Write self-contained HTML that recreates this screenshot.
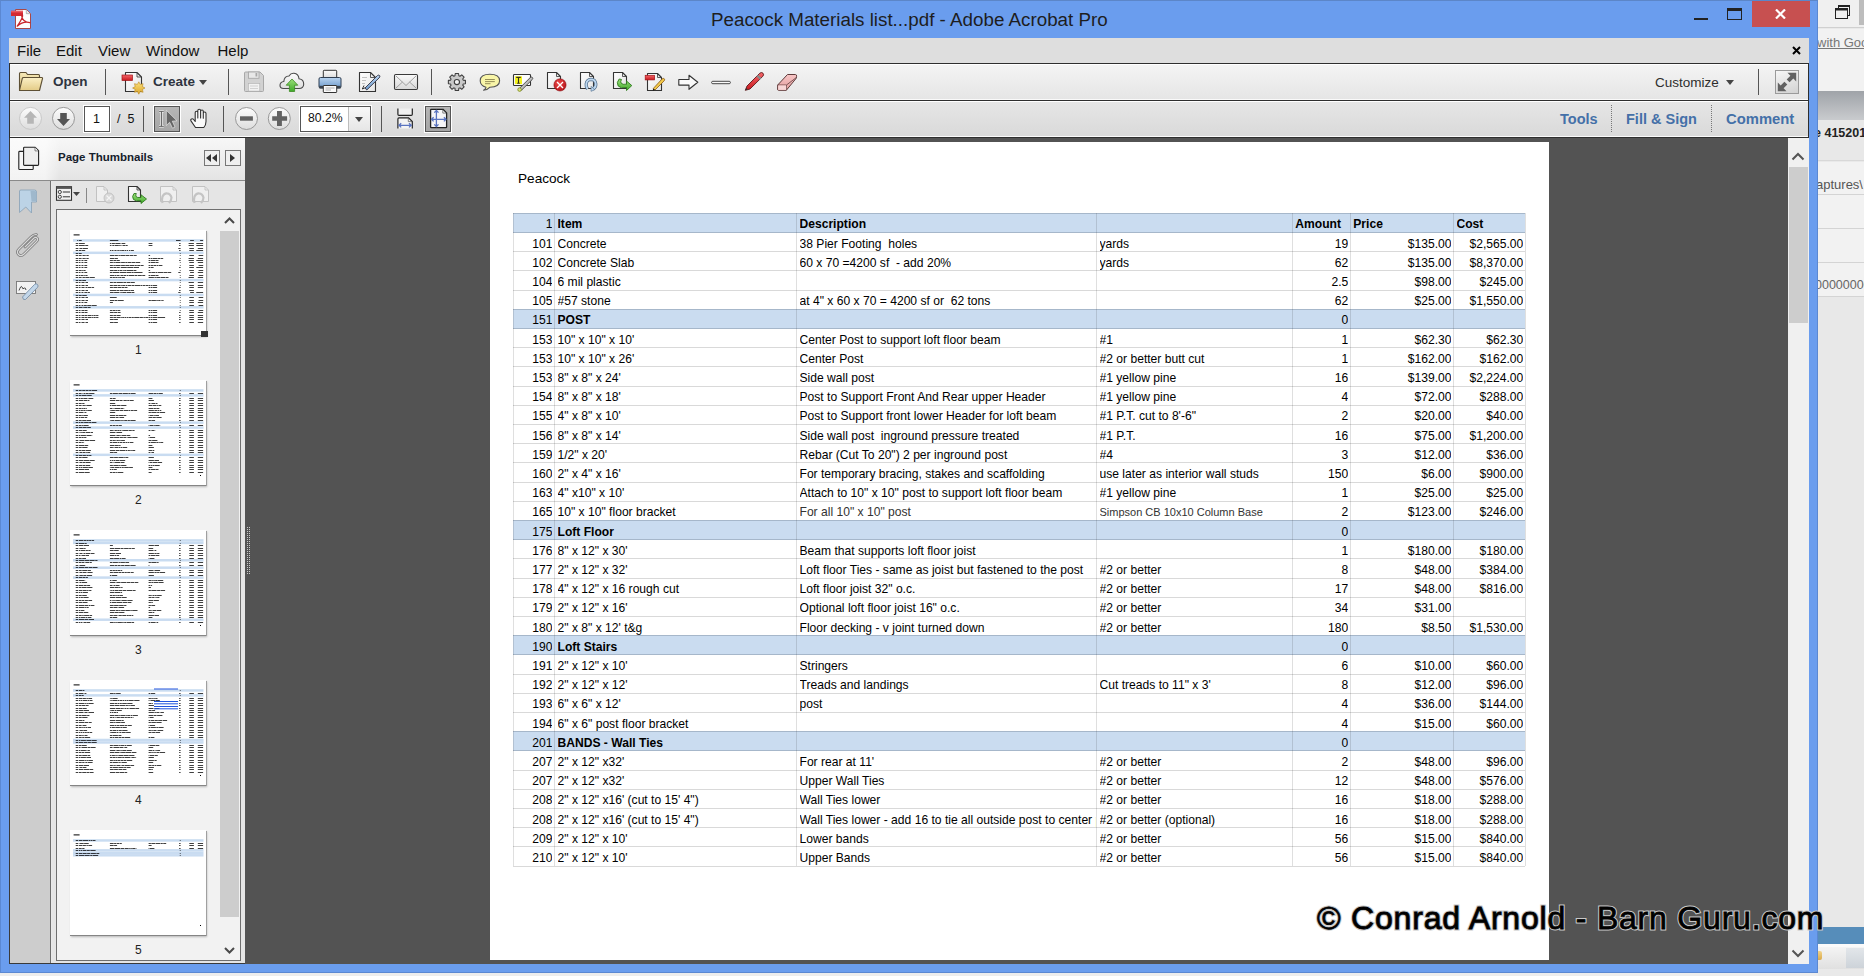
<!DOCTYPE html><html><head><meta charset="utf-8"><style>*{box-sizing:border-box}html,body{margin:0;padding:0}body{width:1864px;height:976px;position:relative;overflow:hidden;background:#EDEDED;font-family:"Liberation Sans", sans-serif;}.a{position:absolute}.tb{position:absolute;white-space:nowrap}</style></head><body><div class="a" style="left:1818px;top:0;width:46px;height:976px;background:#E9E9E9;overflow:hidden"><div class="a" style="left:0;top:0;width:46px;height:28px;background:#F0F0F0;border-bottom:1px solid #D0D0D0"></div><svg style="position:absolute;left:17px;top:4px;" width="16" height="16" viewBox="0 0 16 16"><rect x="3.5" y="1.5" width="11" height="10" fill="none" stroke="#222" stroke-width="1"/><rect x="3" y="1" width="12" height="2" fill="#222"/><rect x="0.5" y="4.5" width="12" height="10" fill="#F0F0F0" stroke="#222" stroke-width="1"/><rect x="0" y="4" width="13" height="2.5" fill="#222"/></svg><div class="a" style="left:41px;top:0;width:6px;height:25px;background:#BDBDBD"></div><div class="a" style="left:0;top:29px;width:46px;height:62px;background:#F2F2F2"></div><div class="tb" style="left:-1px;top:35px;font-size:13px;color:#777;text-decoration:underline">with Google</div><div class="a" style="left:0;top:91px;width:46px;height:29px;background:linear-gradient(#9FA3A8,#C9CBCE)"></div><div class="a" style="left:0;top:120px;width:46px;height:41px;background:#E8E8E8;border-bottom:1px solid #D8D8D8"></div><div class="tb" style="left:-4px;top:126px;font-size:12.5px;font-weight:bold;color:#222">e 41520190</div><div class="a" style="left:0;top:162px;width:46px;height:800px;background:#F2F2F2"></div><div class="tb" style="left:-2px;top:177px;font-size:13px;color:#555">aptures\</div><div class="a" style="left:0;top:194px;width:46px;height:1px;background:#D4D4D4"></div><div class="a" style="left:0;top:228px;width:46px;height:1px;background:#D4D4D4"></div><div class="a" style="left:0;top:262px;width:46px;height:1px;background:#D4D4D4"></div><div class="a" style="left:0;top:296px;width:46px;height:1px;background:#D4D4D4"></div><div class="tb" style="left:-3px;top:278px;font-size:12.5px;color:#666">00000000</div><div class="a" style="left:0;top:297px;width:46px;height:630px;background:#E8E8E8"></div><div class="a" style="left:0;top:927px;width:46px;height:17px;background:#568DBA"></div><div class="a" style="left:0;top:944px;width:46px;height:3px;background:#FAFAFA"></div><div class="a" style="left:0;top:947px;width:46px;height:22px;background:linear-gradient(#F4F4F4,#E0E0E0)"></div><div class="a" style="left:28px;top:948px;width:18px;height:20px;background:linear-gradient(#E2E6EA,#CDD3D9)"></div><div class="a" style="left:-2px;top:951px;width:6px;height:9px;border-radius:2px;background:linear-gradient(#F2D48A,#D9A94A)"></div></div><div class="a" style="left:0;top:973px;width:1818px;height:3px;background:#EDEDED"></div><div class="a" style="left:0;top:0;width:1818px;height:973px;background:#6A9DEE;border:1px solid #5B88D2;border-top-color:#5C86C8"></div><svg style="position:absolute;left:10px;top:8px;" width="23" height="23" viewBox="10 8 23 23"><path d="M15.5 9.5 H26.5 L30.5 13.5 V28.5 H15.5 Z" fill="#FDFDFD" stroke="#A84848" stroke-width="1"/><path d="M26.3 9.8 V13.7 H30.2" fill="#E6E6E6" stroke="#9A9A9A" stroke-width="0.7"/><rect x="11" y="10.8" width="12" height="5.2" fill="#D42A32"/><rect x="11" y="10.8" width="12" height="1.6" fill="#E85A60"/><path d="M17.2 26.2 C19.8 22.5 22 19 22.6 16.2 C22.9 14.6 21.8 14.4 21.7 16 C21.8 19.5 25 22.5 30 22.6 C26.5 21.8 21 22.8 17.2 26.2 Z" fill="none" stroke="#C8242C" stroke-width="1.2" stroke-linejoin="round"/></svg><div class="tb" style="left:711px;top:9px;font-size:18.8px;color:#1E1E1E;letter-spacing:0">Peacock Materials list...pdf - Adobe Acrobat Pro</div><div class="a" style="left:1694px;top:18px;width:14px;height:2px;background:#222"></div><div class="a" style="left:1727px;top:8px;width:15px;height:12px;border:1px solid #222;border-top:3px solid #222"></div><div class="a" style="left:1752px;top:1px;width:58px;height:26px;background:#C75050"></div><svg style="position:absolute;left:1775px;top:9px;" width="11" height="10" viewBox="0 0 11 10"><path d="M1 0.5 L10 9.5 M10 0.5 L1 9.5" stroke="#fff" stroke-width="2.2"/></svg><div class="a" style="left:9px;top:38px;width:1800px;height:25px;background:#DEDEDE"></div><div class="tb" style="left:17px;top:42px;font-size:15px;color:#111">File</div><div class="tb" style="left:56px;top:42px;font-size:15px;color:#111">Edit</div><div class="tb" style="left:98px;top:42px;font-size:15px;color:#111">View</div><div class="tb" style="left:146px;top:42px;font-size:15px;color:#111">Window</div><div class="tb" style="left:217.5px;top:42px;font-size:15px;color:#111">Help</div><svg style="position:absolute;left:1792px;top:46px;" width="9" height="9" viewBox="0 0 9 9"><path d="M1 1 L8 8 M8 1 L1 8" stroke="#000" stroke-width="2"/></svg><div class="a" style="left:9px;top:63px;width:1800px;height:38px;border:1px solid #2E2E2E;background:linear-gradient(#F4F4F4,#E5E5E5);box-shadow:inset 0 1px 0 #fff,inset 0 -1px 0 #fafafa"></div><div class="tb" style="left:53px;top:74px;font-size:13.5px;font-weight:bold;color:#2E3440">Open</div><div class="tb" style="left:153px;top:74px;font-size:13.5px;font-weight:bold;color:#2E3440">Create</div><svg style="position:absolute;left:199px;top:80px;" width="8" height="5" viewBox="0 0 8 5"><path d="M0 0 H8 L4 5 Z" fill="#444"/></svg><div class="a" style="left:105px;top:69px;width:1px;height:26px;background:#555"></div><div class="a" style="left:228px;top:69px;width:1px;height:26px;background:#555"></div><div class="a" style="left:431px;top:69px;width:1px;height:26px;background:#555"></div><div class="tb" style="left:1655px;top:75px;font-size:13.5px;color:#2E2E2E">Customize</div><svg style="position:absolute;left:1726px;top:80px;" width="8" height="5" viewBox="0 0 8 5"><path d="M0 0 H8 L4 5 Z" fill="#444"/></svg><div class="a" style="left:1758px;top:69px;width:1px;height:26px;background:#555"></div><div class="a" style="left:1775px;top:70px;width:24px;height:24px;border:1px solid #9A9A9A;background:linear-gradient(160deg,#F6F6F6,#D2D2D2)"></div><svg style="position:absolute;left:1775px;top:70px;" width="24" height="24" viewBox="0 0 24 24"><path d="M12.5 2.8 H21.2 V11.5 L18.3 8.6 L14.6 12.3 L11.7 9.4 L15.4 5.7 Z M11.5 21.2 H2.8 V12.5 L5.7 15.4 L9.4 11.7 L12.3 14.6 L8.6 18.3 Z" fill="#626262"/></svg><div class="a" style="left:9px;top:100px;width:1800px;height:38px;border:1px solid #2E2E2E;background:linear-gradient(#E6E6E6,#D9D9D9);box-shadow:inset 0 1px 0 #fff,inset 0 -1px 0 #fafafa"></div><div class="a" style="left:143px;top:106px;width:1px;height:26px;background:#555"></div><div class="a" style="left:223px;top:106px;width:1px;height:26px;background:#555"></div><div class="a" style="left:381px;top:106px;width:1px;height:26px;background:#555"></div><div class="a" style="left:84px;top:106px;width:26px;height:26px;background:#fff;border:1px solid #555;box-shadow:0 0 0 1px #fff"></div><div class="tb" style="left:93px;top:112px;font-size:12.5px;color:#111">1</div><div class="tb" style="left:117px;top:112px;font-size:12.5px;color:#111">/&nbsp; 5</div><div class="a" style="left:154px;top:106px;width:26px;height:26px;background:linear-gradient(#B6B6B6,#A6A6A6);border:1px solid #555;box-shadow:0 0 0 1px #fff"></div><div class="a" style="left:300px;top:106px;width:71px;height:26px;background:#fff;border:1px solid #555;box-shadow:0 0 0 1px #fff"></div><div class="a" style="left:348px;top:107px;width:22px;height:24px;background:linear-gradient(#F8F8F8,#E6E6E6);border-left:1px solid #BDBDBD"></div><svg style="position:absolute;left:355px;top:117px;" width="8" height="5" viewBox="0 0 8 5"><path d="M0 0 H8 L4 5 Z" fill="#444"/></svg><div class="tb" style="left:308px;top:111px;font-size:12.2px;color:#111">80.2%</div><div class="a" style="left:425px;top:106px;width:26px;height:26px;background:linear-gradient(#B6B6B6,#A6A6A6);border:1px solid #555;box-shadow:0 0 0 1px #fff"></div><div class="a" style="left:1611px;top:105px;width:1px;height:27px;border-left:1px dotted #777"></div><div class="a" style="left:1711px;top:105px;width:1px;height:27px;border-left:1px dotted #777"></div><div class="tb" style="left:1560px;top:111px;font-size:14.5px;font-weight:bold;color:#4470A8">Tools</div><div class="tb" style="left:1626px;top:111px;font-size:14.5px;font-weight:bold;color:#4470A8">Fill &amp; Sign</div><div class="tb" style="left:1726px;top:111px;font-size:14.8px;font-weight:bold;color:#4470A8">Comment</div><div class="a" style="left:9px;top:138px;width:236px;height:826px;background:#E9E9E9;border-left:1px solid #3A3A3A;border-bottom:1px solid #3A3A3A"></div><div class="a" style="left:10px;top:138px;width:235px;height:43px;background:linear-gradient(#F7F7F7,#E4E4E4);border-bottom:1px solid #8A8A8A"></div><div class="a" style="left:10px;top:138px;width:50px;height:42px;background:linear-gradient(to right,rgba(255,255,255,0.55) 70%,rgba(255,255,255,0))"></div><div class="tb" style="left:58px;top:151px;font-size:11.5px;font-weight:bold;color:#15202B">Page Thumbnails</div><div class="a" style="left:204px;top:150px;width:16px;height:16px;border:1px solid #777;background:#EFEFEF"></div><svg style="position:absolute;left:206px;top:154px;" width="12" height="8" viewBox="0 0 12 8"><path d="M5 0 L0 4 L5 8 Z M11 0 L6 4 L11 8 Z" fill="#333"/></svg><div class="a" style="left:225px;top:150px;width:16px;height:16px;border:1px solid #777;background:#EFEFEF"></div><svg style="position:absolute;left:230px;top:154px;" width="6" height="8" viewBox="0 0 6 8"><path d="M0 0 L5 4 L0 8 Z" fill="#333"/></svg><div class="a" style="left:10px;top:181px;width:41px;height:782px;background:#CDCDCD;border-right:1px solid #6E6E6E"></div><div class="a" style="left:52px;top:181px;width:193px;height:782px;background:#E5E5E5"></div><div class="a" style="left:56px;top:209px;width:185px;height:752px;background:#F2F2F2;border:1px solid #6E6E6E"></div><div class="a" style="left:220px;top:231px;width:19px;height:686px;background:#CDCDCD"></div><svg style="position:absolute;left:224px;top:216px;" width="11" height="9" viewBox="0 0 11 9"><path d="M1 7 L5.5 2.5 L10 7" stroke="#4A4A4A" stroke-width="2" fill="none"/></svg><svg style="position:absolute;left:224px;top:946px;" width="11" height="9" viewBox="0 0 11 9"><path d="M1 2 L5.5 6.5 L10 2" stroke="#4A4A4A" stroke-width="2" fill="none"/></svg><div class="a" style="left:70px;top:230px;width:136px;height:105px;background:#fff;overflow:hidden;box-shadow:0 1px 0 #858585,1px 1px 0 #a0a0a0,1px 2px 2px rgba(0,0,0,0.25)"><svg width="137" height="105" style="position:absolute;left:0;top:0"><rect x="0" y="0" width="137" height="105" fill="#fff"/><rect x="3.6" y="4.4" width="6" height="1" fill="#000"/><rect x="3.0" y="9.20" width="130.5" height="2.48" fill="#C9DCF1"/><rect x="7.2" y="10" width="0.8" height="1" fill="#000" opacity="0.75"/><rect x="8.7" y="10" width="3.0" height="1" fill="#000" opacity="0.75"/><rect x="39.9" y="10" width="8.4" height="1" fill="#000" opacity="0.75"/><rect x="106.0" y="10" width="4.6" height="1" fill="#000" opacity="0.75"/><rect x="120.1" y="10" width="3.8" height="1" fill="#000" opacity="0.75"/><rect x="130.1" y="10" width="3.0" height="1" fill="#000" opacity="0.75"/><rect x="5.7" y="13" width="2.3" height="1" fill="#000" opacity="0.75"/><rect x="8.7" y="13" width="6.1" height="1" fill="#000" opacity="0.75"/><rect x="39.9" y="13" width="1.5" height="1" fill="#000" opacity="0.75"/><rect x="41.9" y="13" width="3.0" height="1" fill="#000" opacity="0.75"/><rect x="45.3" y="13" width="5.3" height="1" fill="#000" opacity="0.75"/><rect x="51.5" y="13" width="3.8" height="1" fill="#000" opacity="0.75"/><rect x="78.6" y="13" width="3.8" height="1" fill="#000" opacity="0.75"/><rect x="109.1" y="13" width="1.5" height="1" fill="#000" opacity="0.75"/><rect x="118.6" y="13" width="5.3" height="1" fill="#000" opacity="0.75"/><rect x="126.3" y="13" width="6.8" height="1" fill="#000" opacity="0.75"/><rect x="5.7" y="15" width="2.3" height="1" fill="#000" opacity="0.75"/><rect x="8.7" y="15" width="6.1" height="1" fill="#000" opacity="0.75"/><rect x="15.2" y="15" width="3.0" height="1" fill="#000" opacity="0.75"/><rect x="39.9" y="15" width="1.5" height="1" fill="#000" opacity="0.75"/><rect x="41.9" y="15" width="0.8" height="1" fill="#000" opacity="0.75"/><rect x="43.0" y="15" width="1.5" height="1" fill="#000" opacity="0.75"/><rect x="45.0" y="15" width="3.8" height="1" fill="#000" opacity="0.75"/><rect x="49.2" y="15" width="1.5" height="1" fill="#000" opacity="0.75"/><rect x="51.5" y="15" width="0.8" height="1" fill="#000" opacity="0.75"/><rect x="52.7" y="15" width="2.3" height="1" fill="#000" opacity="0.75"/><rect x="55.4" y="15" width="2.3" height="1" fill="#000" opacity="0.75"/><rect x="78.6" y="15" width="3.8" height="1" fill="#000" opacity="0.75"/><rect x="109.1" y="15" width="1.5" height="1" fill="#000" opacity="0.75"/><rect x="118.6" y="15" width="5.3" height="1" fill="#000" opacity="0.75"/><rect x="126.3" y="15" width="6.8" height="1" fill="#000" opacity="0.75"/><rect x="5.7" y="18" width="2.3" height="1" fill="#000" opacity="0.75"/><rect x="8.7" y="18" width="0.8" height="1" fill="#000" opacity="0.75"/><rect x="9.9" y="18" width="2.3" height="1" fill="#000" opacity="0.75"/><rect x="12.6" y="18" width="5.3" height="1" fill="#000" opacity="0.75"/><rect x="108.3" y="18" width="2.3" height="1" fill="#000" opacity="0.75"/><rect x="119.3" y="18" width="4.6" height="1" fill="#000" opacity="0.75"/><rect x="127.8" y="18" width="5.3" height="1" fill="#000" opacity="0.75"/><rect x="5.7" y="20" width="2.3" height="1" fill="#000" opacity="0.75"/><rect x="8.7" y="20" width="2.3" height="1" fill="#000" opacity="0.75"/><rect x="11.4" y="20" width="3.8" height="1" fill="#000" opacity="0.75"/><rect x="39.9" y="20" width="1.5" height="1" fill="#000" opacity="0.75"/><rect x="41.9" y="20" width="1.5" height="1" fill="#000" opacity="0.75"/><rect x="43.8" y="20" width="0.8" height="1" fill="#000" opacity="0.75"/><rect x="45.0" y="20" width="1.5" height="1" fill="#000" opacity="0.75"/><rect x="46.9" y="20" width="0.8" height="1" fill="#000" opacity="0.75"/><rect x="48.1" y="20" width="1.5" height="1" fill="#000" opacity="0.75"/><rect x="50.0" y="20" width="0.8" height="1" fill="#000" opacity="0.75"/><rect x="51.2" y="20" width="3.0" height="1" fill="#000" opacity="0.75"/><rect x="54.6" y="20" width="1.5" height="1" fill="#000" opacity="0.75"/><rect x="56.6" y="20" width="1.5" height="1" fill="#000" opacity="0.75"/><rect x="58.9" y="20" width="1.5" height="1" fill="#000" opacity="0.75"/><rect x="60.9" y="20" width="3.0" height="1" fill="#000" opacity="0.75"/><rect x="109.1" y="20" width="1.5" height="1" fill="#000" opacity="0.75"/><rect x="119.3" y="20" width="4.6" height="1" fill="#000" opacity="0.75"/><rect x="126.3" y="20" width="6.8" height="1" fill="#000" opacity="0.75"/><rect x="3.0" y="21.58" width="130.5" height="2.48" fill="#C9DCF1"/><rect x="5.7" y="23" width="2.3" height="1" fill="#000" opacity="0.75"/><rect x="8.7" y="23" width="3.0" height="1" fill="#000" opacity="0.75"/><rect x="109.8" y="23" width="0.8" height="1" fill="#000" opacity="0.75"/><rect x="5.7" y="25" width="2.3" height="1" fill="#000" opacity="0.75"/><rect x="8.7" y="25" width="2.3" height="1" fill="#000" opacity="0.75"/><rect x="11.4" y="25" width="0.8" height="1" fill="#000" opacity="0.75"/><rect x="12.6" y="25" width="2.3" height="1" fill="#000" opacity="0.75"/><rect x="15.3" y="25" width="0.8" height="1" fill="#000" opacity="0.75"/><rect x="16.4" y="25" width="2.3" height="1" fill="#000" opacity="0.75"/><rect x="39.9" y="25" width="4.6" height="1" fill="#000" opacity="0.75"/><rect x="44.9" y="25" width="3.0" height="1" fill="#000" opacity="0.75"/><rect x="48.4" y="25" width="1.5" height="1" fill="#000" opacity="0.75"/><rect x="50.3" y="25" width="5.3" height="1" fill="#000" opacity="0.75"/><rect x="56.0" y="25" width="3.0" height="1" fill="#000" opacity="0.75"/><rect x="59.5" y="25" width="3.8" height="1" fill="#000" opacity="0.75"/><rect x="63.7" y="25" width="3.0" height="1" fill="#000" opacity="0.75"/><rect x="78.6" y="25" width="1.5" height="1" fill="#000" opacity="0.75"/><rect x="109.8" y="25" width="0.8" height="1" fill="#000" opacity="0.75"/><rect x="119.3" y="25" width="4.6" height="1" fill="#000" opacity="0.75"/><rect x="128.6" y="25" width="4.6" height="1" fill="#000" opacity="0.75"/><rect x="5.7" y="28" width="2.3" height="1" fill="#000" opacity="0.75"/><rect x="8.7" y="28" width="2.3" height="1" fill="#000" opacity="0.75"/><rect x="11.4" y="28" width="0.8" height="1" fill="#000" opacity="0.75"/><rect x="12.6" y="28" width="2.3" height="1" fill="#000" opacity="0.75"/><rect x="15.3" y="28" width="0.8" height="1" fill="#000" opacity="0.75"/><rect x="16.4" y="28" width="2.3" height="1" fill="#000" opacity="0.75"/><rect x="39.9" y="28" width="4.6" height="1" fill="#000" opacity="0.75"/><rect x="44.9" y="28" width="3.0" height="1" fill="#000" opacity="0.75"/><rect x="78.6" y="28" width="1.5" height="1" fill="#000" opacity="0.75"/><rect x="80.6" y="28" width="1.5" height="1" fill="#000" opacity="0.75"/><rect x="82.5" y="28" width="4.6" height="1" fill="#000" opacity="0.75"/><rect x="87.5" y="28" width="3.0" height="1" fill="#000" opacity="0.75"/><rect x="90.9" y="28" width="2.3" height="1" fill="#000" opacity="0.75"/><rect x="109.8" y="28" width="0.8" height="1" fill="#000" opacity="0.75"/><rect x="118.6" y="28" width="5.3" height="1" fill="#000" opacity="0.75"/><rect x="127.8" y="28" width="5.3" height="1" fill="#000" opacity="0.75"/><rect x="5.7" y="30" width="2.3" height="1" fill="#000" opacity="0.75"/><rect x="8.7" y="30" width="1.5" height="1" fill="#000" opacity="0.75"/><rect x="10.6" y="30" width="0.8" height="1" fill="#000" opacity="0.75"/><rect x="11.8" y="30" width="1.5" height="1" fill="#000" opacity="0.75"/><rect x="13.8" y="30" width="0.8" height="1" fill="#000" opacity="0.75"/><rect x="14.9" y="30" width="2.3" height="1" fill="#000" opacity="0.75"/><rect x="39.9" y="30" width="3.0" height="1" fill="#000" opacity="0.75"/><rect x="43.4" y="30" width="3.0" height="1" fill="#000" opacity="0.75"/><rect x="46.8" y="30" width="3.0" height="1" fill="#000" opacity="0.75"/><rect x="78.6" y="30" width="1.5" height="1" fill="#000" opacity="0.75"/><rect x="80.6" y="30" width="4.6" height="1" fill="#000" opacity="0.75"/><rect x="85.5" y="30" width="3.0" height="1" fill="#000" opacity="0.75"/><rect x="109.1" y="30" width="1.5" height="1" fill="#000" opacity="0.75"/><rect x="118.6" y="30" width="5.3" height="1" fill="#000" opacity="0.75"/><rect x="126.3" y="30" width="6.8" height="1" fill="#000" opacity="0.75"/><rect x="5.7" y="32" width="2.3" height="1" fill="#000" opacity="0.75"/><rect x="8.7" y="32" width="1.5" height="1" fill="#000" opacity="0.75"/><rect x="10.6" y="32" width="0.8" height="1" fill="#000" opacity="0.75"/><rect x="11.8" y="32" width="1.5" height="1" fill="#000" opacity="0.75"/><rect x="13.8" y="32" width="0.8" height="1" fill="#000" opacity="0.75"/><rect x="14.9" y="32" width="2.3" height="1" fill="#000" opacity="0.75"/><rect x="39.9" y="32" width="3.0" height="1" fill="#000" opacity="0.75"/><rect x="43.4" y="32" width="1.5" height="1" fill="#000" opacity="0.75"/><rect x="45.3" y="32" width="5.3" height="1" fill="#000" opacity="0.75"/><rect x="51.1" y="32" width="3.8" height="1" fill="#000" opacity="0.75"/><rect x="55.3" y="32" width="2.3" height="1" fill="#000" opacity="0.75"/><rect x="58.0" y="32" width="3.0" height="1" fill="#000" opacity="0.75"/><rect x="61.4" y="32" width="3.8" height="1" fill="#000" opacity="0.75"/><rect x="65.6" y="32" width="4.6" height="1" fill="#000" opacity="0.75"/><rect x="78.6" y="32" width="1.5" height="1" fill="#000" opacity="0.75"/><rect x="80.6" y="32" width="4.6" height="1" fill="#000" opacity="0.75"/><rect x="85.5" y="32" width="3.0" height="1" fill="#000" opacity="0.75"/><rect x="109.8" y="32" width="0.8" height="1" fill="#000" opacity="0.75"/><rect x="119.3" y="32" width="4.6" height="1" fill="#000" opacity="0.75"/><rect x="127.8" y="32" width="5.3" height="1" fill="#000" opacity="0.75"/><rect x="5.7" y="35" width="2.3" height="1" fill="#000" opacity="0.75"/><rect x="8.7" y="35" width="1.5" height="1" fill="#000" opacity="0.75"/><rect x="10.6" y="35" width="0.8" height="1" fill="#000" opacity="0.75"/><rect x="11.8" y="35" width="1.5" height="1" fill="#000" opacity="0.75"/><rect x="13.8" y="35" width="0.8" height="1" fill="#000" opacity="0.75"/><rect x="14.9" y="35" width="2.3" height="1" fill="#000" opacity="0.75"/><rect x="39.9" y="35" width="3.0" height="1" fill="#000" opacity="0.75"/><rect x="43.4" y="35" width="1.5" height="1" fill="#000" opacity="0.75"/><rect x="45.3" y="35" width="5.3" height="1" fill="#000" opacity="0.75"/><rect x="51.1" y="35" width="3.8" height="1" fill="#000" opacity="0.75"/><rect x="55.3" y="35" width="3.8" height="1" fill="#000" opacity="0.75"/><rect x="59.5" y="35" width="4.6" height="1" fill="#000" opacity="0.75"/><rect x="64.5" y="35" width="2.3" height="1" fill="#000" opacity="0.75"/><rect x="67.2" y="35" width="3.0" height="1" fill="#000" opacity="0.75"/><rect x="70.6" y="35" width="3.0" height="1" fill="#000" opacity="0.75"/><rect x="78.6" y="35" width="1.5" height="1" fill="#000" opacity="0.75"/><rect x="80.6" y="35" width="3.0" height="1" fill="#000" opacity="0.75"/><rect x="84.0" y="35" width="2.3" height="1" fill="#000" opacity="0.75"/><rect x="86.7" y="35" width="1.5" height="1" fill="#000" opacity="0.75"/><rect x="88.6" y="35" width="3.8" height="1" fill="#000" opacity="0.75"/><rect x="109.8" y="35" width="0.8" height="1" fill="#000" opacity="0.75"/><rect x="119.3" y="35" width="4.6" height="1" fill="#000" opacity="0.75"/><rect x="128.6" y="35" width="4.6" height="1" fill="#000" opacity="0.75"/><rect x="5.7" y="37" width="2.3" height="1" fill="#000" opacity="0.75"/><rect x="8.7" y="37" width="1.5" height="1" fill="#000" opacity="0.75"/><rect x="10.6" y="37" width="0.8" height="1" fill="#000" opacity="0.75"/><rect x="11.8" y="37" width="1.5" height="1" fill="#000" opacity="0.75"/><rect x="13.8" y="37" width="0.8" height="1" fill="#000" opacity="0.75"/><rect x="14.9" y="37" width="2.3" height="1" fill="#000" opacity="0.75"/><rect x="39.9" y="37" width="3.0" height="1" fill="#000" opacity="0.75"/><rect x="43.4" y="37" width="3.0" height="1" fill="#000" opacity="0.75"/><rect x="46.8" y="37" width="3.0" height="1" fill="#000" opacity="0.75"/><rect x="50.7" y="37" width="6.1" height="1" fill="#000" opacity="0.75"/><rect x="57.2" y="37" width="6.1" height="1" fill="#000" opacity="0.75"/><rect x="63.7" y="37" width="5.3" height="1" fill="#000" opacity="0.75"/><rect x="78.6" y="37" width="1.5" height="1" fill="#000" opacity="0.75"/><rect x="80.6" y="37" width="3.0" height="1" fill="#000" opacity="0.75"/><rect x="109.1" y="37" width="1.5" height="1" fill="#000" opacity="0.75"/><rect x="119.3" y="37" width="4.6" height="1" fill="#000" opacity="0.75"/><rect x="126.3" y="37" width="6.8" height="1" fill="#000" opacity="0.75"/><rect x="5.7" y="40" width="2.3" height="1" fill="#000" opacity="0.75"/><rect x="8.7" y="40" width="3.0" height="1" fill="#000" opacity="0.75"/><rect x="12.2" y="40" width="0.8" height="1" fill="#000" opacity="0.75"/><rect x="13.3" y="40" width="2.3" height="1" fill="#000" opacity="0.75"/><rect x="39.9" y="40" width="3.8" height="1" fill="#000" opacity="0.75"/><rect x="44.1" y="40" width="3.0" height="1" fill="#000" opacity="0.75"/><rect x="47.6" y="40" width="1.5" height="1" fill="#000" opacity="0.75"/><rect x="49.5" y="40" width="3.0" height="1" fill="#000" opacity="0.75"/><rect x="53.0" y="40" width="0.8" height="1" fill="#000" opacity="0.75"/><rect x="54.2" y="40" width="2.3" height="1" fill="#000" opacity="0.75"/><rect x="56.9" y="40" width="6.1" height="1" fill="#000" opacity="0.75"/><rect x="63.4" y="40" width="3.0" height="1" fill="#000" opacity="0.75"/><rect x="78.6" y="40" width="1.5" height="1" fill="#000" opacity="0.75"/><rect x="109.8" y="40" width="0.8" height="1" fill="#000" opacity="0.75"/><rect x="119.3" y="40" width="4.6" height="1" fill="#000" opacity="0.75"/><rect x="128.6" y="40" width="4.6" height="1" fill="#000" opacity="0.75"/><rect x="5.7" y="42" width="2.3" height="1" fill="#000" opacity="0.75"/><rect x="8.7" y="42" width="1.5" height="1" fill="#000" opacity="0.75"/><rect x="10.6" y="42" width="0.8" height="1" fill="#000" opacity="0.75"/><rect x="11.8" y="42" width="1.5" height="1" fill="#000" opacity="0.75"/><rect x="13.8" y="42" width="0.8" height="1" fill="#000" opacity="0.75"/><rect x="14.9" y="42" width="2.3" height="1" fill="#000" opacity="0.75"/><rect x="39.9" y="42" width="2.3" height="1" fill="#000" opacity="0.75"/><rect x="42.6" y="42" width="6.8" height="1" fill="#000" opacity="0.75"/><rect x="49.9" y="42" width="6.1" height="1" fill="#000" opacity="0.75"/><rect x="56.4" y="42" width="4.6" height="1" fill="#000" opacity="0.75"/><rect x="61.4" y="42" width="2.3" height="1" fill="#000" opacity="0.75"/><rect x="64.1" y="42" width="8.4" height="1" fill="#000" opacity="0.75"/><rect x="78.6" y="42" width="2.3" height="1" fill="#000" opacity="0.75"/><rect x="81.3" y="42" width="3.8" height="1" fill="#000" opacity="0.75"/><rect x="85.5" y="42" width="1.5" height="1" fill="#000" opacity="0.75"/><rect x="87.5" y="42" width="6.1" height="1" fill="#000" opacity="0.75"/><rect x="94.0" y="42" width="3.0" height="1" fill="#000" opacity="0.75"/><rect x="97.4" y="42" width="3.8" height="1" fill="#000" opacity="0.75"/><rect x="108.3" y="42" width="2.3" height="1" fill="#000" opacity="0.75"/><rect x="120.1" y="42" width="3.8" height="1" fill="#000" opacity="0.75"/><rect x="127.8" y="42" width="5.3" height="1" fill="#000" opacity="0.75"/><rect x="5.7" y="45" width="2.3" height="1" fill="#000" opacity="0.75"/><rect x="8.7" y="45" width="1.5" height="1" fill="#000" opacity="0.75"/><rect x="10.6" y="45" width="3.0" height="1" fill="#000" opacity="0.75"/><rect x="14.1" y="45" width="0.8" height="1" fill="#000" opacity="0.75"/><rect x="15.3" y="45" width="2.3" height="1" fill="#000" opacity="0.75"/><rect x="39.9" y="45" width="4.6" height="1" fill="#000" opacity="0.75"/><rect x="44.9" y="45" width="1.5" height="1" fill="#000" opacity="0.75"/><rect x="46.8" y="45" width="2.3" height="1" fill="#000" opacity="0.75"/><rect x="49.5" y="45" width="0.8" height="1" fill="#000" opacity="0.75"/><rect x="50.7" y="45" width="2.3" height="1" fill="#000" opacity="0.75"/><rect x="53.4" y="45" width="3.0" height="1" fill="#000" opacity="0.75"/><rect x="56.9" y="45" width="1.5" height="1" fill="#000" opacity="0.75"/><rect x="58.8" y="45" width="5.3" height="1" fill="#000" opacity="0.75"/><rect x="64.5" y="45" width="3.0" height="1" fill="#000" opacity="0.75"/><rect x="68.0" y="45" width="3.8" height="1" fill="#000" opacity="0.75"/><rect x="72.2" y="45" width="3.0" height="1" fill="#000" opacity="0.75"/><rect x="78.6" y="45" width="1.5" height="1" fill="#000" opacity="0.75"/><rect x="80.6" y="45" width="4.6" height="1" fill="#000" opacity="0.75"/><rect x="85.5" y="45" width="3.0" height="1" fill="#000" opacity="0.75"/><rect x="109.8" y="45" width="0.8" height="1" fill="#000" opacity="0.75"/><rect x="119.3" y="45" width="4.6" height="1" fill="#000" opacity="0.75"/><rect x="128.6" y="45" width="4.6" height="1" fill="#000" opacity="0.75"/><rect x="5.7" y="47" width="2.3" height="1" fill="#000" opacity="0.75"/><rect x="8.7" y="47" width="2.3" height="1" fill="#000" opacity="0.75"/><rect x="11.4" y="47" width="0.8" height="1" fill="#000" opacity="0.75"/><rect x="12.6" y="47" width="2.3" height="1" fill="#000" opacity="0.75"/><rect x="15.3" y="47" width="3.8" height="1" fill="#000" opacity="0.75"/><rect x="19.5" y="47" width="5.3" height="1" fill="#000" opacity="0.75"/><rect x="39.9" y="47" width="2.3" height="1" fill="#000" opacity="0.75"/><rect x="42.6" y="47" width="2.3" height="1" fill="#000" opacity="0.75"/><rect x="45.3" y="47" width="2.3" height="1" fill="#000" opacity="0.75"/><rect x="48.0" y="47" width="0.8" height="1" fill="#000" opacity="0.75"/><rect x="49.2" y="47" width="2.3" height="1" fill="#000" opacity="0.75"/><rect x="51.9" y="47" width="3.0" height="1" fill="#000" opacity="0.75"/><rect x="78.6" y="47" width="5.3" height="1" fill="#000" opacity="0.75"/><rect x="84.4" y="47" width="1.5" height="1" fill="#000" opacity="0.75"/><rect x="86.3" y="47" width="3.8" height="1" fill="#000" opacity="0.75"/><rect x="90.5" y="47" width="4.6" height="1" fill="#000" opacity="0.75"/><rect x="95.5" y="47" width="3.0" height="1" fill="#000" opacity="0.75"/><rect x="109.8" y="47" width="0.8" height="1" fill="#000" opacity="0.75"/><rect x="118.6" y="47" width="5.3" height="1" fill="#000" opacity="0.75"/><rect x="127.8" y="47" width="5.3" height="1" fill="#000" opacity="0.75"/><rect x="3.0" y="48.83" width="130.5" height="2.48" fill="#C9DCF1"/><rect x="5.7" y="50" width="2.3" height="1" fill="#000" opacity="0.75"/><rect x="8.7" y="50" width="3.0" height="1" fill="#000" opacity="0.75"/><rect x="12.2" y="50" width="3.8" height="1" fill="#000" opacity="0.75"/><rect x="109.8" y="50" width="0.8" height="1" fill="#000" opacity="0.75"/><rect x="5.7" y="52" width="2.3" height="1" fill="#000" opacity="0.75"/><rect x="8.7" y="52" width="1.5" height="1" fill="#000" opacity="0.75"/><rect x="10.6" y="52" width="0.8" height="1" fill="#000" opacity="0.75"/><rect x="11.8" y="52" width="2.3" height="1" fill="#000" opacity="0.75"/><rect x="14.5" y="52" width="0.8" height="1" fill="#000" opacity="0.75"/><rect x="15.7" y="52" width="2.3" height="1" fill="#000" opacity="0.75"/><rect x="39.9" y="52" width="3.0" height="1" fill="#000" opacity="0.75"/><rect x="43.4" y="52" width="3.0" height="1" fill="#000" opacity="0.75"/><rect x="46.8" y="52" width="6.1" height="1" fill="#000" opacity="0.75"/><rect x="53.3" y="52" width="3.0" height="1" fill="#000" opacity="0.75"/><rect x="56.8" y="52" width="3.8" height="1" fill="#000" opacity="0.75"/><rect x="61.0" y="52" width="3.8" height="1" fill="#000" opacity="0.75"/><rect x="109.8" y="52" width="0.8" height="1" fill="#000" opacity="0.75"/><rect x="118.6" y="52" width="5.3" height="1" fill="#000" opacity="0.75"/><rect x="127.8" y="52" width="5.3" height="1" fill="#000" opacity="0.75"/><rect x="5.7" y="55" width="2.3" height="1" fill="#000" opacity="0.75"/><rect x="8.7" y="55" width="1.5" height="1" fill="#000" opacity="0.75"/><rect x="10.6" y="55" width="0.8" height="1" fill="#000" opacity="0.75"/><rect x="11.8" y="55" width="2.3" height="1" fill="#000" opacity="0.75"/><rect x="14.5" y="55" width="0.8" height="1" fill="#000" opacity="0.75"/><rect x="15.7" y="55" width="2.3" height="1" fill="#000" opacity="0.75"/><rect x="39.9" y="55" width="3.0" height="1" fill="#000" opacity="0.75"/><rect x="43.4" y="55" width="3.8" height="1" fill="#000" opacity="0.75"/><rect x="47.6" y="55" width="3.0" height="1" fill="#000" opacity="0.75"/><rect x="51.1" y="55" width="0.8" height="1" fill="#000" opacity="0.75"/><rect x="52.2" y="55" width="3.0" height="1" fill="#000" opacity="0.75"/><rect x="55.7" y="55" width="1.5" height="1" fill="#000" opacity="0.75"/><rect x="57.6" y="55" width="3.8" height="1" fill="#000" opacity="0.75"/><rect x="61.8" y="55" width="2.3" height="1" fill="#000" opacity="0.75"/><rect x="64.5" y="55" width="6.1" height="1" fill="#000" opacity="0.75"/><rect x="71.0" y="55" width="1.5" height="1" fill="#000" opacity="0.75"/><rect x="73.0" y="55" width="2.3" height="1" fill="#000" opacity="0.75"/><rect x="75.7" y="55" width="2.6" height="1" fill="#000" opacity="0.75"/><rect x="78.6" y="55" width="1.5" height="1" fill="#000" opacity="0.75"/><rect x="80.6" y="55" width="1.5" height="1" fill="#000" opacity="0.75"/><rect x="82.5" y="55" width="4.6" height="1" fill="#000" opacity="0.75"/><rect x="109.8" y="55" width="0.8" height="1" fill="#000" opacity="0.75"/><rect x="119.3" y="55" width="4.6" height="1" fill="#000" opacity="0.75"/><rect x="127.8" y="55" width="5.3" height="1" fill="#000" opacity="0.75"/><rect x="5.7" y="57" width="2.3" height="1" fill="#000" opacity="0.75"/><rect x="8.7" y="57" width="1.5" height="1" fill="#000" opacity="0.75"/><rect x="10.6" y="57" width="0.8" height="1" fill="#000" opacity="0.75"/><rect x="11.8" y="57" width="2.3" height="1" fill="#000" opacity="0.75"/><rect x="14.5" y="57" width="0.8" height="1" fill="#000" opacity="0.75"/><rect x="15.7" y="57" width="1.5" height="1" fill="#000" opacity="0.75"/><rect x="17.6" y="57" width="3.8" height="1" fill="#000" opacity="0.75"/><rect x="21.8" y="57" width="2.3" height="1" fill="#000" opacity="0.75"/><rect x="39.9" y="57" width="3.0" height="1" fill="#000" opacity="0.75"/><rect x="43.4" y="57" width="3.8" height="1" fill="#000" opacity="0.75"/><rect x="47.6" y="57" width="3.8" height="1" fill="#000" opacity="0.75"/><rect x="51.8" y="57" width="2.3" height="1" fill="#000" opacity="0.75"/><rect x="54.5" y="57" width="3.0" height="1" fill="#000" opacity="0.75"/><rect x="78.6" y="57" width="1.5" height="1" fill="#000" opacity="0.75"/><rect x="80.6" y="57" width="1.5" height="1" fill="#000" opacity="0.75"/><rect x="82.5" y="57" width="4.6" height="1" fill="#000" opacity="0.75"/><rect x="109.1" y="57" width="1.5" height="1" fill="#000" opacity="0.75"/><rect x="119.3" y="57" width="4.6" height="1" fill="#000" opacity="0.75"/><rect x="127.8" y="57" width="5.3" height="1" fill="#000" opacity="0.75"/><rect x="5.7" y="60" width="2.3" height="1" fill="#000" opacity="0.75"/><rect x="8.7" y="60" width="1.5" height="1" fill="#000" opacity="0.75"/><rect x="10.6" y="60" width="0.8" height="1" fill="#000" opacity="0.75"/><rect x="11.8" y="60" width="2.3" height="1" fill="#000" opacity="0.75"/><rect x="14.5" y="60" width="0.8" height="1" fill="#000" opacity="0.75"/><rect x="15.7" y="60" width="2.3" height="1" fill="#000" opacity="0.75"/><rect x="39.9" y="60" width="6.1" height="1" fill="#000" opacity="0.75"/><rect x="46.4" y="60" width="3.0" height="1" fill="#000" opacity="0.75"/><rect x="49.9" y="60" width="3.8" height="1" fill="#000" opacity="0.75"/><rect x="54.1" y="60" width="3.8" height="1" fill="#000" opacity="0.75"/><rect x="58.3" y="60" width="2.3" height="1" fill="#000" opacity="0.75"/><rect x="61.0" y="60" width="3.0" height="1" fill="#000" opacity="0.75"/><rect x="78.6" y="60" width="1.5" height="1" fill="#000" opacity="0.75"/><rect x="80.6" y="60" width="1.5" height="1" fill="#000" opacity="0.75"/><rect x="82.5" y="60" width="4.6" height="1" fill="#000" opacity="0.75"/><rect x="109.1" y="60" width="1.5" height="1" fill="#000" opacity="0.75"/><rect x="119.3" y="60" width="4.6" height="1" fill="#000" opacity="0.75"/><rect x="5.7" y="62" width="2.3" height="1" fill="#000" opacity="0.75"/><rect x="8.7" y="62" width="1.5" height="1" fill="#000" opacity="0.75"/><rect x="10.6" y="62" width="0.8" height="1" fill="#000" opacity="0.75"/><rect x="11.8" y="62" width="1.5" height="1" fill="#000" opacity="0.75"/><rect x="13.8" y="62" width="0.8" height="1" fill="#000" opacity="0.75"/><rect x="14.9" y="62" width="2.3" height="1" fill="#000" opacity="0.75"/><rect x="17.6" y="62" width="2.3" height="1" fill="#000" opacity="0.75"/><rect x="39.9" y="62" width="3.8" height="1" fill="#000" opacity="0.75"/><rect x="44.1" y="62" width="5.3" height="1" fill="#000" opacity="0.75"/><rect x="49.9" y="62" width="0.8" height="1" fill="#000" opacity="0.75"/><rect x="51.1" y="62" width="0.8" height="1" fill="#000" opacity="0.75"/><rect x="52.2" y="62" width="3.8" height="1" fill="#000" opacity="0.75"/><rect x="56.5" y="62" width="4.6" height="1" fill="#000" opacity="0.75"/><rect x="61.4" y="62" width="3.0" height="1" fill="#000" opacity="0.75"/><rect x="78.6" y="62" width="1.5" height="1" fill="#000" opacity="0.75"/><rect x="80.6" y="62" width="1.5" height="1" fill="#000" opacity="0.75"/><rect x="82.5" y="62" width="4.6" height="1" fill="#000" opacity="0.75"/><rect x="108.3" y="62" width="2.3" height="1" fill="#000" opacity="0.75"/><rect x="120.1" y="62" width="3.8" height="1" fill="#000" opacity="0.75"/><rect x="126.3" y="62" width="6.8" height="1" fill="#000" opacity="0.75"/><rect x="3.0" y="63.69" width="130.5" height="2.48" fill="#C9DCF1"/><rect x="5.7" y="65" width="2.3" height="1" fill="#000" opacity="0.75"/><rect x="8.7" y="65" width="3.0" height="1" fill="#000" opacity="0.75"/><rect x="12.2" y="65" width="4.6" height="1" fill="#000" opacity="0.75"/><rect x="109.8" y="65" width="0.8" height="1" fill="#000" opacity="0.75"/><rect x="5.7" y="67" width="2.3" height="1" fill="#000" opacity="0.75"/><rect x="8.7" y="67" width="1.5" height="1" fill="#000" opacity="0.75"/><rect x="10.6" y="67" width="0.8" height="1" fill="#000" opacity="0.75"/><rect x="11.8" y="67" width="2.3" height="1" fill="#000" opacity="0.75"/><rect x="14.5" y="67" width="0.8" height="1" fill="#000" opacity="0.75"/><rect x="15.7" y="67" width="2.3" height="1" fill="#000" opacity="0.75"/><rect x="39.9" y="67" width="6.8" height="1" fill="#000" opacity="0.75"/><rect x="109.8" y="67" width="0.8" height="1" fill="#000" opacity="0.75"/><rect x="119.3" y="67" width="4.6" height="1" fill="#000" opacity="0.75"/><rect x="128.6" y="67" width="4.6" height="1" fill="#000" opacity="0.75"/><rect x="5.7" y="70" width="2.3" height="1" fill="#000" opacity="0.75"/><rect x="8.7" y="70" width="1.5" height="1" fill="#000" opacity="0.75"/><rect x="10.6" y="70" width="0.8" height="1" fill="#000" opacity="0.75"/><rect x="11.8" y="70" width="2.3" height="1" fill="#000" opacity="0.75"/><rect x="14.5" y="70" width="0.8" height="1" fill="#000" opacity="0.75"/><rect x="15.7" y="70" width="2.3" height="1" fill="#000" opacity="0.75"/><rect x="39.9" y="70" width="4.6" height="1" fill="#000" opacity="0.75"/><rect x="44.9" y="70" width="2.3" height="1" fill="#000" opacity="0.75"/><rect x="47.6" y="70" width="6.1" height="1" fill="#000" opacity="0.75"/><rect x="78.6" y="70" width="2.3" height="1" fill="#000" opacity="0.75"/><rect x="81.3" y="70" width="4.6" height="1" fill="#000" opacity="0.75"/><rect x="86.3" y="70" width="1.5" height="1" fill="#000" opacity="0.75"/><rect x="88.2" y="70" width="2.3" height="1" fill="#000" opacity="0.75"/><rect x="90.9" y="70" width="0.8" height="1" fill="#000" opacity="0.75"/><rect x="92.1" y="70" width="1.5" height="1" fill="#000" opacity="0.75"/><rect x="109.8" y="70" width="0.8" height="1" fill="#000" opacity="0.75"/><rect x="119.3" y="70" width="4.6" height="1" fill="#000" opacity="0.75"/><rect x="128.6" y="70" width="4.6" height="1" fill="#000" opacity="0.75"/><rect x="5.7" y="72" width="2.3" height="1" fill="#000" opacity="0.75"/><rect x="8.7" y="72" width="1.5" height="1" fill="#000" opacity="0.75"/><rect x="10.6" y="72" width="0.8" height="1" fill="#000" opacity="0.75"/><rect x="11.8" y="72" width="1.5" height="1" fill="#000" opacity="0.75"/><rect x="13.8" y="72" width="0.8" height="1" fill="#000" opacity="0.75"/><rect x="14.9" y="72" width="2.3" height="1" fill="#000" opacity="0.75"/><rect x="39.9" y="72" width="3.0" height="1" fill="#000" opacity="0.75"/><rect x="109.8" y="72" width="0.8" height="1" fill="#000" opacity="0.75"/><rect x="119.3" y="72" width="4.6" height="1" fill="#000" opacity="0.75"/><rect x="127.8" y="72" width="5.3" height="1" fill="#000" opacity="0.75"/><rect x="5.7" y="75" width="2.3" height="1" fill="#000" opacity="0.75"/><rect x="8.7" y="75" width="1.5" height="1" fill="#000" opacity="0.75"/><rect x="10.6" y="75" width="0.8" height="1" fill="#000" opacity="0.75"/><rect x="11.8" y="75" width="1.5" height="1" fill="#000" opacity="0.75"/><rect x="13.8" y="75" width="3.0" height="1" fill="#000" opacity="0.75"/><rect x="17.2" y="75" width="3.8" height="1" fill="#000" opacity="0.75"/><rect x="21.4" y="75" width="5.3" height="1" fill="#000" opacity="0.75"/><rect x="109.8" y="75" width="0.8" height="1" fill="#000" opacity="0.75"/><rect x="119.3" y="75" width="4.6" height="1" fill="#000" opacity="0.75"/><rect x="128.6" y="75" width="4.6" height="1" fill="#000" opacity="0.75"/><rect x="3.0" y="76.07" width="130.5" height="2.48" fill="#C9DCF1"/><rect x="5.7" y="77" width="2.3" height="1" fill="#000" opacity="0.75"/><rect x="8.7" y="77" width="3.8" height="1" fill="#000" opacity="0.75"/><rect x="12.9" y="77" width="0.8" height="1" fill="#000" opacity="0.75"/><rect x="14.1" y="77" width="3.0" height="1" fill="#000" opacity="0.75"/><rect x="17.6" y="77" width="3.0" height="1" fill="#000" opacity="0.75"/><rect x="109.8" y="77" width="0.8" height="1" fill="#000" opacity="0.75"/><rect x="5.7" y="80" width="2.3" height="1" fill="#000" opacity="0.75"/><rect x="8.7" y="80" width="1.5" height="1" fill="#000" opacity="0.75"/><rect x="10.6" y="80" width="0.8" height="1" fill="#000" opacity="0.75"/><rect x="11.8" y="80" width="2.3" height="1" fill="#000" opacity="0.75"/><rect x="14.5" y="80" width="3.0" height="1" fill="#000" opacity="0.75"/><rect x="39.9" y="80" width="2.3" height="1" fill="#000" opacity="0.75"/><rect x="42.6" y="80" width="3.0" height="1" fill="#000" opacity="0.75"/><rect x="46.1" y="80" width="1.5" height="1" fill="#000" opacity="0.75"/><rect x="48.0" y="80" width="2.3" height="1" fill="#000" opacity="0.75"/><rect x="78.6" y="80" width="1.5" height="1" fill="#000" opacity="0.75"/><rect x="80.6" y="80" width="1.5" height="1" fill="#000" opacity="0.75"/><rect x="82.5" y="80" width="4.6" height="1" fill="#000" opacity="0.75"/><rect x="109.8" y="80" width="0.8" height="1" fill="#000" opacity="0.75"/><rect x="119.3" y="80" width="4.6" height="1" fill="#000" opacity="0.75"/><rect x="128.6" y="80" width="4.6" height="1" fill="#000" opacity="0.75"/><rect x="5.7" y="82" width="2.3" height="1" fill="#000" opacity="0.75"/><rect x="8.7" y="82" width="1.5" height="1" fill="#000" opacity="0.75"/><rect x="10.6" y="82" width="0.8" height="1" fill="#000" opacity="0.75"/><rect x="11.8" y="82" width="2.3" height="1" fill="#000" opacity="0.75"/><rect x="14.5" y="82" width="3.0" height="1" fill="#000" opacity="0.75"/><rect x="39.9" y="82" width="3.8" height="1" fill="#000" opacity="0.75"/><rect x="44.1" y="82" width="3.0" height="1" fill="#000" opacity="0.75"/><rect x="47.6" y="82" width="3.0" height="1" fill="#000" opacity="0.75"/><rect x="78.6" y="82" width="1.5" height="1" fill="#000" opacity="0.75"/><rect x="80.6" y="82" width="1.5" height="1" fill="#000" opacity="0.75"/><rect x="82.5" y="82" width="4.6" height="1" fill="#000" opacity="0.75"/><rect x="109.1" y="82" width="1.5" height="1" fill="#000" opacity="0.75"/><rect x="119.3" y="82" width="4.6" height="1" fill="#000" opacity="0.75"/><rect x="127.8" y="82" width="5.3" height="1" fill="#000" opacity="0.75"/><rect x="5.7" y="85" width="2.3" height="1" fill="#000" opacity="0.75"/><rect x="8.7" y="85" width="1.5" height="1" fill="#000" opacity="0.75"/><rect x="10.6" y="85" width="0.8" height="1" fill="#000" opacity="0.75"/><rect x="11.8" y="85" width="2.3" height="1" fill="#000" opacity="0.75"/><rect x="14.5" y="85" width="3.0" height="1" fill="#000" opacity="0.75"/><rect x="18.0" y="85" width="3.0" height="1" fill="#000" opacity="0.75"/><rect x="21.4" y="85" width="1.5" height="1" fill="#000" opacity="0.75"/><rect x="23.4" y="85" width="2.3" height="1" fill="#000" opacity="0.75"/><rect x="26.1" y="85" width="2.3" height="1" fill="#000" opacity="0.75"/><rect x="39.9" y="85" width="3.0" height="1" fill="#000" opacity="0.75"/><rect x="43.4" y="85" width="3.0" height="1" fill="#000" opacity="0.75"/><rect x="46.8" y="85" width="3.8" height="1" fill="#000" opacity="0.75"/><rect x="78.6" y="85" width="1.5" height="1" fill="#000" opacity="0.75"/><rect x="80.6" y="85" width="1.5" height="1" fill="#000" opacity="0.75"/><rect x="82.5" y="85" width="4.6" height="1" fill="#000" opacity="0.75"/><rect x="109.1" y="85" width="1.5" height="1" fill="#000" opacity="0.75"/><rect x="119.3" y="85" width="4.6" height="1" fill="#000" opacity="0.75"/><rect x="127.8" y="85" width="5.3" height="1" fill="#000" opacity="0.75"/><rect x="5.7" y="87" width="2.3" height="1" fill="#000" opacity="0.75"/><rect x="8.7" y="87" width="1.5" height="1" fill="#000" opacity="0.75"/><rect x="10.6" y="87" width="0.8" height="1" fill="#000" opacity="0.75"/><rect x="11.8" y="87" width="2.3" height="1" fill="#000" opacity="0.75"/><rect x="14.5" y="87" width="3.0" height="1" fill="#000" opacity="0.75"/><rect x="18.0" y="87" width="3.0" height="1" fill="#000" opacity="0.75"/><rect x="21.4" y="87" width="1.5" height="1" fill="#000" opacity="0.75"/><rect x="23.4" y="87" width="2.3" height="1" fill="#000" opacity="0.75"/><rect x="26.1" y="87" width="2.3" height="1" fill="#000" opacity="0.75"/><rect x="39.9" y="87" width="3.0" height="1" fill="#000" opacity="0.75"/><rect x="43.4" y="87" width="3.0" height="1" fill="#000" opacity="0.75"/><rect x="46.8" y="87" width="3.8" height="1" fill="#000" opacity="0.75"/><rect x="51.1" y="87" width="0.8" height="1" fill="#000" opacity="0.75"/><rect x="52.2" y="87" width="2.3" height="1" fill="#000" opacity="0.75"/><rect x="54.9" y="87" width="1.5" height="1" fill="#000" opacity="0.75"/><rect x="56.9" y="87" width="1.5" height="1" fill="#000" opacity="0.75"/><rect x="58.8" y="87" width="2.3" height="1" fill="#000" opacity="0.75"/><rect x="61.5" y="87" width="2.3" height="1" fill="#000" opacity="0.75"/><rect x="64.2" y="87" width="5.3" height="1" fill="#000" opacity="0.75"/><rect x="69.9" y="87" width="3.0" height="1" fill="#000" opacity="0.75"/><rect x="73.4" y="87" width="1.5" height="1" fill="#000" opacity="0.75"/><rect x="75.3" y="87" width="2.9" height="1" fill="#000" opacity="0.75"/><rect x="78.6" y="87" width="1.5" height="1" fill="#000" opacity="0.75"/><rect x="80.6" y="87" width="1.5" height="1" fill="#000" opacity="0.75"/><rect x="82.5" y="87" width="4.6" height="1" fill="#000" opacity="0.75"/><rect x="87.5" y="87" width="7.6" height="1" fill="#000" opacity="0.75"/><rect x="109.1" y="87" width="1.5" height="1" fill="#000" opacity="0.75"/><rect x="119.3" y="87" width="4.6" height="1" fill="#000" opacity="0.75"/><rect x="127.8" y="87" width="5.3" height="1" fill="#000" opacity="0.75"/><rect x="5.7" y="89" width="2.3" height="1" fill="#000" opacity="0.75"/><rect x="8.7" y="89" width="1.5" height="1" fill="#000" opacity="0.75"/><rect x="10.6" y="89" width="0.8" height="1" fill="#000" opacity="0.75"/><rect x="11.8" y="89" width="2.3" height="1" fill="#000" opacity="0.75"/><rect x="14.5" y="89" width="0.8" height="1" fill="#000" opacity="0.75"/><rect x="15.7" y="89" width="2.3" height="1" fill="#000" opacity="0.75"/><rect x="39.9" y="89" width="3.8" height="1" fill="#000" opacity="0.75"/><rect x="44.1" y="89" width="3.8" height="1" fill="#000" opacity="0.75"/><rect x="78.6" y="89" width="1.5" height="1" fill="#000" opacity="0.75"/><rect x="80.6" y="89" width="1.5" height="1" fill="#000" opacity="0.75"/><rect x="82.5" y="89" width="4.6" height="1" fill="#000" opacity="0.75"/><rect x="109.1" y="89" width="1.5" height="1" fill="#000" opacity="0.75"/><rect x="119.3" y="89" width="4.6" height="1" fill="#000" opacity="0.75"/><rect x="127.8" y="89" width="5.3" height="1" fill="#000" opacity="0.75"/><rect x="5.7" y="92" width="2.3" height="1" fill="#000" opacity="0.75"/><rect x="8.7" y="92" width="1.5" height="1" fill="#000" opacity="0.75"/><rect x="10.6" y="92" width="0.8" height="1" fill="#000" opacity="0.75"/><rect x="11.8" y="92" width="2.3" height="1" fill="#000" opacity="0.75"/><rect x="14.5" y="92" width="0.8" height="1" fill="#000" opacity="0.75"/><rect x="15.7" y="92" width="2.3" height="1" fill="#000" opacity="0.75"/><rect x="39.9" y="92" width="3.8" height="1" fill="#000" opacity="0.75"/><rect x="44.1" y="92" width="3.8" height="1" fill="#000" opacity="0.75"/><rect x="78.6" y="92" width="1.5" height="1" fill="#000" opacity="0.75"/><rect x="80.6" y="92" width="1.5" height="1" fill="#000" opacity="0.75"/><rect x="82.5" y="92" width="4.6" height="1" fill="#000" opacity="0.75"/><rect x="109.1" y="92" width="1.5" height="1" fill="#000" opacity="0.75"/><rect x="119.3" y="92" width="4.6" height="1" fill="#000" opacity="0.75"/><rect x="127.8" y="92" width="5.3" height="1" fill="#000" opacity="0.75"/></svg></div><div class="tb" style="left:135px;top:343px;font-size:12px;color:#222">1</div><div class="a" style="left:70px;top:380px;width:136px;height:105px;background:#fff;overflow:hidden;box-shadow:0 1px 0 #858585,1px 1px 0 #a0a0a0,1px 2px 2px rgba(0,0,0,0.25)"><svg width="137" height="105" style="position:absolute;left:0;top:0"><rect x="0" y="0" width="137" height="105" fill="#fff"/><rect x="3.6" y="4.4" width="6" height="1" fill="#000"/><rect x="3.0" y="9.20" width="130.5" height="2.48" fill="#C9DCF1"/><rect x="5.7" y="10" width="2.3" height="1" fill="#000" opacity="0.75"/><rect x="8.7" y="10" width="3.0" height="1" fill="#000" opacity="0.75"/><rect x="12.2" y="10" width="3.0" height="1" fill="#000" opacity="0.75"/><rect x="15.6" y="10" width="3.0" height="1" fill="#000" opacity="0.75"/><rect x="19.1" y="10" width="2.3" height="1" fill="#000" opacity="0.75"/><rect x="21.8" y="10" width="5.3" height="1" fill="#000" opacity="0.75"/><rect x="109.8" y="10" width="0.8" height="1" fill="#000" opacity="0.75"/><rect x="5.7" y="13" width="2.3" height="1" fill="#000" opacity="0.75"/><rect x="8.7" y="13" width="2.3" height="1" fill="#000" opacity="0.75"/><rect x="11.4" y="13" width="0.8" height="1" fill="#000" opacity="0.75"/><rect x="12.6" y="13" width="0.8" height="1" fill="#000" opacity="0.75"/><rect x="13.8" y="13" width="1.5" height="1" fill="#000" opacity="0.75"/><rect x="15.7" y="13" width="3.0" height="1" fill="#000" opacity="0.75"/><rect x="19.1" y="13" width="5.3" height="1" fill="#000" opacity="0.75"/><rect x="39.9" y="13" width="2.3" height="1" fill="#000" opacity="0.75"/><rect x="42.6" y="13" width="5.3" height="1" fill="#000" opacity="0.75"/><rect x="48.4" y="13" width="3.8" height="1" fill="#000" opacity="0.75"/><rect x="52.6" y="13" width="5.3" height="1" fill="#000" opacity="0.75"/><rect x="58.3" y="13" width="2.3" height="1" fill="#000" opacity="0.75"/><rect x="61.0" y="13" width="4.6" height="1" fill="#000" opacity="0.75"/><rect x="78.6" y="13" width="4.6" height="1" fill="#000" opacity="0.75"/><rect x="83.6" y="13" width="3.0" height="1" fill="#000" opacity="0.75"/><rect x="87.1" y="13" width="1.5" height="1" fill="#000" opacity="0.75"/><rect x="89.0" y="13" width="3.8" height="1" fill="#000" opacity="0.75"/><rect x="109.1" y="13" width="1.5" height="1" fill="#000" opacity="0.75"/><rect x="119.3" y="13" width="4.6" height="1" fill="#000" opacity="0.75"/><rect x="127.8" y="13" width="5.3" height="1" fill="#000" opacity="0.75"/><rect x="3.0" y="14.15" width="130.5" height="2.48" fill="#C9DCF1"/><rect x="5.7" y="15" width="2.3" height="1" fill="#000" opacity="0.75"/><rect x="8.7" y="15" width="2.3" height="1" fill="#000" opacity="0.75"/><rect x="11.4" y="15" width="5.3" height="1" fill="#000" opacity="0.75"/><rect x="17.1" y="15" width="4.6" height="1" fill="#000" opacity="0.75"/><rect x="109.8" y="15" width="0.8" height="1" fill="#000" opacity="0.75"/><rect x="5.7" y="18" width="2.3" height="1" fill="#000" opacity="0.75"/><rect x="8.7" y="18" width="1.5" height="1" fill="#000" opacity="0.75"/><rect x="10.6" y="18" width="2.3" height="1" fill="#000" opacity="0.75"/><rect x="13.3" y="18" width="3.8" height="1" fill="#000" opacity="0.75"/><rect x="17.6" y="18" width="0.8" height="1" fill="#000" opacity="0.75"/><rect x="18.7" y="18" width="4.6" height="1" fill="#000" opacity="0.75"/><rect x="39.9" y="18" width="2.3" height="1" fill="#000" opacity="0.75"/><rect x="42.6" y="18" width="3.0" height="1" fill="#000" opacity="0.75"/><rect x="78.6" y="18" width="3.8" height="1" fill="#000" opacity="0.75"/><rect x="109.1" y="18" width="1.5" height="1" fill="#000" opacity="0.75"/><rect x="119.3" y="18" width="4.6" height="1" fill="#000" opacity="0.75"/><rect x="127.8" y="18" width="5.3" height="1" fill="#000" opacity="0.75"/><rect x="5.7" y="20" width="2.3" height="1" fill="#000" opacity="0.75"/><rect x="8.7" y="20" width="4.6" height="1" fill="#000" opacity="0.75"/><rect x="13.7" y="20" width="3.8" height="1" fill="#000" opacity="0.75"/><rect x="17.9" y="20" width="1.5" height="1" fill="#000" opacity="0.75"/><rect x="39.9" y="20" width="5.3" height="1" fill="#000" opacity="0.75"/><rect x="45.7" y="20" width="3.8" height="1" fill="#000" opacity="0.75"/><rect x="49.9" y="20" width="2.3" height="1" fill="#000" opacity="0.75"/><rect x="52.6" y="20" width="0.8" height="1" fill="#000" opacity="0.75"/><rect x="53.8" y="20" width="3.0" height="1" fill="#000" opacity="0.75"/><rect x="57.2" y="20" width="2.3" height="1" fill="#000" opacity="0.75"/><rect x="59.9" y="20" width="3.8" height="1" fill="#000" opacity="0.75"/><rect x="78.6" y="20" width="5.3" height="1" fill="#000" opacity="0.75"/><rect x="109.1" y="20" width="1.5" height="1" fill="#000" opacity="0.75"/><rect x="119.3" y="20" width="4.6" height="1" fill="#000" opacity="0.75"/><rect x="127.8" y="20" width="5.3" height="1" fill="#000" opacity="0.75"/><rect x="5.7" y="23" width="2.3" height="1" fill="#000" opacity="0.75"/><rect x="8.7" y="23" width="3.0" height="1" fill="#000" opacity="0.75"/><rect x="12.2" y="23" width="2.3" height="1" fill="#000" opacity="0.75"/><rect x="39.9" y="23" width="5.3" height="1" fill="#000" opacity="0.75"/><rect x="78.6" y="23" width="1.5" height="1" fill="#000" opacity="0.75"/><rect x="80.6" y="23" width="0.8" height="1" fill="#000" opacity="0.75"/><rect x="81.7" y="23" width="3.8" height="1" fill="#000" opacity="0.75"/><rect x="86.0" y="23" width="1.5" height="1" fill="#000" opacity="0.75"/><rect x="109.1" y="23" width="1.5" height="1" fill="#000" opacity="0.75"/><rect x="119.3" y="23" width="4.6" height="1" fill="#000" opacity="0.75"/><rect x="127.8" y="23" width="5.3" height="1" fill="#000" opacity="0.75"/><rect x="5.7" y="25" width="2.3" height="1" fill="#000" opacity="0.75"/><rect x="8.7" y="25" width="2.3" height="1" fill="#000" opacity="0.75"/><rect x="11.4" y="25" width="0.8" height="1" fill="#000" opacity="0.75"/><rect x="12.6" y="25" width="2.3" height="1" fill="#000" opacity="0.75"/><rect x="15.3" y="25" width="0.8" height="1" fill="#000" opacity="0.75"/><rect x="16.4" y="25" width="5.3" height="1" fill="#000" opacity="0.75"/><rect x="39.9" y="25" width="1.5" height="1" fill="#000" opacity="0.75"/><rect x="41.9" y="25" width="4.6" height="1" fill="#000" opacity="0.75"/><rect x="46.8" y="25" width="3.8" height="1" fill="#000" opacity="0.75"/><rect x="51.1" y="25" width="5.3" height="1" fill="#000" opacity="0.75"/><rect x="78.6" y="25" width="3.8" height="1" fill="#000" opacity="0.75"/><rect x="82.8" y="25" width="3.8" height="1" fill="#000" opacity="0.75"/><rect x="87.1" y="25" width="1.5" height="1" fill="#000" opacity="0.75"/><rect x="89.0" y="25" width="2.3" height="1" fill="#000" opacity="0.75"/><rect x="109.1" y="25" width="1.5" height="1" fill="#000" opacity="0.75"/><rect x="119.3" y="25" width="4.6" height="1" fill="#000" opacity="0.75"/><rect x="127.8" y="25" width="5.3" height="1" fill="#000" opacity="0.75"/><rect x="5.7" y="28" width="2.3" height="1" fill="#000" opacity="0.75"/><rect x="8.7" y="28" width="2.3" height="1" fill="#000" opacity="0.75"/><rect x="11.4" y="28" width="1.5" height="1" fill="#000" opacity="0.75"/><rect x="13.3" y="28" width="2.3" height="1" fill="#000" opacity="0.75"/><rect x="16.0" y="28" width="0.8" height="1" fill="#000" opacity="0.75"/><rect x="39.9" y="28" width="2.3" height="1" fill="#000" opacity="0.75"/><rect x="42.6" y="28" width="0.8" height="1" fill="#000" opacity="0.75"/><rect x="43.8" y="28" width="0.8" height="1" fill="#000" opacity="0.75"/><rect x="45.0" y="28" width="5.3" height="1" fill="#000" opacity="0.75"/><rect x="50.7" y="28" width="2.3" height="1" fill="#000" opacity="0.75"/><rect x="53.4" y="28" width="0.8" height="1" fill="#000" opacity="0.75"/><rect x="78.6" y="28" width="4.6" height="1" fill="#000" opacity="0.75"/><rect x="83.6" y="28" width="2.3" height="1" fill="#000" opacity="0.75"/><rect x="86.3" y="28" width="3.0" height="1" fill="#000" opacity="0.75"/><rect x="109.1" y="28" width="1.5" height="1" fill="#000" opacity="0.75"/><rect x="119.3" y="28" width="4.6" height="1" fill="#000" opacity="0.75"/><rect x="127.8" y="28" width="5.3" height="1" fill="#000" opacity="0.75"/><rect x="5.7" y="30" width="2.3" height="1" fill="#000" opacity="0.75"/><rect x="8.7" y="30" width="1.5" height="1" fill="#000" opacity="0.75"/><rect x="10.6" y="30" width="2.3" height="1" fill="#000" opacity="0.75"/><rect x="13.3" y="30" width="2.3" height="1" fill="#000" opacity="0.75"/><rect x="16.0" y="30" width="0.8" height="1" fill="#000" opacity="0.75"/><rect x="17.2" y="30" width="4.6" height="1" fill="#000" opacity="0.75"/><rect x="39.9" y="30" width="0.8" height="1" fill="#000" opacity="0.75"/><rect x="41.1" y="30" width="3.8" height="1" fill="#000" opacity="0.75"/><rect x="45.3" y="30" width="3.8" height="1" fill="#000" opacity="0.75"/><rect x="49.5" y="30" width="3.8" height="1" fill="#000" opacity="0.75"/><rect x="53.8" y="30" width="4.6" height="1" fill="#000" opacity="0.75"/><rect x="58.7" y="30" width="1.5" height="1" fill="#000" opacity="0.75"/><rect x="60.7" y="30" width="3.0" height="1" fill="#000" opacity="0.75"/><rect x="64.1" y="30" width="3.0" height="1" fill="#000" opacity="0.75"/><rect x="78.6" y="30" width="5.3" height="1" fill="#000" opacity="0.75"/><rect x="84.4" y="30" width="3.0" height="1" fill="#000" opacity="0.75"/><rect x="87.8" y="30" width="1.5" height="1" fill="#000" opacity="0.75"/><rect x="89.8" y="30" width="1.5" height="1" fill="#000" opacity="0.75"/><rect x="109.1" y="30" width="1.5" height="1" fill="#000" opacity="0.75"/><rect x="119.3" y="30" width="4.6" height="1" fill="#000" opacity="0.75"/><rect x="127.8" y="30" width="5.3" height="1" fill="#000" opacity="0.75"/><rect x="5.7" y="32" width="2.3" height="1" fill="#000" opacity="0.75"/><rect x="8.7" y="32" width="4.6" height="1" fill="#000" opacity="0.75"/><rect x="13.7" y="32" width="0.8" height="1" fill="#000" opacity="0.75"/><rect x="14.9" y="32" width="1.5" height="1" fill="#000" opacity="0.75"/><rect x="39.9" y="32" width="5.3" height="1" fill="#000" opacity="0.75"/><rect x="78.6" y="32" width="2.3" height="1" fill="#000" opacity="0.75"/><rect x="81.3" y="32" width="5.3" height="1" fill="#000" opacity="0.75"/><rect x="87.1" y="32" width="2.3" height="1" fill="#000" opacity="0.75"/><rect x="89.8" y="32" width="5.3" height="1" fill="#000" opacity="0.75"/><rect x="109.1" y="32" width="1.5" height="1" fill="#000" opacity="0.75"/><rect x="119.3" y="32" width="4.6" height="1" fill="#000" opacity="0.75"/><rect x="127.8" y="32" width="5.3" height="1" fill="#000" opacity="0.75"/><rect x="5.7" y="35" width="2.3" height="1" fill="#000" opacity="0.75"/><rect x="8.7" y="35" width="3.0" height="1" fill="#000" opacity="0.75"/><rect x="12.2" y="35" width="0.8" height="1" fill="#000" opacity="0.75"/><rect x="13.3" y="35" width="4.6" height="1" fill="#000" opacity="0.75"/><rect x="39.9" y="35" width="5.3" height="1" fill="#000" opacity="0.75"/><rect x="45.7" y="35" width="2.3" height="1" fill="#000" opacity="0.75"/><rect x="48.4" y="35" width="4.6" height="1" fill="#000" opacity="0.75"/><rect x="53.3" y="35" width="3.0" height="1" fill="#000" opacity="0.75"/><rect x="78.6" y="35" width="0.8" height="1" fill="#000" opacity="0.75"/><rect x="79.8" y="35" width="3.8" height="1" fill="#000" opacity="0.75"/><rect x="84.0" y="35" width="0.8" height="1" fill="#000" opacity="0.75"/><rect x="85.2" y="35" width="3.8" height="1" fill="#000" opacity="0.75"/><rect x="109.1" y="35" width="1.5" height="1" fill="#000" opacity="0.75"/><rect x="119.3" y="35" width="4.6" height="1" fill="#000" opacity="0.75"/><rect x="127.8" y="35" width="5.3" height="1" fill="#000" opacity="0.75"/><rect x="5.7" y="37" width="2.3" height="1" fill="#000" opacity="0.75"/><rect x="8.7" y="37" width="1.5" height="1" fill="#000" opacity="0.75"/><rect x="10.6" y="37" width="3.8" height="1" fill="#000" opacity="0.75"/><rect x="14.9" y="37" width="2.3" height="1" fill="#000" opacity="0.75"/><rect x="39.9" y="37" width="5.3" height="1" fill="#000" opacity="0.75"/><rect x="45.7" y="37" width="2.3" height="1" fill="#000" opacity="0.75"/><rect x="48.4" y="37" width="0.8" height="1" fill="#000" opacity="0.75"/><rect x="49.5" y="37" width="4.6" height="1" fill="#000" opacity="0.75"/><rect x="78.6" y="37" width="3.8" height="1" fill="#000" opacity="0.75"/><rect x="82.8" y="37" width="3.0" height="1" fill="#000" opacity="0.75"/><rect x="86.3" y="37" width="5.3" height="1" fill="#000" opacity="0.75"/><rect x="109.1" y="37" width="1.5" height="1" fill="#000" opacity="0.75"/><rect x="119.3" y="37" width="4.6" height="1" fill="#000" opacity="0.75"/><rect x="127.8" y="37" width="5.3" height="1" fill="#000" opacity="0.75"/><rect x="5.7" y="40" width="2.3" height="1" fill="#000" opacity="0.75"/><rect x="8.7" y="40" width="3.0" height="1" fill="#000" opacity="0.75"/><rect x="12.2" y="40" width="3.8" height="1" fill="#000" opacity="0.75"/><rect x="16.4" y="40" width="4.6" height="1" fill="#000" opacity="0.75"/><rect x="39.9" y="40" width="0.8" height="1" fill="#000" opacity="0.75"/><rect x="41.1" y="40" width="3.0" height="1" fill="#000" opacity="0.75"/><rect x="44.6" y="40" width="5.3" height="1" fill="#000" opacity="0.75"/><rect x="50.3" y="40" width="1.5" height="1" fill="#000" opacity="0.75"/><rect x="52.2" y="40" width="1.5" height="1" fill="#000" opacity="0.75"/><rect x="54.2" y="40" width="3.0" height="1" fill="#000" opacity="0.75"/><rect x="57.6" y="40" width="2.3" height="1" fill="#000" opacity="0.75"/><rect x="60.3" y="40" width="5.3" height="1" fill="#000" opacity="0.75"/><rect x="78.6" y="40" width="2.3" height="1" fill="#000" opacity="0.75"/><rect x="81.3" y="40" width="3.8" height="1" fill="#000" opacity="0.75"/><rect x="109.1" y="40" width="1.5" height="1" fill="#000" opacity="0.75"/><rect x="119.3" y="40" width="4.6" height="1" fill="#000" opacity="0.75"/><rect x="127.8" y="40" width="5.3" height="1" fill="#000" opacity="0.75"/><rect x="3.0" y="41.40" width="130.5" height="2.48" fill="#C9DCF1"/><rect x="5.7" y="42" width="2.3" height="1" fill="#000" opacity="0.75"/><rect x="8.7" y="42" width="1.5" height="1" fill="#000" opacity="0.75"/><rect x="10.6" y="42" width="3.0" height="1" fill="#000" opacity="0.75"/><rect x="14.1" y="42" width="4.6" height="1" fill="#000" opacity="0.75"/><rect x="19.1" y="42" width="2.3" height="1" fill="#000" opacity="0.75"/><rect x="21.8" y="42" width="4.6" height="1" fill="#000" opacity="0.75"/><rect x="109.8" y="42" width="0.8" height="1" fill="#000" opacity="0.75"/><rect x="5.7" y="45" width="2.3" height="1" fill="#000" opacity="0.75"/><rect x="8.7" y="45" width="2.3" height="1" fill="#000" opacity="0.75"/><rect x="11.4" y="45" width="1.5" height="1" fill="#000" opacity="0.75"/><rect x="13.3" y="45" width="5.3" height="1" fill="#000" opacity="0.75"/><rect x="39.9" y="45" width="2.3" height="1" fill="#000" opacity="0.75"/><rect x="42.6" y="45" width="3.0" height="1" fill="#000" opacity="0.75"/><rect x="46.1" y="45" width="2.3" height="1" fill="#000" opacity="0.75"/><rect x="48.8" y="45" width="3.0" height="1" fill="#000" opacity="0.75"/><rect x="78.6" y="45" width="0.8" height="1" fill="#000" opacity="0.75"/><rect x="79.8" y="45" width="3.8" height="1" fill="#000" opacity="0.75"/><rect x="84.0" y="45" width="0.8" height="1" fill="#000" opacity="0.75"/><rect x="85.2" y="45" width="3.8" height="1" fill="#000" opacity="0.75"/><rect x="89.4" y="45" width="0.8" height="1" fill="#000" opacity="0.75"/><rect x="109.1" y="45" width="1.5" height="1" fill="#000" opacity="0.75"/><rect x="119.3" y="45" width="4.6" height="1" fill="#000" opacity="0.75"/><rect x="127.8" y="45" width="5.3" height="1" fill="#000" opacity="0.75"/><rect x="3.0" y="46.35" width="130.5" height="2.48" fill="#C9DCF1"/><rect x="5.7" y="47" width="2.3" height="1" fill="#000" opacity="0.75"/><rect x="8.7" y="47" width="3.8" height="1" fill="#000" opacity="0.75"/><rect x="12.9" y="47" width="3.8" height="1" fill="#000" opacity="0.75"/><rect x="17.1" y="47" width="3.8" height="1" fill="#000" opacity="0.75"/><rect x="109.8" y="47" width="0.8" height="1" fill="#000" opacity="0.75"/><rect x="5.7" y="50" width="2.3" height="1" fill="#000" opacity="0.75"/><rect x="8.7" y="50" width="3.8" height="1" fill="#000" opacity="0.75"/><rect x="12.9" y="50" width="3.8" height="1" fill="#000" opacity="0.75"/><rect x="39.9" y="50" width="3.0" height="1" fill="#000" opacity="0.75"/><rect x="43.4" y="50" width="0.8" height="1" fill="#000" opacity="0.75"/><rect x="44.6" y="50" width="2.3" height="1" fill="#000" opacity="0.75"/><rect x="47.3" y="50" width="2.3" height="1" fill="#000" opacity="0.75"/><rect x="49.9" y="50" width="1.5" height="1" fill="#000" opacity="0.75"/><rect x="51.9" y="50" width="0.8" height="1" fill="#000" opacity="0.75"/><rect x="53.1" y="50" width="5.3" height="1" fill="#000" opacity="0.75"/><rect x="58.8" y="50" width="3.0" height="1" fill="#000" opacity="0.75"/><rect x="62.3" y="50" width="2.3" height="1" fill="#000" opacity="0.75"/><rect x="78.6" y="50" width="1.5" height="1" fill="#000" opacity="0.75"/><rect x="80.6" y="50" width="0.8" height="1" fill="#000" opacity="0.75"/><rect x="81.7" y="50" width="2.3" height="1" fill="#000" opacity="0.75"/><rect x="84.4" y="50" width="0.8" height="1" fill="#000" opacity="0.75"/><rect x="109.1" y="50" width="1.5" height="1" fill="#000" opacity="0.75"/><rect x="119.3" y="50" width="4.6" height="1" fill="#000" opacity="0.75"/><rect x="127.8" y="50" width="5.3" height="1" fill="#000" opacity="0.75"/><rect x="5.7" y="52" width="2.3" height="1" fill="#000" opacity="0.75"/><rect x="8.7" y="52" width="0.8" height="1" fill="#000" opacity="0.75"/><rect x="9.9" y="52" width="0.8" height="1" fill="#000" opacity="0.75"/><rect x="11.1" y="52" width="0.8" height="1" fill="#000" opacity="0.75"/><rect x="12.2" y="52" width="3.0" height="1" fill="#000" opacity="0.75"/><rect x="15.7" y="52" width="4.6" height="1" fill="#000" opacity="0.75"/><rect x="20.7" y="52" width="2.3" height="1" fill="#000" opacity="0.75"/><rect x="39.9" y="52" width="5.3" height="1" fill="#000" opacity="0.75"/><rect x="45.7" y="52" width="0.8" height="1" fill="#000" opacity="0.75"/><rect x="46.8" y="52" width="5.3" height="1" fill="#000" opacity="0.75"/><rect x="109.1" y="52" width="1.5" height="1" fill="#000" opacity="0.75"/><rect x="119.3" y="52" width="4.6" height="1" fill="#000" opacity="0.75"/><rect x="127.8" y="52" width="5.3" height="1" fill="#000" opacity="0.75"/><rect x="5.7" y="55" width="2.3" height="1" fill="#000" opacity="0.75"/><rect x="8.7" y="55" width="1.5" height="1" fill="#000" opacity="0.75"/><rect x="10.6" y="55" width="5.3" height="1" fill="#000" opacity="0.75"/><rect x="16.4" y="55" width="4.6" height="1" fill="#000" opacity="0.75"/><rect x="21.4" y="55" width="0.8" height="1" fill="#000" opacity="0.75"/><rect x="39.9" y="55" width="5.3" height="1" fill="#000" opacity="0.75"/><rect x="45.7" y="55" width="0.8" height="1" fill="#000" opacity="0.75"/><rect x="46.8" y="55" width="3.0" height="1" fill="#000" opacity="0.75"/><rect x="50.3" y="55" width="0.8" height="1" fill="#000" opacity="0.75"/><rect x="51.5" y="55" width="4.6" height="1" fill="#000" opacity="0.75"/><rect x="56.5" y="55" width="3.8" height="1" fill="#000" opacity="0.75"/><rect x="78.6" y="55" width="1.5" height="1" fill="#000" opacity="0.75"/><rect x="109.1" y="55" width="1.5" height="1" fill="#000" opacity="0.75"/><rect x="119.3" y="55" width="4.6" height="1" fill="#000" opacity="0.75"/><rect x="127.8" y="55" width="5.3" height="1" fill="#000" opacity="0.75"/><rect x="5.7" y="57" width="2.3" height="1" fill="#000" opacity="0.75"/><rect x="8.7" y="57" width="2.3" height="1" fill="#000" opacity="0.75"/><rect x="11.4" y="57" width="2.3" height="1" fill="#000" opacity="0.75"/><rect x="14.1" y="57" width="2.3" height="1" fill="#000" opacity="0.75"/><rect x="39.9" y="57" width="3.8" height="1" fill="#000" opacity="0.75"/><rect x="44.1" y="57" width="5.3" height="1" fill="#000" opacity="0.75"/><rect x="49.9" y="57" width="3.0" height="1" fill="#000" opacity="0.75"/><rect x="53.3" y="57" width="3.0" height="1" fill="#000" opacity="0.75"/><rect x="56.8" y="57" width="0.8" height="1" fill="#000" opacity="0.75"/><rect x="58.0" y="57" width="3.8" height="1" fill="#000" opacity="0.75"/><rect x="62.2" y="57" width="5.3" height="1" fill="#000" opacity="0.75"/><rect x="78.6" y="57" width="0.8" height="1" fill="#000" opacity="0.75"/><rect x="79.8" y="57" width="5.3" height="1" fill="#000" opacity="0.75"/><rect x="109.1" y="57" width="1.5" height="1" fill="#000" opacity="0.75"/><rect x="119.3" y="57" width="4.6" height="1" fill="#000" opacity="0.75"/><rect x="127.8" y="57" width="5.3" height="1" fill="#000" opacity="0.75"/><rect x="5.7" y="60" width="2.3" height="1" fill="#000" opacity="0.75"/><rect x="8.7" y="60" width="0.8" height="1" fill="#000" opacity="0.75"/><rect x="9.9" y="60" width="4.6" height="1" fill="#000" opacity="0.75"/><rect x="14.9" y="60" width="4.6" height="1" fill="#000" opacity="0.75"/><rect x="19.8" y="60" width="5.3" height="1" fill="#000" opacity="0.75"/><rect x="39.9" y="60" width="2.3" height="1" fill="#000" opacity="0.75"/><rect x="42.6" y="60" width="2.3" height="1" fill="#000" opacity="0.75"/><rect x="45.3" y="60" width="0.8" height="1" fill="#000" opacity="0.75"/><rect x="46.5" y="60" width="2.3" height="1" fill="#000" opacity="0.75"/><rect x="49.2" y="60" width="1.5" height="1" fill="#000" opacity="0.75"/><rect x="51.1" y="60" width="3.8" height="1" fill="#000" opacity="0.75"/><rect x="78.6" y="60" width="3.0" height="1" fill="#000" opacity="0.75"/><rect x="82.1" y="60" width="5.3" height="1" fill="#000" opacity="0.75"/><rect x="109.1" y="60" width="1.5" height="1" fill="#000" opacity="0.75"/><rect x="119.3" y="60" width="4.6" height="1" fill="#000" opacity="0.75"/><rect x="127.8" y="60" width="5.3" height="1" fill="#000" opacity="0.75"/><rect x="5.7" y="62" width="2.3" height="1" fill="#000" opacity="0.75"/><rect x="8.7" y="62" width="2.3" height="1" fill="#000" opacity="0.75"/><rect x="11.4" y="62" width="1.5" height="1" fill="#000" opacity="0.75"/><rect x="13.3" y="62" width="0.8" height="1" fill="#000" opacity="0.75"/><rect x="39.9" y="62" width="2.3" height="1" fill="#000" opacity="0.75"/><rect x="42.6" y="62" width="4.6" height="1" fill="#000" opacity="0.75"/><rect x="47.6" y="62" width="1.5" height="1" fill="#000" opacity="0.75"/><rect x="49.5" y="62" width="3.0" height="1" fill="#000" opacity="0.75"/><rect x="53.0" y="62" width="2.3" height="1" fill="#000" opacity="0.75"/><rect x="55.7" y="62" width="1.5" height="1" fill="#000" opacity="0.75"/><rect x="57.6" y="62" width="1.5" height="1" fill="#000" opacity="0.75"/><rect x="59.6" y="62" width="3.8" height="1" fill="#000" opacity="0.75"/><rect x="78.6" y="62" width="1.5" height="1" fill="#000" opacity="0.75"/><rect x="80.6" y="62" width="5.3" height="1" fill="#000" opacity="0.75"/><rect x="86.3" y="62" width="2.3" height="1" fill="#000" opacity="0.75"/><rect x="89.0" y="62" width="0.8" height="1" fill="#000" opacity="0.75"/><rect x="90.2" y="62" width="3.0" height="1" fill="#000" opacity="0.75"/><rect x="109.1" y="62" width="1.5" height="1" fill="#000" opacity="0.75"/><rect x="119.3" y="62" width="4.6" height="1" fill="#000" opacity="0.75"/><rect x="127.8" y="62" width="5.3" height="1" fill="#000" opacity="0.75"/><rect x="5.7" y="65" width="2.3" height="1" fill="#000" opacity="0.75"/><rect x="8.7" y="65" width="5.3" height="1" fill="#000" opacity="0.75"/><rect x="14.4" y="65" width="3.8" height="1" fill="#000" opacity="0.75"/><rect x="39.9" y="65" width="4.6" height="1" fill="#000" opacity="0.75"/><rect x="44.9" y="65" width="3.8" height="1" fill="#000" opacity="0.75"/><rect x="49.1" y="65" width="1.5" height="1" fill="#000" opacity="0.75"/><rect x="78.6" y="65" width="3.8" height="1" fill="#000" opacity="0.75"/><rect x="109.1" y="65" width="1.5" height="1" fill="#000" opacity="0.75"/><rect x="119.3" y="65" width="4.6" height="1" fill="#000" opacity="0.75"/><rect x="127.8" y="65" width="5.3" height="1" fill="#000" opacity="0.75"/><rect x="5.7" y="67" width="2.3" height="1" fill="#000" opacity="0.75"/><rect x="8.7" y="67" width="3.0" height="1" fill="#000" opacity="0.75"/><rect x="12.2" y="67" width="5.3" height="1" fill="#000" opacity="0.75"/><rect x="39.9" y="67" width="3.0" height="1" fill="#000" opacity="0.75"/><rect x="43.4" y="67" width="0.8" height="1" fill="#000" opacity="0.75"/><rect x="44.6" y="67" width="3.8" height="1" fill="#000" opacity="0.75"/><rect x="48.8" y="67" width="1.5" height="1" fill="#000" opacity="0.75"/><rect x="50.7" y="67" width="1.5" height="1" fill="#000" opacity="0.75"/><rect x="52.6" y="67" width="4.6" height="1" fill="#000" opacity="0.75"/><rect x="78.6" y="67" width="5.3" height="1" fill="#000" opacity="0.75"/><rect x="109.1" y="67" width="1.5" height="1" fill="#000" opacity="0.75"/><rect x="119.3" y="67" width="4.6" height="1" fill="#000" opacity="0.75"/><rect x="127.8" y="67" width="5.3" height="1" fill="#000" opacity="0.75"/><rect x="5.7" y="70" width="2.3" height="1" fill="#000" opacity="0.75"/><rect x="8.7" y="70" width="2.3" height="1" fill="#000" opacity="0.75"/><rect x="11.4" y="70" width="3.8" height="1" fill="#000" opacity="0.75"/><rect x="15.6" y="70" width="5.3" height="1" fill="#000" opacity="0.75"/><rect x="39.9" y="70" width="5.3" height="1" fill="#000" opacity="0.75"/><rect x="45.7" y="70" width="3.8" height="1" fill="#000" opacity="0.75"/><rect x="49.9" y="70" width="5.3" height="1" fill="#000" opacity="0.75"/><rect x="55.6" y="70" width="1.5" height="1" fill="#000" opacity="0.75"/><rect x="57.6" y="70" width="2.3" height="1" fill="#000" opacity="0.75"/><rect x="60.3" y="70" width="1.5" height="1" fill="#000" opacity="0.75"/><rect x="62.2" y="70" width="3.0" height="1" fill="#000" opacity="0.75"/><rect x="78.6" y="70" width="3.8" height="1" fill="#000" opacity="0.75"/><rect x="82.8" y="70" width="1.5" height="1" fill="#000" opacity="0.75"/><rect x="109.1" y="70" width="1.5" height="1" fill="#000" opacity="0.75"/><rect x="119.3" y="70" width="4.6" height="1" fill="#000" opacity="0.75"/><rect x="127.8" y="70" width="5.3" height="1" fill="#000" opacity="0.75"/><rect x="5.7" y="72" width="2.3" height="1" fill="#000" opacity="0.75"/><rect x="8.7" y="72" width="0.8" height="1" fill="#000" opacity="0.75"/><rect x="9.9" y="72" width="2.3" height="1" fill="#000" opacity="0.75"/><rect x="12.6" y="72" width="3.0" height="1" fill="#000" opacity="0.75"/><rect x="16.0" y="72" width="0.8" height="1" fill="#000" opacity="0.75"/><rect x="17.2" y="72" width="3.0" height="1" fill="#000" opacity="0.75"/><rect x="39.9" y="72" width="3.8" height="1" fill="#000" opacity="0.75"/><rect x="44.1" y="72" width="3.0" height="1" fill="#000" opacity="0.75"/><rect x="78.6" y="72" width="1.5" height="1" fill="#000" opacity="0.75"/><rect x="80.6" y="72" width="0.8" height="1" fill="#000" opacity="0.75"/><rect x="81.7" y="72" width="2.3" height="1" fill="#000" opacity="0.75"/><rect x="109.1" y="72" width="1.5" height="1" fill="#000" opacity="0.75"/><rect x="119.3" y="72" width="4.6" height="1" fill="#000" opacity="0.75"/><rect x="127.8" y="72" width="5.3" height="1" fill="#000" opacity="0.75"/><rect x="3.0" y="73.59" width="130.5" height="2.48" fill="#C9DCF1"/><rect x="5.7" y="75" width="2.3" height="1" fill="#000" opacity="0.75"/><rect x="8.7" y="75" width="3.8" height="1" fill="#000" opacity="0.75"/><rect x="12.9" y="75" width="3.0" height="1" fill="#000" opacity="0.75"/><rect x="16.4" y="75" width="2.3" height="1" fill="#000" opacity="0.75"/><rect x="19.1" y="75" width="2.3" height="1" fill="#000" opacity="0.75"/><rect x="109.8" y="75" width="0.8" height="1" fill="#000" opacity="0.75"/><rect x="5.7" y="77" width="2.3" height="1" fill="#000" opacity="0.75"/><rect x="8.7" y="77" width="3.0" height="1" fill="#000" opacity="0.75"/><rect x="12.2" y="77" width="5.3" height="1" fill="#000" opacity="0.75"/><rect x="39.9" y="77" width="3.8" height="1" fill="#000" opacity="0.75"/><rect x="44.1" y="77" width="3.8" height="1" fill="#000" opacity="0.75"/><rect x="48.4" y="77" width="4.6" height="1" fill="#000" opacity="0.75"/><rect x="53.3" y="77" width="1.5" height="1" fill="#000" opacity="0.75"/><rect x="55.3" y="77" width="3.0" height="1" fill="#000" opacity="0.75"/><rect x="78.6" y="77" width="5.3" height="1" fill="#000" opacity="0.75"/><rect x="109.1" y="77" width="1.5" height="1" fill="#000" opacity="0.75"/><rect x="119.3" y="77" width="4.6" height="1" fill="#000" opacity="0.75"/><rect x="127.8" y="77" width="5.3" height="1" fill="#000" opacity="0.75"/><rect x="5.7" y="80" width="2.3" height="1" fill="#000" opacity="0.75"/><rect x="8.7" y="80" width="4.6" height="1" fill="#000" opacity="0.75"/><rect x="13.7" y="80" width="5.3" height="1" fill="#000" opacity="0.75"/><rect x="19.4" y="80" width="5.3" height="1" fill="#000" opacity="0.75"/><rect x="39.9" y="80" width="1.5" height="1" fill="#000" opacity="0.75"/><rect x="41.9" y="80" width="1.5" height="1" fill="#000" opacity="0.75"/><rect x="43.8" y="80" width="1.5" height="1" fill="#000" opacity="0.75"/><rect x="45.7" y="80" width="3.8" height="1" fill="#000" opacity="0.75"/><rect x="49.9" y="80" width="5.3" height="1" fill="#000" opacity="0.75"/><rect x="78.6" y="80" width="5.3" height="1" fill="#000" opacity="0.75"/><rect x="84.4" y="80" width="4.6" height="1" fill="#000" opacity="0.75"/><rect x="109.1" y="80" width="1.5" height="1" fill="#000" opacity="0.75"/><rect x="119.3" y="80" width="4.6" height="1" fill="#000" opacity="0.75"/><rect x="127.8" y="80" width="5.3" height="1" fill="#000" opacity="0.75"/><rect x="5.7" y="82" width="2.3" height="1" fill="#000" opacity="0.75"/><rect x="8.7" y="82" width="0.8" height="1" fill="#000" opacity="0.75"/><rect x="9.9" y="82" width="2.3" height="1" fill="#000" opacity="0.75"/><rect x="12.6" y="82" width="3.0" height="1" fill="#000" opacity="0.75"/><rect x="16.0" y="82" width="4.6" height="1" fill="#000" opacity="0.75"/><rect x="39.9" y="82" width="2.3" height="1" fill="#000" opacity="0.75"/><rect x="42.6" y="82" width="0.8" height="1" fill="#000" opacity="0.75"/><rect x="43.8" y="82" width="0.8" height="1" fill="#000" opacity="0.75"/><rect x="45.0" y="82" width="5.3" height="1" fill="#000" opacity="0.75"/><rect x="50.7" y="82" width="3.8" height="1" fill="#000" opacity="0.75"/><rect x="78.6" y="82" width="0.8" height="1" fill="#000" opacity="0.75"/><rect x="79.8" y="82" width="2.3" height="1" fill="#000" opacity="0.75"/><rect x="82.5" y="82" width="4.6" height="1" fill="#000" opacity="0.75"/><rect x="87.5" y="82" width="4.6" height="1" fill="#000" opacity="0.75"/><rect x="109.1" y="82" width="1.5" height="1" fill="#000" opacity="0.75"/><rect x="119.3" y="82" width="4.6" height="1" fill="#000" opacity="0.75"/><rect x="127.8" y="82" width="5.3" height="1" fill="#000" opacity="0.75"/><rect x="5.7" y="85" width="2.3" height="1" fill="#000" opacity="0.75"/><rect x="8.7" y="85" width="3.8" height="1" fill="#000" opacity="0.75"/><rect x="12.9" y="85" width="2.3" height="1" fill="#000" opacity="0.75"/><rect x="15.6" y="85" width="4.6" height="1" fill="#000" opacity="0.75"/><rect x="39.9" y="85" width="3.0" height="1" fill="#000" opacity="0.75"/><rect x="43.4" y="85" width="5.3" height="1" fill="#000" opacity="0.75"/><rect x="49.1" y="85" width="1.5" height="1" fill="#000" opacity="0.75"/><rect x="51.1" y="85" width="5.3" height="1" fill="#000" opacity="0.75"/><rect x="78.6" y="85" width="1.5" height="1" fill="#000" opacity="0.75"/><rect x="80.6" y="85" width="1.5" height="1" fill="#000" opacity="0.75"/><rect x="82.5" y="85" width="1.5" height="1" fill="#000" opacity="0.75"/><rect x="84.4" y="85" width="5.3" height="1" fill="#000" opacity="0.75"/><rect x="109.1" y="85" width="1.5" height="1" fill="#000" opacity="0.75"/><rect x="119.3" y="85" width="4.6" height="1" fill="#000" opacity="0.75"/><rect x="127.8" y="85" width="5.3" height="1" fill="#000" opacity="0.75"/><rect x="5.7" y="87" width="2.3" height="1" fill="#000" opacity="0.75"/><rect x="8.7" y="87" width="1.5" height="1" fill="#000" opacity="0.75"/><rect x="10.6" y="87" width="1.5" height="1" fill="#000" opacity="0.75"/><rect x="12.6" y="87" width="5.3" height="1" fill="#000" opacity="0.75"/><rect x="18.3" y="87" width="4.6" height="1" fill="#000" opacity="0.75"/><rect x="39.9" y="87" width="0.8" height="1" fill="#000" opacity="0.75"/><rect x="41.1" y="87" width="3.0" height="1" fill="#000" opacity="0.75"/><rect x="44.6" y="87" width="4.6" height="1" fill="#000" opacity="0.75"/><rect x="49.5" y="87" width="1.5" height="1" fill="#000" opacity="0.75"/><rect x="51.5" y="87" width="2.3" height="1" fill="#000" opacity="0.75"/><rect x="54.2" y="87" width="4.6" height="1" fill="#000" opacity="0.75"/><rect x="59.1" y="87" width="3.8" height="1" fill="#000" opacity="0.75"/><rect x="78.6" y="87" width="3.8" height="1" fill="#000" opacity="0.75"/><rect x="109.1" y="87" width="1.5" height="1" fill="#000" opacity="0.75"/><rect x="119.3" y="87" width="4.6" height="1" fill="#000" opacity="0.75"/><rect x="127.8" y="87" width="5.3" height="1" fill="#000" opacity="0.75"/><rect x="5.7" y="89" width="2.3" height="1" fill="#000" opacity="0.75"/><rect x="8.7" y="89" width="5.3" height="1" fill="#000" opacity="0.75"/><rect x="14.4" y="89" width="4.6" height="1" fill="#000" opacity="0.75"/><rect x="39.9" y="89" width="1.5" height="1" fill="#000" opacity="0.75"/><rect x="41.9" y="89" width="1.5" height="1" fill="#000" opacity="0.75"/><rect x="43.8" y="89" width="3.0" height="1" fill="#000" opacity="0.75"/><rect x="78.6" y="89" width="1.5" height="1" fill="#000" opacity="0.75"/><rect x="80.6" y="89" width="4.6" height="1" fill="#000" opacity="0.75"/><rect x="85.5" y="89" width="3.0" height="1" fill="#000" opacity="0.75"/><rect x="109.1" y="89" width="1.5" height="1" fill="#000" opacity="0.75"/><rect x="119.3" y="89" width="4.6" height="1" fill="#000" opacity="0.75"/><rect x="127.8" y="89" width="5.3" height="1" fill="#000" opacity="0.75"/><rect x="5.7" y="92" width="2.3" height="1" fill="#000" opacity="0.75"/><rect x="8.7" y="92" width="5.3" height="1" fill="#000" opacity="0.75"/><rect x="14.4" y="92" width="5.3" height="1" fill="#000" opacity="0.75"/><rect x="39.9" y="92" width="2.3" height="1" fill="#000" opacity="0.75"/><rect x="42.6" y="92" width="3.0" height="1" fill="#000" opacity="0.75"/><rect x="46.1" y="92" width="1.5" height="1" fill="#000" opacity="0.75"/><rect x="48.0" y="92" width="5.3" height="1" fill="#000" opacity="0.75"/><rect x="78.6" y="92" width="3.0" height="1" fill="#000" opacity="0.75"/><rect x="109.1" y="92" width="1.5" height="1" fill="#000" opacity="0.75"/><rect x="119.3" y="92" width="4.6" height="1" fill="#000" opacity="0.75"/><rect x="127.8" y="92" width="5.3" height="1" fill="#000" opacity="0.75"/><rect x="130.0" y="95.0" width="1" height="1" fill="#000"/></svg></div><div class="tb" style="left:135px;top:493px;font-size:12px;color:#222">2</div><div class="a" style="left:70px;top:530px;width:136px;height:105px;background:#fff;overflow:hidden;box-shadow:0 1px 0 #858585,1px 1px 0 #a0a0a0,1px 2px 2px rgba(0,0,0,0.25)"><svg width="137" height="105" style="position:absolute;left:0;top:0"><rect x="0" y="0" width="137" height="105" fill="#fff"/><rect x="3.6" y="4.4" width="6" height="1" fill="#000"/><rect x="3.0" y="9.20" width="130.5" height="2.48" fill="#C9DCF1"/><rect x="5.7" y="10" width="2.3" height="1" fill="#000" opacity="0.75"/><rect x="8.7" y="10" width="4.6" height="1" fill="#000" opacity="0.75"/><rect x="13.7" y="10" width="2.3" height="1" fill="#000" opacity="0.75"/><rect x="16.4" y="10" width="2.3" height="1" fill="#000" opacity="0.75"/><rect x="19.1" y="10" width="2.3" height="1" fill="#000" opacity="0.75"/><rect x="21.8" y="10" width="2.3" height="1" fill="#000" opacity="0.75"/><rect x="109.8" y="10" width="0.8" height="1" fill="#000" opacity="0.75"/><rect x="3.0" y="11.67" width="130.5" height="2.48" fill="#C9DCF1"/><rect x="5.7" y="13" width="2.3" height="1" fill="#000" opacity="0.75"/><rect x="8.7" y="13" width="5.3" height="1" fill="#000" opacity="0.75"/><rect x="14.4" y="13" width="2.3" height="1" fill="#000" opacity="0.75"/><rect x="109.8" y="13" width="0.8" height="1" fill="#000" opacity="0.75"/><rect x="5.7" y="15" width="2.3" height="1" fill="#000" opacity="0.75"/><rect x="8.7" y="15" width="4.6" height="1" fill="#000" opacity="0.75"/><rect x="13.7" y="15" width="5.3" height="1" fill="#000" opacity="0.75"/><rect x="39.9" y="15" width="3.0" height="1" fill="#000" opacity="0.75"/><rect x="78.6" y="15" width="5.3" height="1" fill="#000" opacity="0.75"/><rect x="84.4" y="15" width="4.6" height="1" fill="#000" opacity="0.75"/><rect x="109.1" y="15" width="1.5" height="1" fill="#000" opacity="0.75"/><rect x="119.3" y="15" width="4.6" height="1" fill="#000" opacity="0.75"/><rect x="127.8" y="15" width="5.3" height="1" fill="#000" opacity="0.75"/><rect x="5.7" y="18" width="2.3" height="1" fill="#000" opacity="0.75"/><rect x="8.7" y="18" width="0.8" height="1" fill="#000" opacity="0.75"/><rect x="9.9" y="18" width="3.8" height="1" fill="#000" opacity="0.75"/><rect x="14.1" y="18" width="1.5" height="1" fill="#000" opacity="0.75"/><rect x="39.9" y="18" width="4.6" height="1" fill="#000" opacity="0.75"/><rect x="44.9" y="18" width="5.3" height="1" fill="#000" opacity="0.75"/><rect x="50.6" y="18" width="3.0" height="1" fill="#000" opacity="0.75"/><rect x="54.1" y="18" width="4.6" height="1" fill="#000" opacity="0.75"/><rect x="59.1" y="18" width="2.3" height="1" fill="#000" opacity="0.75"/><rect x="61.8" y="18" width="3.0" height="1" fill="#000" opacity="0.75"/><rect x="78.6" y="18" width="4.6" height="1" fill="#000" opacity="0.75"/><rect x="109.1" y="18" width="1.5" height="1" fill="#000" opacity="0.75"/><rect x="119.3" y="18" width="4.6" height="1" fill="#000" opacity="0.75"/><rect x="127.8" y="18" width="5.3" height="1" fill="#000" opacity="0.75"/><rect x="5.7" y="20" width="2.3" height="1" fill="#000" opacity="0.75"/><rect x="8.7" y="20" width="1.5" height="1" fill="#000" opacity="0.75"/><rect x="10.6" y="20" width="4.6" height="1" fill="#000" opacity="0.75"/><rect x="15.6" y="20" width="2.3" height="1" fill="#000" opacity="0.75"/><rect x="18.3" y="20" width="2.3" height="1" fill="#000" opacity="0.75"/><rect x="39.9" y="20" width="3.8" height="1" fill="#000" opacity="0.75"/><rect x="44.1" y="20" width="4.6" height="1" fill="#000" opacity="0.75"/><rect x="78.6" y="20" width="4.6" height="1" fill="#000" opacity="0.75"/><rect x="83.6" y="20" width="0.8" height="1" fill="#000" opacity="0.75"/><rect x="84.8" y="20" width="1.5" height="1" fill="#000" opacity="0.75"/><rect x="109.1" y="20" width="1.5" height="1" fill="#000" opacity="0.75"/><rect x="119.3" y="20" width="4.6" height="1" fill="#000" opacity="0.75"/><rect x="127.8" y="20" width="5.3" height="1" fill="#000" opacity="0.75"/><rect x="5.7" y="23" width="2.3" height="1" fill="#000" opacity="0.75"/><rect x="8.7" y="23" width="0.8" height="1" fill="#000" opacity="0.75"/><rect x="9.9" y="23" width="2.3" height="1" fill="#000" opacity="0.75"/><rect x="12.6" y="23" width="0.8" height="1" fill="#000" opacity="0.75"/><rect x="13.8" y="23" width="1.5" height="1" fill="#000" opacity="0.75"/><rect x="15.7" y="23" width="4.6" height="1" fill="#000" opacity="0.75"/><rect x="20.7" y="23" width="3.8" height="1" fill="#000" opacity="0.75"/><rect x="39.9" y="23" width="5.3" height="1" fill="#000" opacity="0.75"/><rect x="45.7" y="23" width="5.3" height="1" fill="#000" opacity="0.75"/><rect x="78.6" y="23" width="5.3" height="1" fill="#000" opacity="0.75"/><rect x="84.4" y="23" width="2.3" height="1" fill="#000" opacity="0.75"/><rect x="87.1" y="23" width="2.3" height="1" fill="#000" opacity="0.75"/><rect x="109.1" y="23" width="1.5" height="1" fill="#000" opacity="0.75"/><rect x="119.3" y="23" width="4.6" height="1" fill="#000" opacity="0.75"/><rect x="127.8" y="23" width="5.3" height="1" fill="#000" opacity="0.75"/><rect x="5.7" y="25" width="2.3" height="1" fill="#000" opacity="0.75"/><rect x="8.7" y="25" width="1.5" height="1" fill="#000" opacity="0.75"/><rect x="10.6" y="25" width="0.8" height="1" fill="#000" opacity="0.75"/><rect x="11.8" y="25" width="3.8" height="1" fill="#000" opacity="0.75"/><rect x="16.0" y="25" width="3.0" height="1" fill="#000" opacity="0.75"/><rect x="39.9" y="25" width="4.6" height="1" fill="#000" opacity="0.75"/><rect x="44.9" y="25" width="1.5" height="1" fill="#000" opacity="0.75"/><rect x="46.8" y="25" width="2.3" height="1" fill="#000" opacity="0.75"/><rect x="78.6" y="25" width="1.5" height="1" fill="#000" opacity="0.75"/><rect x="80.6" y="25" width="4.6" height="1" fill="#000" opacity="0.75"/><rect x="85.5" y="25" width="3.8" height="1" fill="#000" opacity="0.75"/><rect x="109.1" y="25" width="1.5" height="1" fill="#000" opacity="0.75"/><rect x="119.3" y="25" width="4.6" height="1" fill="#000" opacity="0.75"/><rect x="127.8" y="25" width="5.3" height="1" fill="#000" opacity="0.75"/><rect x="5.7" y="28" width="2.3" height="1" fill="#000" opacity="0.75"/><rect x="8.7" y="28" width="3.0" height="1" fill="#000" opacity="0.75"/><rect x="12.2" y="28" width="3.8" height="1" fill="#000" opacity="0.75"/><rect x="39.9" y="28" width="3.8" height="1" fill="#000" opacity="0.75"/><rect x="44.1" y="28" width="5.3" height="1" fill="#000" opacity="0.75"/><rect x="49.9" y="28" width="1.5" height="1" fill="#000" opacity="0.75"/><rect x="51.8" y="28" width="3.8" height="1" fill="#000" opacity="0.75"/><rect x="78.6" y="28" width="0.8" height="1" fill="#000" opacity="0.75"/><rect x="79.8" y="28" width="4.6" height="1" fill="#000" opacity="0.75"/><rect x="109.1" y="28" width="1.5" height="1" fill="#000" opacity="0.75"/><rect x="119.3" y="28" width="4.6" height="1" fill="#000" opacity="0.75"/><rect x="127.8" y="28" width="5.3" height="1" fill="#000" opacity="0.75"/><rect x="3.0" y="29.01" width="130.5" height="2.48" fill="#C9DCF1"/><rect x="5.7" y="30" width="2.3" height="1" fill="#000" opacity="0.75"/><rect x="8.7" y="30" width="5.3" height="1" fill="#000" opacity="0.75"/><rect x="14.4" y="30" width="4.6" height="1" fill="#000" opacity="0.75"/><rect x="19.4" y="30" width="5.3" height="1" fill="#000" opacity="0.75"/><rect x="25.2" y="30" width="2.3" height="1" fill="#000" opacity="0.75"/><rect x="109.8" y="30" width="0.8" height="1" fill="#000" opacity="0.75"/><rect x="5.7" y="32" width="2.3" height="1" fill="#000" opacity="0.75"/><rect x="8.7" y="32" width="2.3" height="1" fill="#000" opacity="0.75"/><rect x="11.4" y="32" width="3.0" height="1" fill="#000" opacity="0.75"/><rect x="14.9" y="32" width="0.8" height="1" fill="#000" opacity="0.75"/><rect x="16.0" y="32" width="3.0" height="1" fill="#000" opacity="0.75"/><rect x="19.5" y="32" width="2.3" height="1" fill="#000" opacity="0.75"/><rect x="39.9" y="32" width="2.3" height="1" fill="#000" opacity="0.75"/><rect x="42.6" y="32" width="5.3" height="1" fill="#000" opacity="0.75"/><rect x="48.4" y="32" width="1.5" height="1" fill="#000" opacity="0.75"/><rect x="50.3" y="32" width="4.6" height="1" fill="#000" opacity="0.75"/><rect x="55.3" y="32" width="3.8" height="1" fill="#000" opacity="0.75"/><rect x="78.6" y="32" width="2.3" height="1" fill="#000" opacity="0.75"/><rect x="81.3" y="32" width="5.3" height="1" fill="#000" opacity="0.75"/><rect x="87.1" y="32" width="1.5" height="1" fill="#000" opacity="0.75"/><rect x="109.1" y="32" width="1.5" height="1" fill="#000" opacity="0.75"/><rect x="119.3" y="32" width="4.6" height="1" fill="#000" opacity="0.75"/><rect x="127.8" y="32" width="5.3" height="1" fill="#000" opacity="0.75"/><rect x="5.7" y="35" width="2.3" height="1" fill="#000" opacity="0.75"/><rect x="8.7" y="35" width="0.8" height="1" fill="#000" opacity="0.75"/><rect x="9.9" y="35" width="5.3" height="1" fill="#000" opacity="0.75"/><rect x="39.9" y="35" width="4.6" height="1" fill="#000" opacity="0.75"/><rect x="44.9" y="35" width="2.3" height="1" fill="#000" opacity="0.75"/><rect x="47.6" y="35" width="3.0" height="1" fill="#000" opacity="0.75"/><rect x="51.1" y="35" width="3.0" height="1" fill="#000" opacity="0.75"/><rect x="54.5" y="35" width="5.3" height="1" fill="#000" opacity="0.75"/><rect x="60.3" y="35" width="5.3" height="1" fill="#000" opacity="0.75"/><rect x="78.6" y="35" width="0.8" height="1" fill="#000" opacity="0.75"/><rect x="109.1" y="35" width="1.5" height="1" fill="#000" opacity="0.75"/><rect x="119.3" y="35" width="4.6" height="1" fill="#000" opacity="0.75"/><rect x="127.8" y="35" width="5.3" height="1" fill="#000" opacity="0.75"/><rect x="3.0" y="36.44" width="130.5" height="2.48" fill="#C9DCF1"/><rect x="5.7" y="37" width="2.3" height="1" fill="#000" opacity="0.75"/><rect x="8.7" y="37" width="5.3" height="1" fill="#000" opacity="0.75"/><rect x="14.4" y="37" width="3.8" height="1" fill="#000" opacity="0.75"/><rect x="18.7" y="37" width="3.8" height="1" fill="#000" opacity="0.75"/><rect x="22.9" y="37" width="4.6" height="1" fill="#000" opacity="0.75"/><rect x="109.8" y="37" width="0.8" height="1" fill="#000" opacity="0.75"/><rect x="5.7" y="40" width="2.3" height="1" fill="#000" opacity="0.75"/><rect x="8.7" y="40" width="3.0" height="1" fill="#000" opacity="0.75"/><rect x="12.2" y="40" width="5.3" height="1" fill="#000" opacity="0.75"/><rect x="17.9" y="40" width="3.0" height="1" fill="#000" opacity="0.75"/><rect x="39.9" y="40" width="2.3" height="1" fill="#000" opacity="0.75"/><rect x="42.6" y="40" width="2.3" height="1" fill="#000" opacity="0.75"/><rect x="45.3" y="40" width="2.3" height="1" fill="#000" opacity="0.75"/><rect x="48.0" y="40" width="2.3" height="1" fill="#000" opacity="0.75"/><rect x="50.7" y="40" width="1.5" height="1" fill="#000" opacity="0.75"/><rect x="78.6" y="40" width="4.6" height="1" fill="#000" opacity="0.75"/><rect x="83.6" y="40" width="0.8" height="1" fill="#000" opacity="0.75"/><rect x="84.8" y="40" width="5.3" height="1" fill="#000" opacity="0.75"/><rect x="109.1" y="40" width="1.5" height="1" fill="#000" opacity="0.75"/><rect x="119.3" y="40" width="4.6" height="1" fill="#000" opacity="0.75"/><rect x="127.8" y="40" width="5.3" height="1" fill="#000" opacity="0.75"/><rect x="5.7" y="42" width="2.3" height="1" fill="#000" opacity="0.75"/><rect x="8.7" y="42" width="0.8" height="1" fill="#000" opacity="0.75"/><rect x="9.9" y="42" width="2.3" height="1" fill="#000" opacity="0.75"/><rect x="12.6" y="42" width="3.8" height="1" fill="#000" opacity="0.75"/><rect x="16.8" y="42" width="0.8" height="1" fill="#000" opacity="0.75"/><rect x="18.0" y="42" width="4.6" height="1" fill="#000" opacity="0.75"/><rect x="39.9" y="42" width="3.0" height="1" fill="#000" opacity="0.75"/><rect x="43.4" y="42" width="4.6" height="1" fill="#000" opacity="0.75"/><rect x="48.4" y="42" width="3.0" height="1" fill="#000" opacity="0.75"/><rect x="51.8" y="42" width="2.3" height="1" fill="#000" opacity="0.75"/><rect x="54.5" y="42" width="2.3" height="1" fill="#000" opacity="0.75"/><rect x="57.2" y="42" width="3.0" height="1" fill="#000" opacity="0.75"/><rect x="60.7" y="42" width="3.0" height="1" fill="#000" opacity="0.75"/><rect x="78.6" y="42" width="5.3" height="1" fill="#000" opacity="0.75"/><rect x="84.4" y="42" width="2.3" height="1" fill="#000" opacity="0.75"/><rect x="87.1" y="42" width="2.3" height="1" fill="#000" opacity="0.75"/><rect x="89.8" y="42" width="5.3" height="1" fill="#000" opacity="0.75"/><rect x="109.1" y="42" width="1.5" height="1" fill="#000" opacity="0.75"/><rect x="119.3" y="42" width="4.6" height="1" fill="#000" opacity="0.75"/><rect x="127.8" y="42" width="5.3" height="1" fill="#000" opacity="0.75"/><rect x="5.7" y="45" width="2.3" height="1" fill="#000" opacity="0.75"/><rect x="8.7" y="45" width="0.8" height="1" fill="#000" opacity="0.75"/><rect x="9.9" y="45" width="3.0" height="1" fill="#000" opacity="0.75"/><rect x="13.3" y="45" width="3.0" height="1" fill="#000" opacity="0.75"/><rect x="16.8" y="45" width="5.3" height="1" fill="#000" opacity="0.75"/><rect x="39.9" y="45" width="1.5" height="1" fill="#000" opacity="0.75"/><rect x="41.9" y="45" width="5.3" height="1" fill="#000" opacity="0.75"/><rect x="78.6" y="45" width="5.3" height="1" fill="#000" opacity="0.75"/><rect x="109.1" y="45" width="1.5" height="1" fill="#000" opacity="0.75"/><rect x="119.3" y="45" width="4.6" height="1" fill="#000" opacity="0.75"/><rect x="127.8" y="45" width="5.3" height="1" fill="#000" opacity="0.75"/><rect x="3.0" y="46.35" width="130.5" height="2.48" fill="#C9DCF1"/><rect x="5.7" y="47" width="2.3" height="1" fill="#000" opacity="0.75"/><rect x="8.7" y="47" width="3.8" height="1" fill="#000" opacity="0.75"/><rect x="12.9" y="47" width="2.3" height="1" fill="#000" opacity="0.75"/><rect x="15.6" y="47" width="2.3" height="1" fill="#000" opacity="0.75"/><rect x="109.8" y="47" width="0.8" height="1" fill="#000" opacity="0.75"/><rect x="5.7" y="50" width="2.3" height="1" fill="#000" opacity="0.75"/><rect x="8.7" y="50" width="5.3" height="1" fill="#000" opacity="0.75"/><rect x="14.4" y="50" width="0.8" height="1" fill="#000" opacity="0.75"/><rect x="39.9" y="50" width="1.5" height="1" fill="#000" opacity="0.75"/><rect x="41.9" y="50" width="0.8" height="1" fill="#000" opacity="0.75"/><rect x="43.0" y="50" width="3.8" height="1" fill="#000" opacity="0.75"/><rect x="78.6" y="50" width="3.0" height="1" fill="#000" opacity="0.75"/><rect x="82.1" y="50" width="0.8" height="1" fill="#000" opacity="0.75"/><rect x="83.3" y="50" width="1.5" height="1" fill="#000" opacity="0.75"/><rect x="85.2" y="50" width="2.3" height="1" fill="#000" opacity="0.75"/><rect x="87.9" y="50" width="5.3" height="1" fill="#000" opacity="0.75"/><rect x="109.1" y="50" width="1.5" height="1" fill="#000" opacity="0.75"/><rect x="119.3" y="50" width="4.6" height="1" fill="#000" opacity="0.75"/><rect x="127.8" y="50" width="5.3" height="1" fill="#000" opacity="0.75"/><rect x="5.7" y="52" width="2.3" height="1" fill="#000" opacity="0.75"/><rect x="8.7" y="52" width="0.8" height="1" fill="#000" opacity="0.75"/><rect x="9.9" y="52" width="1.5" height="1" fill="#000" opacity="0.75"/><rect x="11.8" y="52" width="5.3" height="1" fill="#000" opacity="0.75"/><rect x="39.9" y="52" width="5.3" height="1" fill="#000" opacity="0.75"/><rect x="45.7" y="52" width="0.8" height="1" fill="#000" opacity="0.75"/><rect x="46.8" y="52" width="3.8" height="1" fill="#000" opacity="0.75"/><rect x="51.1" y="52" width="5.3" height="1" fill="#000" opacity="0.75"/><rect x="56.8" y="52" width="3.8" height="1" fill="#000" opacity="0.75"/><rect x="61.0" y="52" width="3.0" height="1" fill="#000" opacity="0.75"/><rect x="64.5" y="52" width="3.8" height="1" fill="#000" opacity="0.75"/><rect x="78.6" y="52" width="2.3" height="1" fill="#000" opacity="0.75"/><rect x="81.3" y="52" width="2.3" height="1" fill="#000" opacity="0.75"/><rect x="84.0" y="52" width="4.6" height="1" fill="#000" opacity="0.75"/><rect x="89.0" y="52" width="4.6" height="1" fill="#000" opacity="0.75"/><rect x="109.1" y="52" width="1.5" height="1" fill="#000" opacity="0.75"/><rect x="119.3" y="52" width="4.6" height="1" fill="#000" opacity="0.75"/><rect x="127.8" y="52" width="5.3" height="1" fill="#000" opacity="0.75"/><rect x="5.7" y="55" width="2.3" height="1" fill="#000" opacity="0.75"/><rect x="8.7" y="55" width="4.6" height="1" fill="#000" opacity="0.75"/><rect x="13.7" y="55" width="3.0" height="1" fill="#000" opacity="0.75"/><rect x="17.1" y="55" width="3.0" height="1" fill="#000" opacity="0.75"/><rect x="39.9" y="55" width="2.3" height="1" fill="#000" opacity="0.75"/><rect x="42.6" y="55" width="0.8" height="1" fill="#000" opacity="0.75"/><rect x="43.8" y="55" width="1.5" height="1" fill="#000" opacity="0.75"/><rect x="45.7" y="55" width="3.8" height="1" fill="#000" opacity="0.75"/><rect x="78.6" y="55" width="1.5" height="1" fill="#000" opacity="0.75"/><rect x="80.6" y="55" width="1.5" height="1" fill="#000" opacity="0.75"/><rect x="109.1" y="55" width="1.5" height="1" fill="#000" opacity="0.75"/><rect x="119.3" y="55" width="4.6" height="1" fill="#000" opacity="0.75"/><rect x="127.8" y="55" width="5.3" height="1" fill="#000" opacity="0.75"/><rect x="5.7" y="57" width="2.3" height="1" fill="#000" opacity="0.75"/><rect x="8.7" y="57" width="2.3" height="1" fill="#000" opacity="0.75"/><rect x="11.4" y="57" width="5.3" height="1" fill="#000" opacity="0.75"/><rect x="17.1" y="57" width="5.3" height="1" fill="#000" opacity="0.75"/><rect x="39.9" y="57" width="4.6" height="1" fill="#000" opacity="0.75"/><rect x="44.9" y="57" width="3.8" height="1" fill="#000" opacity="0.75"/><rect x="49.1" y="57" width="1.5" height="1" fill="#000" opacity="0.75"/><rect x="51.1" y="57" width="1.5" height="1" fill="#000" opacity="0.75"/><rect x="78.6" y="57" width="2.3" height="1" fill="#000" opacity="0.75"/><rect x="109.1" y="57" width="1.5" height="1" fill="#000" opacity="0.75"/><rect x="119.3" y="57" width="4.6" height="1" fill="#000" opacity="0.75"/><rect x="127.8" y="57" width="5.3" height="1" fill="#000" opacity="0.75"/><rect x="5.7" y="60" width="2.3" height="1" fill="#000" opacity="0.75"/><rect x="8.7" y="60" width="3.8" height="1" fill="#000" opacity="0.75"/><rect x="12.9" y="60" width="3.8" height="1" fill="#000" opacity="0.75"/><rect x="17.1" y="60" width="1.5" height="1" fill="#000" opacity="0.75"/><rect x="19.1" y="60" width="2.3" height="1" fill="#000" opacity="0.75"/><rect x="39.9" y="60" width="0.8" height="1" fill="#000" opacity="0.75"/><rect x="41.1" y="60" width="1.5" height="1" fill="#000" opacity="0.75"/><rect x="43.0" y="60" width="1.5" height="1" fill="#000" opacity="0.75"/><rect x="45.0" y="60" width="3.0" height="1" fill="#000" opacity="0.75"/><rect x="48.4" y="60" width="3.8" height="1" fill="#000" opacity="0.75"/><rect x="52.6" y="60" width="3.8" height="1" fill="#000" opacity="0.75"/><rect x="56.9" y="60" width="5.3" height="1" fill="#000" opacity="0.75"/><rect x="62.6" y="60" width="3.0" height="1" fill="#000" opacity="0.75"/><rect x="78.6" y="60" width="2.3" height="1" fill="#000" opacity="0.75"/><rect x="81.3" y="60" width="5.3" height="1" fill="#000" opacity="0.75"/><rect x="87.1" y="60" width="3.0" height="1" fill="#000" opacity="0.75"/><rect x="90.5" y="60" width="4.6" height="1" fill="#000" opacity="0.75"/><rect x="109.1" y="60" width="1.5" height="1" fill="#000" opacity="0.75"/><rect x="119.3" y="60" width="4.6" height="1" fill="#000" opacity="0.75"/><rect x="127.8" y="60" width="5.3" height="1" fill="#000" opacity="0.75"/><rect x="5.7" y="62" width="2.3" height="1" fill="#000" opacity="0.75"/><rect x="8.7" y="62" width="1.5" height="1" fill="#000" opacity="0.75"/><rect x="10.6" y="62" width="1.5" height="1" fill="#000" opacity="0.75"/><rect x="12.6" y="62" width="5.3" height="1" fill="#000" opacity="0.75"/><rect x="39.9" y="62" width="4.6" height="1" fill="#000" opacity="0.75"/><rect x="44.9" y="62" width="5.3" height="1" fill="#000" opacity="0.75"/><rect x="50.6" y="62" width="1.5" height="1" fill="#000" opacity="0.75"/><rect x="109.1" y="62" width="1.5" height="1" fill="#000" opacity="0.75"/><rect x="119.3" y="62" width="4.6" height="1" fill="#000" opacity="0.75"/><rect x="127.8" y="62" width="5.3" height="1" fill="#000" opacity="0.75"/><rect x="5.7" y="65" width="2.3" height="1" fill="#000" opacity="0.75"/><rect x="8.7" y="65" width="3.0" height="1" fill="#000" opacity="0.75"/><rect x="12.2" y="65" width="4.6" height="1" fill="#000" opacity="0.75"/><rect x="39.9" y="65" width="2.3" height="1" fill="#000" opacity="0.75"/><rect x="42.6" y="65" width="2.3" height="1" fill="#000" opacity="0.75"/><rect x="45.3" y="65" width="1.5" height="1" fill="#000" opacity="0.75"/><rect x="47.3" y="65" width="2.3" height="1" fill="#000" opacity="0.75"/><rect x="49.9" y="65" width="3.0" height="1" fill="#000" opacity="0.75"/><rect x="78.6" y="65" width="2.3" height="1" fill="#000" opacity="0.75"/><rect x="81.3" y="65" width="0.8" height="1" fill="#000" opacity="0.75"/><rect x="82.5" y="65" width="1.5" height="1" fill="#000" opacity="0.75"/><rect x="84.4" y="65" width="2.3" height="1" fill="#000" opacity="0.75"/><rect x="87.1" y="65" width="4.6" height="1" fill="#000" opacity="0.75"/><rect x="109.1" y="65" width="1.5" height="1" fill="#000" opacity="0.75"/><rect x="119.3" y="65" width="4.6" height="1" fill="#000" opacity="0.75"/><rect x="127.8" y="65" width="5.3" height="1" fill="#000" opacity="0.75"/><rect x="5.7" y="67" width="2.3" height="1" fill="#000" opacity="0.75"/><rect x="8.7" y="67" width="1.5" height="1" fill="#000" opacity="0.75"/><rect x="10.6" y="67" width="2.3" height="1" fill="#000" opacity="0.75"/><rect x="13.3" y="67" width="5.3" height="1" fill="#000" opacity="0.75"/><rect x="39.9" y="67" width="5.3" height="1" fill="#000" opacity="0.75"/><rect x="45.7" y="67" width="5.3" height="1" fill="#000" opacity="0.75"/><rect x="51.4" y="67" width="5.3" height="1" fill="#000" opacity="0.75"/><rect x="78.6" y="67" width="3.0" height="1" fill="#000" opacity="0.75"/><rect x="82.1" y="67" width="2.3" height="1" fill="#000" opacity="0.75"/><rect x="84.8" y="67" width="0.8" height="1" fill="#000" opacity="0.75"/><rect x="86.0" y="67" width="0.8" height="1" fill="#000" opacity="0.75"/><rect x="87.1" y="67" width="2.3" height="1" fill="#000" opacity="0.75"/><rect x="109.1" y="67" width="1.5" height="1" fill="#000" opacity="0.75"/><rect x="119.3" y="67" width="4.6" height="1" fill="#000" opacity="0.75"/><rect x="127.8" y="67" width="5.3" height="1" fill="#000" opacity="0.75"/><rect x="5.7" y="70" width="2.3" height="1" fill="#000" opacity="0.75"/><rect x="8.7" y="70" width="2.3" height="1" fill="#000" opacity="0.75"/><rect x="11.4" y="70" width="3.0" height="1" fill="#000" opacity="0.75"/><rect x="14.9" y="70" width="3.0" height="1" fill="#000" opacity="0.75"/><rect x="18.3" y="70" width="3.8" height="1" fill="#000" opacity="0.75"/><rect x="39.9" y="70" width="1.5" height="1" fill="#000" opacity="0.75"/><rect x="41.9" y="70" width="0.8" height="1" fill="#000" opacity="0.75"/><rect x="43.0" y="70" width="0.8" height="1" fill="#000" opacity="0.75"/><rect x="44.2" y="70" width="1.5" height="1" fill="#000" opacity="0.75"/><rect x="46.1" y="70" width="3.8" height="1" fill="#000" opacity="0.75"/><rect x="50.4" y="70" width="0.8" height="1" fill="#000" opacity="0.75"/><rect x="51.5" y="70" width="5.3" height="1" fill="#000" opacity="0.75"/><rect x="57.3" y="70" width="5.3" height="1" fill="#000" opacity="0.75"/><rect x="78.6" y="70" width="4.6" height="1" fill="#000" opacity="0.75"/><rect x="83.6" y="70" width="5.3" height="1" fill="#000" opacity="0.75"/><rect x="109.1" y="70" width="1.5" height="1" fill="#000" opacity="0.75"/><rect x="119.3" y="70" width="4.6" height="1" fill="#000" opacity="0.75"/><rect x="127.8" y="70" width="5.3" height="1" fill="#000" opacity="0.75"/><rect x="5.7" y="72" width="2.3" height="1" fill="#000" opacity="0.75"/><rect x="8.7" y="72" width="3.8" height="1" fill="#000" opacity="0.75"/><rect x="12.9" y="72" width="4.6" height="1" fill="#000" opacity="0.75"/><rect x="39.9" y="72" width="1.5" height="1" fill="#000" opacity="0.75"/><rect x="41.9" y="72" width="4.6" height="1" fill="#000" opacity="0.75"/><rect x="46.8" y="72" width="5.3" height="1" fill="#000" opacity="0.75"/><rect x="52.6" y="72" width="4.6" height="1" fill="#000" opacity="0.75"/><rect x="57.6" y="72" width="3.8" height="1" fill="#000" opacity="0.75"/><rect x="78.6" y="72" width="2.3" height="1" fill="#000" opacity="0.75"/><rect x="81.3" y="72" width="1.5" height="1" fill="#000" opacity="0.75"/><rect x="109.1" y="72" width="1.5" height="1" fill="#000" opacity="0.75"/><rect x="119.3" y="72" width="4.6" height="1" fill="#000" opacity="0.75"/><rect x="127.8" y="72" width="5.3" height="1" fill="#000" opacity="0.75"/><rect x="5.7" y="75" width="2.3" height="1" fill="#000" opacity="0.75"/><rect x="8.7" y="75" width="5.3" height="1" fill="#000" opacity="0.75"/><rect x="14.4" y="75" width="3.8" height="1" fill="#000" opacity="0.75"/><rect x="18.7" y="75" width="1.5" height="1" fill="#000" opacity="0.75"/><rect x="20.6" y="75" width="3.8" height="1" fill="#000" opacity="0.75"/><rect x="39.9" y="75" width="3.8" height="1" fill="#000" opacity="0.75"/><rect x="44.1" y="75" width="4.6" height="1" fill="#000" opacity="0.75"/><rect x="49.1" y="75" width="4.6" height="1" fill="#000" opacity="0.75"/><rect x="54.1" y="75" width="2.3" height="1" fill="#000" opacity="0.75"/><rect x="78.6" y="75" width="2.3" height="1" fill="#000" opacity="0.75"/><rect x="81.3" y="75" width="3.8" height="1" fill="#000" opacity="0.75"/><rect x="109.1" y="75" width="1.5" height="1" fill="#000" opacity="0.75"/><rect x="119.3" y="75" width="4.6" height="1" fill="#000" opacity="0.75"/><rect x="127.8" y="75" width="5.3" height="1" fill="#000" opacity="0.75"/><rect x="5.7" y="77" width="2.3" height="1" fill="#000" opacity="0.75"/><rect x="8.7" y="77" width="5.3" height="1" fill="#000" opacity="0.75"/><rect x="14.4" y="77" width="1.5" height="1" fill="#000" opacity="0.75"/><rect x="16.4" y="77" width="2.3" height="1" fill="#000" opacity="0.75"/><rect x="39.9" y="77" width="3.0" height="1" fill="#000" opacity="0.75"/><rect x="43.4" y="77" width="3.8" height="1" fill="#000" opacity="0.75"/><rect x="47.6" y="77" width="0.8" height="1" fill="#000" opacity="0.75"/><rect x="48.8" y="77" width="5.3" height="1" fill="#000" opacity="0.75"/><rect x="78.6" y="77" width="1.5" height="1" fill="#000" opacity="0.75"/><rect x="109.1" y="77" width="1.5" height="1" fill="#000" opacity="0.75"/><rect x="119.3" y="77" width="4.6" height="1" fill="#000" opacity="0.75"/><rect x="127.8" y="77" width="5.3" height="1" fill="#000" opacity="0.75"/><rect x="5.7" y="80" width="2.3" height="1" fill="#000" opacity="0.75"/><rect x="8.7" y="80" width="1.5" height="1" fill="#000" opacity="0.75"/><rect x="10.6" y="80" width="3.8" height="1" fill="#000" opacity="0.75"/><rect x="39.9" y="80" width="5.3" height="1" fill="#000" opacity="0.75"/><rect x="45.7" y="80" width="3.0" height="1" fill="#000" opacity="0.75"/><rect x="49.1" y="80" width="1.5" height="1" fill="#000" opacity="0.75"/><rect x="51.1" y="80" width="3.8" height="1" fill="#000" opacity="0.75"/><rect x="55.3" y="80" width="4.6" height="1" fill="#000" opacity="0.75"/><rect x="60.3" y="80" width="1.5" height="1" fill="#000" opacity="0.75"/><rect x="62.2" y="80" width="5.3" height="1" fill="#000" opacity="0.75"/><rect x="78.6" y="80" width="2.3" height="1" fill="#000" opacity="0.75"/><rect x="81.3" y="80" width="0.8" height="1" fill="#000" opacity="0.75"/><rect x="82.5" y="80" width="3.8" height="1" fill="#000" opacity="0.75"/><rect x="86.7" y="80" width="4.6" height="1" fill="#000" opacity="0.75"/><rect x="109.1" y="80" width="1.5" height="1" fill="#000" opacity="0.75"/><rect x="119.3" y="80" width="4.6" height="1" fill="#000" opacity="0.75"/><rect x="127.8" y="80" width="5.3" height="1" fill="#000" opacity="0.75"/><rect x="5.7" y="82" width="2.3" height="1" fill="#000" opacity="0.75"/><rect x="8.7" y="82" width="4.6" height="1" fill="#000" opacity="0.75"/><rect x="13.7" y="82" width="4.6" height="1" fill="#000" opacity="0.75"/><rect x="39.9" y="82" width="4.6" height="1" fill="#000" opacity="0.75"/><rect x="44.9" y="82" width="3.8" height="1" fill="#000" opacity="0.75"/><rect x="49.1" y="82" width="5.3" height="1" fill="#000" opacity="0.75"/><rect x="78.6" y="82" width="3.8" height="1" fill="#000" opacity="0.75"/><rect x="82.8" y="82" width="1.5" height="1" fill="#000" opacity="0.75"/><rect x="109.1" y="82" width="1.5" height="1" fill="#000" opacity="0.75"/><rect x="119.3" y="82" width="4.6" height="1" fill="#000" opacity="0.75"/><rect x="127.8" y="82" width="5.3" height="1" fill="#000" opacity="0.75"/><rect x="5.7" y="85" width="2.3" height="1" fill="#000" opacity="0.75"/><rect x="8.7" y="85" width="3.0" height="1" fill="#000" opacity="0.75"/><rect x="12.2" y="85" width="1.5" height="1" fill="#000" opacity="0.75"/><rect x="14.1" y="85" width="5.3" height="1" fill="#000" opacity="0.75"/><rect x="19.8" y="85" width="2.3" height="1" fill="#000" opacity="0.75"/><rect x="39.9" y="85" width="3.0" height="1" fill="#000" opacity="0.75"/><rect x="43.4" y="85" width="3.8" height="1" fill="#000" opacity="0.75"/><rect x="47.6" y="85" width="0.8" height="1" fill="#000" opacity="0.75"/><rect x="48.8" y="85" width="3.0" height="1" fill="#000" opacity="0.75"/><rect x="52.2" y="85" width="3.8" height="1" fill="#000" opacity="0.75"/><rect x="56.5" y="85" width="2.3" height="1" fill="#000" opacity="0.75"/><rect x="59.1" y="85" width="2.3" height="1" fill="#000" opacity="0.75"/><rect x="61.8" y="85" width="1.5" height="1" fill="#000" opacity="0.75"/><rect x="78.6" y="85" width="5.3" height="1" fill="#000" opacity="0.75"/><rect x="84.4" y="85" width="4.6" height="1" fill="#000" opacity="0.75"/><rect x="109.1" y="85" width="1.5" height="1" fill="#000" opacity="0.75"/><rect x="119.3" y="85" width="4.6" height="1" fill="#000" opacity="0.75"/><rect x="127.8" y="85" width="5.3" height="1" fill="#000" opacity="0.75"/><rect x="5.7" y="87" width="2.3" height="1" fill="#000" opacity="0.75"/><rect x="8.7" y="87" width="1.5" height="1" fill="#000" opacity="0.75"/><rect x="10.6" y="87" width="4.6" height="1" fill="#000" opacity="0.75"/><rect x="15.6" y="87" width="1.5" height="1" fill="#000" opacity="0.75"/><rect x="17.6" y="87" width="3.8" height="1" fill="#000" opacity="0.75"/><rect x="39.9" y="87" width="2.3" height="1" fill="#000" opacity="0.75"/><rect x="42.6" y="87" width="4.6" height="1" fill="#000" opacity="0.75"/><rect x="78.6" y="87" width="3.8" height="1" fill="#000" opacity="0.75"/><rect x="109.1" y="87" width="1.5" height="1" fill="#000" opacity="0.75"/><rect x="119.3" y="87" width="4.6" height="1" fill="#000" opacity="0.75"/><rect x="127.8" y="87" width="5.3" height="1" fill="#000" opacity="0.75"/><rect x="3.0" y="88.46" width="130.5" height="2.48" fill="#C9DCF1"/><rect x="5.7" y="89" width="2.3" height="1" fill="#000" opacity="0.75"/><rect x="8.7" y="89" width="5.3" height="1" fill="#000" opacity="0.75"/><rect x="14.4" y="89" width="3.8" height="1" fill="#000" opacity="0.75"/><rect x="18.7" y="89" width="5.3" height="1" fill="#000" opacity="0.75"/><rect x="109.8" y="89" width="0.8" height="1" fill="#000" opacity="0.75"/><rect x="5.7" y="92" width="2.3" height="1" fill="#000" opacity="0.75"/><rect x="8.7" y="92" width="1.5" height="1" fill="#000" opacity="0.75"/><rect x="10.6" y="92" width="1.5" height="1" fill="#000" opacity="0.75"/><rect x="12.6" y="92" width="0.8" height="1" fill="#000" opacity="0.75"/><rect x="13.8" y="92" width="2.3" height="1" fill="#000" opacity="0.75"/><rect x="16.4" y="92" width="3.8" height="1" fill="#000" opacity="0.75"/><rect x="39.9" y="92" width="3.8" height="1" fill="#000" opacity="0.75"/><rect x="44.1" y="92" width="0.8" height="1" fill="#000" opacity="0.75"/><rect x="45.3" y="92" width="1.5" height="1" fill="#000" opacity="0.75"/><rect x="47.3" y="92" width="4.6" height="1" fill="#000" opacity="0.75"/><rect x="52.2" y="92" width="1.5" height="1" fill="#000" opacity="0.75"/><rect x="54.2" y="92" width="2.3" height="1" fill="#000" opacity="0.75"/><rect x="56.9" y="92" width="4.6" height="1" fill="#000" opacity="0.75"/><rect x="61.8" y="92" width="2.3" height="1" fill="#000" opacity="0.75"/><rect x="78.6" y="92" width="1.5" height="1" fill="#000" opacity="0.75"/><rect x="80.6" y="92" width="4.6" height="1" fill="#000" opacity="0.75"/><rect x="85.5" y="92" width="0.8" height="1" fill="#000" opacity="0.75"/><rect x="86.7" y="92" width="1.5" height="1" fill="#000" opacity="0.75"/><rect x="109.1" y="92" width="1.5" height="1" fill="#000" opacity="0.75"/><rect x="119.3" y="92" width="4.6" height="1" fill="#000" opacity="0.75"/><rect x="127.8" y="92" width="5.3" height="1" fill="#000" opacity="0.75"/><rect x="130.0" y="95.0" width="1" height="1" fill="#000"/></svg></div><div class="tb" style="left:135px;top:643px;font-size:12px;color:#222">3</div><div class="a" style="left:70px;top:680px;width:136px;height:105px;background:#fff;overflow:hidden;box-shadow:0 1px 0 #858585,1px 1px 0 #a0a0a0,1px 2px 2px rgba(0,0,0,0.25)"><svg width="137" height="105" style="position:absolute;left:0;top:0"><rect x="0" y="0" width="137" height="105" fill="#fff"/><rect x="3.6" y="4.4" width="6" height="1" fill="#000"/><rect x="3.0" y="9.20" width="130.5" height="2.48" fill="#C9DCF1"/><rect x="5.7" y="10" width="2.3" height="1" fill="#000" opacity="0.75"/><rect x="8.7" y="10" width="3.8" height="1" fill="#000" opacity="0.75"/><rect x="12.9" y="10" width="1.5" height="1" fill="#000" opacity="0.75"/><rect x="109.8" y="10" width="0.8" height="1" fill="#000" opacity="0.75"/><rect x="5.7" y="13" width="2.3" height="1" fill="#000" opacity="0.75"/><rect x="8.7" y="13" width="4.6" height="1" fill="#000" opacity="0.75"/><rect x="13.7" y="13" width="0.8" height="1" fill="#000" opacity="0.75"/><rect x="14.9" y="13" width="1.5" height="1" fill="#000" opacity="0.75"/><rect x="39.9" y="13" width="3.8" height="1" fill="#000" opacity="0.75"/><rect x="44.1" y="13" width="1.5" height="1" fill="#000" opacity="0.75"/><rect x="46.1" y="13" width="4.6" height="1" fill="#000" opacity="0.75"/><rect x="78.6" y="13" width="1.5" height="1" fill="#000" opacity="0.75"/><rect x="80.6" y="13" width="4.6" height="1" fill="#000" opacity="0.75"/><rect x="109.1" y="13" width="1.5" height="1" fill="#000" opacity="0.75"/><rect x="119.3" y="13" width="4.6" height="1" fill="#000" opacity="0.75"/><rect x="127.8" y="13" width="5.3" height="1" fill="#000" opacity="0.75"/><rect x="3.0" y="14.15" width="130.5" height="2.48" fill="#C9DCF1"/><rect x="5.7" y="15" width="2.3" height="1" fill="#000" opacity="0.75"/><rect x="8.7" y="15" width="2.3" height="1" fill="#000" opacity="0.75"/><rect x="11.4" y="15" width="2.3" height="1" fill="#000" opacity="0.75"/><rect x="109.8" y="15" width="0.8" height="1" fill="#000" opacity="0.75"/><rect x="5.7" y="18" width="2.3" height="1" fill="#000" opacity="0.75"/><rect x="8.7" y="18" width="3.8" height="1" fill="#000" opacity="0.75"/><rect x="12.9" y="18" width="3.0" height="1" fill="#000" opacity="0.75"/><rect x="16.4" y="18" width="1.5" height="1" fill="#000" opacity="0.75"/><rect x="18.3" y="18" width="3.8" height="1" fill="#000" opacity="0.75"/><rect x="39.9" y="18" width="0.8" height="1" fill="#000" opacity="0.75"/><rect x="41.1" y="18" width="0.8" height="1" fill="#000" opacity="0.75"/><rect x="42.3" y="18" width="5.3" height="1" fill="#000" opacity="0.75"/><rect x="78.6" y="18" width="2.3" height="1" fill="#000" opacity="0.75"/><rect x="81.3" y="18" width="1.5" height="1" fill="#000" opacity="0.75"/><rect x="83.3" y="18" width="1.5" height="1" fill="#000" opacity="0.75"/><rect x="85.2" y="18" width="2.3" height="1" fill="#000" opacity="0.75"/><rect x="109.1" y="18" width="1.5" height="1" fill="#000" opacity="0.75"/><rect x="119.3" y="18" width="4.6" height="1" fill="#000" opacity="0.75"/><rect x="127.8" y="18" width="5.3" height="1" fill="#000" opacity="0.75"/><rect x="5.7" y="20" width="2.3" height="1" fill="#000" opacity="0.75"/><rect x="8.7" y="20" width="1.5" height="1" fill="#000" opacity="0.75"/><rect x="10.6" y="20" width="1.5" height="1" fill="#000" opacity="0.75"/><rect x="12.6" y="20" width="4.6" height="1" fill="#000" opacity="0.75"/><rect x="17.6" y="20" width="1.5" height="1" fill="#000" opacity="0.75"/><rect x="19.5" y="20" width="3.0" height="1" fill="#000" opacity="0.75"/><rect x="39.9" y="20" width="0.8" height="1" fill="#000" opacity="0.75"/><rect x="41.1" y="20" width="0.8" height="1" fill="#000" opacity="0.75"/><rect x="42.3" y="20" width="5.3" height="1" fill="#000" opacity="0.75"/><rect x="48.0" y="20" width="1.5" height="1" fill="#000" opacity="0.75"/><rect x="49.9" y="20" width="2.3" height="1" fill="#000" opacity="0.75"/><rect x="52.6" y="20" width="1.5" height="1" fill="#000" opacity="0.75"/><rect x="54.6" y="20" width="1.5" height="1" fill="#000" opacity="0.75"/><rect x="56.5" y="20" width="1.5" height="1" fill="#000" opacity="0.75"/><rect x="58.4" y="20" width="5.3" height="1" fill="#000" opacity="0.75"/><rect x="64.2" y="20" width="5.3" height="1" fill="#000" opacity="0.75"/><rect x="78.6" y="20" width="0.8" height="1" fill="#000" opacity="0.75"/><rect x="79.8" y="20" width="0.8" height="1" fill="#000" opacity="0.75"/><rect x="81.0" y="20" width="4.6" height="1" fill="#000" opacity="0.75"/><rect x="86.0" y="20" width="3.8" height="1" fill="#000" opacity="0.75"/><rect x="109.1" y="20" width="1.5" height="1" fill="#000" opacity="0.75"/><rect x="119.3" y="20" width="4.6" height="1" fill="#000" opacity="0.75"/><rect x="127.8" y="20" width="5.3" height="1" fill="#000" opacity="0.75"/><rect x="5.7" y="23" width="2.3" height="1" fill="#000" opacity="0.75"/><rect x="8.7" y="23" width="5.3" height="1" fill="#000" opacity="0.75"/><rect x="14.4" y="23" width="1.5" height="1" fill="#000" opacity="0.75"/><rect x="16.4" y="23" width="1.5" height="1" fill="#000" opacity="0.75"/><rect x="18.3" y="23" width="5.3" height="1" fill="#000" opacity="0.75"/><rect x="39.9" y="23" width="4.6" height="1" fill="#000" opacity="0.75"/><rect x="44.9" y="23" width="2.3" height="1" fill="#000" opacity="0.75"/><rect x="47.6" y="23" width="1.5" height="1" fill="#000" opacity="0.75"/><rect x="49.5" y="23" width="2.3" height="1" fill="#000" opacity="0.75"/><rect x="52.2" y="23" width="4.6" height="1" fill="#000" opacity="0.75"/><rect x="57.2" y="23" width="5.3" height="1" fill="#000" opacity="0.75"/><rect x="78.6" y="23" width="3.0" height="1" fill="#000" opacity="0.75"/><rect x="82.1" y="23" width="0.8" height="1" fill="#000" opacity="0.75"/><rect x="109.1" y="23" width="1.5" height="1" fill="#000" opacity="0.75"/><rect x="119.3" y="23" width="4.6" height="1" fill="#000" opacity="0.75"/><rect x="127.8" y="23" width="5.3" height="1" fill="#000" opacity="0.75"/><rect x="5.7" y="25" width="2.3" height="1" fill="#000" opacity="0.75"/><rect x="8.7" y="25" width="2.3" height="1" fill="#000" opacity="0.75"/><rect x="11.4" y="25" width="3.8" height="1" fill="#000" opacity="0.75"/><rect x="15.6" y="25" width="3.0" height="1" fill="#000" opacity="0.75"/><rect x="39.9" y="25" width="4.6" height="1" fill="#000" opacity="0.75"/><rect x="44.9" y="25" width="4.6" height="1" fill="#000" opacity="0.75"/><rect x="49.9" y="25" width="5.3" height="1" fill="#000" opacity="0.75"/><rect x="55.6" y="25" width="2.3" height="1" fill="#000" opacity="0.75"/><rect x="58.3" y="25" width="1.5" height="1" fill="#000" opacity="0.75"/><rect x="60.3" y="25" width="4.6" height="1" fill="#000" opacity="0.75"/><rect x="78.6" y="25" width="5.3" height="1" fill="#000" opacity="0.75"/><rect x="109.1" y="25" width="1.5" height="1" fill="#000" opacity="0.75"/><rect x="119.3" y="25" width="4.6" height="1" fill="#000" opacity="0.75"/><rect x="127.8" y="25" width="5.3" height="1" fill="#000" opacity="0.75"/><rect x="5.7" y="28" width="2.3" height="1" fill="#000" opacity="0.75"/><rect x="8.7" y="28" width="3.8" height="1" fill="#000" opacity="0.75"/><rect x="12.9" y="28" width="3.8" height="1" fill="#000" opacity="0.75"/><rect x="39.9" y="28" width="5.3" height="1" fill="#000" opacity="0.75"/><rect x="45.7" y="28" width="4.6" height="1" fill="#000" opacity="0.75"/><rect x="50.6" y="28" width="2.3" height="1" fill="#000" opacity="0.75"/><rect x="53.3" y="28" width="0.8" height="1" fill="#000" opacity="0.75"/><rect x="54.5" y="28" width="1.5" height="1" fill="#000" opacity="0.75"/><rect x="56.5" y="28" width="1.5" height="1" fill="#000" opacity="0.75"/><rect x="58.4" y="28" width="0.8" height="1" fill="#000" opacity="0.75"/><rect x="59.6" y="28" width="5.3" height="1" fill="#000" opacity="0.75"/><rect x="65.3" y="28" width="3.8" height="1" fill="#000" opacity="0.75"/><rect x="78.6" y="28" width="4.6" height="1" fill="#000" opacity="0.75"/><rect x="83.6" y="28" width="0.8" height="1" fill="#000" opacity="0.75"/><rect x="84.8" y="28" width="4.6" height="1" fill="#000" opacity="0.75"/><rect x="109.1" y="28" width="1.5" height="1" fill="#000" opacity="0.75"/><rect x="119.3" y="28" width="4.6" height="1" fill="#000" opacity="0.75"/><rect x="127.8" y="28" width="5.3" height="1" fill="#000" opacity="0.75"/><rect x="5.7" y="30" width="2.3" height="1" fill="#000" opacity="0.75"/><rect x="8.7" y="30" width="4.6" height="1" fill="#000" opacity="0.75"/><rect x="13.7" y="30" width="5.3" height="1" fill="#000" opacity="0.75"/><rect x="39.9" y="30" width="0.8" height="1" fill="#000" opacity="0.75"/><rect x="41.1" y="30" width="3.0" height="1" fill="#000" opacity="0.75"/><rect x="44.6" y="30" width="1.5" height="1" fill="#000" opacity="0.75"/><rect x="46.5" y="30" width="5.3" height="1" fill="#000" opacity="0.75"/><rect x="78.6" y="30" width="3.0" height="1" fill="#000" opacity="0.75"/><rect x="82.1" y="30" width="3.0" height="1" fill="#000" opacity="0.75"/><rect x="109.1" y="30" width="1.5" height="1" fill="#000" opacity="0.75"/><rect x="119.3" y="30" width="4.6" height="1" fill="#000" opacity="0.75"/><rect x="127.8" y="30" width="5.3" height="1" fill="#000" opacity="0.75"/><rect x="5.7" y="32" width="2.3" height="1" fill="#000" opacity="0.75"/><rect x="8.7" y="32" width="4.6" height="1" fill="#000" opacity="0.75"/><rect x="13.7" y="32" width="0.8" height="1" fill="#000" opacity="0.75"/><rect x="14.9" y="32" width="2.3" height="1" fill="#000" opacity="0.75"/><rect x="17.6" y="32" width="0.8" height="1" fill="#000" opacity="0.75"/><rect x="18.7" y="32" width="5.3" height="1" fill="#000" opacity="0.75"/><rect x="39.9" y="32" width="1.5" height="1" fill="#000" opacity="0.75"/><rect x="41.9" y="32" width="1.5" height="1" fill="#000" opacity="0.75"/><rect x="43.8" y="32" width="2.3" height="1" fill="#000" opacity="0.75"/><rect x="46.5" y="32" width="1.5" height="1" fill="#000" opacity="0.75"/><rect x="78.6" y="32" width="5.3" height="1" fill="#000" opacity="0.75"/><rect x="84.4" y="32" width="1.5" height="1" fill="#000" opacity="0.75"/><rect x="86.3" y="32" width="3.0" height="1" fill="#000" opacity="0.75"/><rect x="89.8" y="32" width="0.8" height="1" fill="#000" opacity="0.75"/><rect x="90.9" y="32" width="3.0" height="1" fill="#000" opacity="0.75"/><rect x="109.1" y="32" width="1.5" height="1" fill="#000" opacity="0.75"/><rect x="119.3" y="32" width="4.6" height="1" fill="#000" opacity="0.75"/><rect x="127.8" y="32" width="5.3" height="1" fill="#000" opacity="0.75"/><rect x="5.7" y="35" width="2.3" height="1" fill="#000" opacity="0.75"/><rect x="8.7" y="35" width="2.3" height="1" fill="#000" opacity="0.75"/><rect x="11.4" y="35" width="5.3" height="1" fill="#000" opacity="0.75"/><rect x="17.1" y="35" width="2.3" height="1" fill="#000" opacity="0.75"/><rect x="39.9" y="35" width="4.6" height="1" fill="#000" opacity="0.75"/><rect x="44.9" y="35" width="3.8" height="1" fill="#000" opacity="0.75"/><rect x="49.1" y="35" width="0.8" height="1" fill="#000" opacity="0.75"/><rect x="50.3" y="35" width="5.3" height="1" fill="#000" opacity="0.75"/><rect x="56.0" y="35" width="0.8" height="1" fill="#000" opacity="0.75"/><rect x="57.2" y="35" width="3.0" height="1" fill="#000" opacity="0.75"/><rect x="60.7" y="35" width="1.5" height="1" fill="#000" opacity="0.75"/><rect x="62.6" y="35" width="5.3" height="1" fill="#000" opacity="0.75"/><rect x="78.6" y="35" width="4.6" height="1" fill="#000" opacity="0.75"/><rect x="83.6" y="35" width="3.0" height="1" fill="#000" opacity="0.75"/><rect x="87.1" y="35" width="5.3" height="1" fill="#000" opacity="0.75"/><rect x="109.1" y="35" width="1.5" height="1" fill="#000" opacity="0.75"/><rect x="119.3" y="35" width="4.6" height="1" fill="#000" opacity="0.75"/><rect x="127.8" y="35" width="5.3" height="1" fill="#000" opacity="0.75"/><rect x="5.7" y="37" width="2.3" height="1" fill="#000" opacity="0.75"/><rect x="8.7" y="37" width="3.0" height="1" fill="#000" opacity="0.75"/><rect x="12.2" y="37" width="5.3" height="1" fill="#000" opacity="0.75"/><rect x="39.9" y="37" width="2.3" height="1" fill="#000" opacity="0.75"/><rect x="42.6" y="37" width="1.5" height="1" fill="#000" opacity="0.75"/><rect x="44.6" y="37" width="0.8" height="1" fill="#000" opacity="0.75"/><rect x="45.7" y="37" width="0.8" height="1" fill="#000" opacity="0.75"/><rect x="46.9" y="37" width="3.0" height="1" fill="#000" opacity="0.75"/><rect x="50.4" y="37" width="3.8" height="1" fill="#000" opacity="0.75"/><rect x="54.6" y="37" width="2.3" height="1" fill="#000" opacity="0.75"/><rect x="57.3" y="37" width="3.0" height="1" fill="#000" opacity="0.75"/><rect x="60.7" y="37" width="1.5" height="1" fill="#000" opacity="0.75"/><rect x="62.7" y="37" width="0.8" height="1" fill="#000" opacity="0.75"/><rect x="78.6" y="37" width="0.8" height="1" fill="#000" opacity="0.75"/><rect x="79.8" y="37" width="3.8" height="1" fill="#000" opacity="0.75"/><rect x="109.1" y="37" width="1.5" height="1" fill="#000" opacity="0.75"/><rect x="119.3" y="37" width="4.6" height="1" fill="#000" opacity="0.75"/><rect x="127.8" y="37" width="5.3" height="1" fill="#000" opacity="0.75"/><rect x="5.7" y="40" width="2.3" height="1" fill="#000" opacity="0.75"/><rect x="8.7" y="40" width="3.8" height="1" fill="#000" opacity="0.75"/><rect x="12.9" y="40" width="1.5" height="1" fill="#000" opacity="0.75"/><rect x="39.9" y="40" width="5.3" height="1" fill="#000" opacity="0.75"/><rect x="45.7" y="40" width="5.3" height="1" fill="#000" opacity="0.75"/><rect x="51.4" y="40" width="2.3" height="1" fill="#000" opacity="0.75"/><rect x="78.6" y="40" width="1.5" height="1" fill="#000" opacity="0.75"/><rect x="80.6" y="40" width="3.8" height="1" fill="#000" opacity="0.75"/><rect x="84.8" y="40" width="3.0" height="1" fill="#000" opacity="0.75"/><rect x="88.2" y="40" width="3.8" height="1" fill="#000" opacity="0.75"/><rect x="92.5" y="40" width="4.6" height="1" fill="#000" opacity="0.75"/><rect x="109.1" y="40" width="1.5" height="1" fill="#000" opacity="0.75"/><rect x="119.3" y="40" width="4.6" height="1" fill="#000" opacity="0.75"/><rect x="127.8" y="40" width="5.3" height="1" fill="#000" opacity="0.75"/><rect x="5.7" y="42" width="2.3" height="1" fill="#000" opacity="0.75"/><rect x="8.7" y="42" width="5.3" height="1" fill="#000" opacity="0.75"/><rect x="14.4" y="42" width="3.8" height="1" fill="#000" opacity="0.75"/><rect x="18.7" y="42" width="3.0" height="1" fill="#000" opacity="0.75"/><rect x="39.9" y="42" width="3.8" height="1" fill="#000" opacity="0.75"/><rect x="44.1" y="42" width="1.5" height="1" fill="#000" opacity="0.75"/><rect x="46.1" y="42" width="4.6" height="1" fill="#000" opacity="0.75"/><rect x="51.1" y="42" width="3.8" height="1" fill="#000" opacity="0.75"/><rect x="78.6" y="42" width="2.3" height="1" fill="#000" opacity="0.75"/><rect x="81.3" y="42" width="4.6" height="1" fill="#000" opacity="0.75"/><rect x="86.3" y="42" width="5.3" height="1" fill="#000" opacity="0.75"/><rect x="109.1" y="42" width="1.5" height="1" fill="#000" opacity="0.75"/><rect x="119.3" y="42" width="4.6" height="1" fill="#000" opacity="0.75"/><rect x="127.8" y="42" width="5.3" height="1" fill="#000" opacity="0.75"/><rect x="5.7" y="45" width="2.3" height="1" fill="#000" opacity="0.75"/><rect x="8.7" y="45" width="2.3" height="1" fill="#000" opacity="0.75"/><rect x="11.4" y="45" width="0.8" height="1" fill="#000" opacity="0.75"/><rect x="12.6" y="45" width="3.8" height="1" fill="#000" opacity="0.75"/><rect x="39.9" y="45" width="4.6" height="1" fill="#000" opacity="0.75"/><rect x="44.9" y="45" width="1.5" height="1" fill="#000" opacity="0.75"/><rect x="46.8" y="45" width="2.3" height="1" fill="#000" opacity="0.75"/><rect x="49.5" y="45" width="4.6" height="1" fill="#000" opacity="0.75"/><rect x="54.5" y="45" width="3.0" height="1" fill="#000" opacity="0.75"/><rect x="58.0" y="45" width="3.8" height="1" fill="#000" opacity="0.75"/><rect x="78.6" y="45" width="0.8" height="1" fill="#000" opacity="0.75"/><rect x="79.8" y="45" width="5.3" height="1" fill="#000" opacity="0.75"/><rect x="109.1" y="45" width="1.5" height="1" fill="#000" opacity="0.75"/><rect x="119.3" y="45" width="4.6" height="1" fill="#000" opacity="0.75"/><rect x="127.8" y="45" width="5.3" height="1" fill="#000" opacity="0.75"/><rect x="5.7" y="47" width="2.3" height="1" fill="#000" opacity="0.75"/><rect x="8.7" y="47" width="3.0" height="1" fill="#000" opacity="0.75"/><rect x="12.2" y="47" width="1.5" height="1" fill="#000" opacity="0.75"/><rect x="14.1" y="47" width="1.5" height="1" fill="#000" opacity="0.75"/><rect x="16.0" y="47" width="1.5" height="1" fill="#000" opacity="0.75"/><rect x="18.0" y="47" width="3.0" height="1" fill="#000" opacity="0.75"/><rect x="39.9" y="47" width="1.5" height="1" fill="#000" opacity="0.75"/><rect x="41.9" y="47" width="3.0" height="1" fill="#000" opacity="0.75"/><rect x="45.3" y="47" width="4.6" height="1" fill="#000" opacity="0.75"/><rect x="50.3" y="47" width="2.3" height="1" fill="#000" opacity="0.75"/><rect x="53.0" y="47" width="3.8" height="1" fill="#000" opacity="0.75"/><rect x="78.6" y="47" width="1.5" height="1" fill="#000" opacity="0.75"/><rect x="80.6" y="47" width="5.3" height="1" fill="#000" opacity="0.75"/><rect x="86.3" y="47" width="2.3" height="1" fill="#000" opacity="0.75"/><rect x="89.0" y="47" width="4.6" height="1" fill="#000" opacity="0.75"/><rect x="109.1" y="47" width="1.5" height="1" fill="#000" opacity="0.75"/><rect x="119.3" y="47" width="4.6" height="1" fill="#000" opacity="0.75"/><rect x="127.8" y="47" width="5.3" height="1" fill="#000" opacity="0.75"/><rect x="5.7" y="50" width="2.3" height="1" fill="#000" opacity="0.75"/><rect x="8.7" y="50" width="0.8" height="1" fill="#000" opacity="0.75"/><rect x="9.9" y="50" width="3.0" height="1" fill="#000" opacity="0.75"/><rect x="13.3" y="50" width="3.8" height="1" fill="#000" opacity="0.75"/><rect x="39.9" y="50" width="2.3" height="1" fill="#000" opacity="0.75"/><rect x="42.6" y="50" width="3.8" height="1" fill="#000" opacity="0.75"/><rect x="46.8" y="50" width="1.5" height="1" fill="#000" opacity="0.75"/><rect x="48.8" y="50" width="3.0" height="1" fill="#000" opacity="0.75"/><rect x="52.2" y="50" width="5.3" height="1" fill="#000" opacity="0.75"/><rect x="78.6" y="50" width="2.3" height="1" fill="#000" opacity="0.75"/><rect x="81.3" y="50" width="1.5" height="1" fill="#000" opacity="0.75"/><rect x="83.3" y="50" width="3.0" height="1" fill="#000" opacity="0.75"/><rect x="86.7" y="50" width="0.8" height="1" fill="#000" opacity="0.75"/><rect x="87.9" y="50" width="5.3" height="1" fill="#000" opacity="0.75"/><rect x="109.1" y="50" width="1.5" height="1" fill="#000" opacity="0.75"/><rect x="119.3" y="50" width="4.6" height="1" fill="#000" opacity="0.75"/><rect x="127.8" y="50" width="5.3" height="1" fill="#000" opacity="0.75"/><rect x="5.7" y="52" width="2.3" height="1" fill="#000" opacity="0.75"/><rect x="8.7" y="52" width="1.5" height="1" fill="#000" opacity="0.75"/><rect x="10.6" y="52" width="1.5" height="1" fill="#000" opacity="0.75"/><rect x="12.6" y="52" width="1.5" height="1" fill="#000" opacity="0.75"/><rect x="14.5" y="52" width="2.3" height="1" fill="#000" opacity="0.75"/><rect x="17.2" y="52" width="2.3" height="1" fill="#000" opacity="0.75"/><rect x="19.9" y="52" width="2.3" height="1" fill="#000" opacity="0.75"/><rect x="39.9" y="52" width="0.8" height="1" fill="#000" opacity="0.75"/><rect x="41.1" y="52" width="5.3" height="1" fill="#000" opacity="0.75"/><rect x="46.8" y="52" width="1.5" height="1" fill="#000" opacity="0.75"/><rect x="48.8" y="52" width="0.8" height="1" fill="#000" opacity="0.75"/><rect x="49.9" y="52" width="1.5" height="1" fill="#000" opacity="0.75"/><rect x="51.9" y="52" width="3.8" height="1" fill="#000" opacity="0.75"/><rect x="56.1" y="52" width="4.6" height="1" fill="#000" opacity="0.75"/><rect x="78.6" y="52" width="3.0" height="1" fill="#000" opacity="0.75"/><rect x="82.1" y="52" width="3.0" height="1" fill="#000" opacity="0.75"/><rect x="85.5" y="52" width="4.6" height="1" fill="#000" opacity="0.75"/><rect x="109.1" y="52" width="1.5" height="1" fill="#000" opacity="0.75"/><rect x="119.3" y="52" width="4.6" height="1" fill="#000" opacity="0.75"/><rect x="127.8" y="52" width="5.3" height="1" fill="#000" opacity="0.75"/><rect x="5.7" y="55" width="2.3" height="1" fill="#000" opacity="0.75"/><rect x="8.7" y="55" width="3.0" height="1" fill="#000" opacity="0.75"/><rect x="12.2" y="55" width="0.8" height="1" fill="#000" opacity="0.75"/><rect x="13.3" y="55" width="0.8" height="1" fill="#000" opacity="0.75"/><rect x="14.5" y="55" width="3.0" height="1" fill="#000" opacity="0.75"/><rect x="39.9" y="55" width="2.3" height="1" fill="#000" opacity="0.75"/><rect x="42.6" y="55" width="5.3" height="1" fill="#000" opacity="0.75"/><rect x="48.4" y="55" width="3.0" height="1" fill="#000" opacity="0.75"/><rect x="109.1" y="55" width="1.5" height="1" fill="#000" opacity="0.75"/><rect x="119.3" y="55" width="4.6" height="1" fill="#000" opacity="0.75"/><rect x="127.8" y="55" width="5.3" height="1" fill="#000" opacity="0.75"/><rect x="5.7" y="57" width="2.3" height="1" fill="#000" opacity="0.75"/><rect x="8.7" y="57" width="3.0" height="1" fill="#000" opacity="0.75"/><rect x="12.2" y="57" width="2.3" height="1" fill="#000" opacity="0.75"/><rect x="14.9" y="57" width="5.3" height="1" fill="#000" opacity="0.75"/><rect x="39.9" y="57" width="2.3" height="1" fill="#000" opacity="0.75"/><rect x="42.6" y="57" width="1.5" height="1" fill="#000" opacity="0.75"/><rect x="44.6" y="57" width="3.8" height="1" fill="#000" opacity="0.75"/><rect x="48.8" y="57" width="2.3" height="1" fill="#000" opacity="0.75"/><rect x="51.5" y="57" width="3.0" height="1" fill="#000" opacity="0.75"/><rect x="54.9" y="57" width="5.3" height="1" fill="#000" opacity="0.75"/><rect x="78.6" y="57" width="1.5" height="1" fill="#000" opacity="0.75"/><rect x="80.6" y="57" width="3.8" height="1" fill="#000" opacity="0.75"/><rect x="109.1" y="57" width="1.5" height="1" fill="#000" opacity="0.75"/><rect x="119.3" y="57" width="4.6" height="1" fill="#000" opacity="0.75"/><rect x="127.8" y="57" width="5.3" height="1" fill="#000" opacity="0.75"/><rect x="3.0" y="58.73" width="130.5" height="2.48" fill="#C9DCF1"/><rect x="5.7" y="60" width="2.3" height="1" fill="#000" opacity="0.75"/><rect x="8.7" y="60" width="1.5" height="1" fill="#000" opacity="0.75"/><rect x="10.6" y="60" width="5.3" height="1" fill="#000" opacity="0.75"/><rect x="16.4" y="60" width="4.6" height="1" fill="#000" opacity="0.75"/><rect x="21.4" y="60" width="5.3" height="1" fill="#000" opacity="0.75"/><rect x="109.8" y="60" width="0.8" height="1" fill="#000" opacity="0.75"/><rect x="3.0" y="61.21" width="130.5" height="2.48" fill="#C9DCF1"/><rect x="5.7" y="62" width="2.3" height="1" fill="#000" opacity="0.75"/><rect x="8.7" y="62" width="4.6" height="1" fill="#000" opacity="0.75"/><rect x="13.7" y="62" width="3.8" height="1" fill="#000" opacity="0.75"/><rect x="17.9" y="62" width="3.0" height="1" fill="#000" opacity="0.75"/><rect x="21.4" y="62" width="5.3" height="1" fill="#000" opacity="0.75"/><rect x="109.8" y="62" width="0.8" height="1" fill="#000" opacity="0.75"/><rect x="5.7" y="65" width="2.3" height="1" fill="#000" opacity="0.75"/><rect x="8.7" y="65" width="2.3" height="1" fill="#000" opacity="0.75"/><rect x="11.4" y="65" width="5.3" height="1" fill="#000" opacity="0.75"/><rect x="39.9" y="65" width="3.0" height="1" fill="#000" opacity="0.75"/><rect x="43.4" y="65" width="4.6" height="1" fill="#000" opacity="0.75"/><rect x="48.4" y="65" width="1.5" height="1" fill="#000" opacity="0.75"/><rect x="50.3" y="65" width="3.8" height="1" fill="#000" opacity="0.75"/><rect x="54.5" y="65" width="1.5" height="1" fill="#000" opacity="0.75"/><rect x="56.5" y="65" width="5.3" height="1" fill="#000" opacity="0.75"/><rect x="78.6" y="65" width="0.8" height="1" fill="#000" opacity="0.75"/><rect x="79.8" y="65" width="5.3" height="1" fill="#000" opacity="0.75"/><rect x="85.5" y="65" width="3.8" height="1" fill="#000" opacity="0.75"/><rect x="109.1" y="65" width="1.5" height="1" fill="#000" opacity="0.75"/><rect x="119.3" y="65" width="4.6" height="1" fill="#000" opacity="0.75"/><rect x="127.8" y="65" width="5.3" height="1" fill="#000" opacity="0.75"/><rect x="5.7" y="67" width="2.3" height="1" fill="#000" opacity="0.75"/><rect x="8.7" y="67" width="1.5" height="1" fill="#000" opacity="0.75"/><rect x="10.6" y="67" width="0.8" height="1" fill="#000" opacity="0.75"/><rect x="11.8" y="67" width="5.3" height="1" fill="#000" opacity="0.75"/><rect x="17.6" y="67" width="3.0" height="1" fill="#000" opacity="0.75"/><rect x="21.0" y="67" width="4.6" height="1" fill="#000" opacity="0.75"/><rect x="39.9" y="67" width="2.3" height="1" fill="#000" opacity="0.75"/><rect x="42.6" y="67" width="0.8" height="1" fill="#000" opacity="0.75"/><rect x="43.8" y="67" width="5.3" height="1" fill="#000" opacity="0.75"/><rect x="49.5" y="67" width="3.8" height="1" fill="#000" opacity="0.75"/><rect x="53.8" y="67" width="0.8" height="1" fill="#000" opacity="0.75"/><rect x="54.9" y="67" width="2.3" height="1" fill="#000" opacity="0.75"/><rect x="78.6" y="67" width="4.6" height="1" fill="#000" opacity="0.75"/><rect x="109.1" y="67" width="1.5" height="1" fill="#000" opacity="0.75"/><rect x="119.3" y="67" width="4.6" height="1" fill="#000" opacity="0.75"/><rect x="127.8" y="67" width="5.3" height="1" fill="#000" opacity="0.75"/><rect x="5.7" y="70" width="2.3" height="1" fill="#000" opacity="0.75"/><rect x="8.7" y="70" width="1.5" height="1" fill="#000" opacity="0.75"/><rect x="10.6" y="70" width="5.3" height="1" fill="#000" opacity="0.75"/><rect x="16.4" y="70" width="0.8" height="1" fill="#000" opacity="0.75"/><rect x="17.6" y="70" width="2.3" height="1" fill="#000" opacity="0.75"/><rect x="39.9" y="70" width="5.3" height="1" fill="#000" opacity="0.75"/><rect x="45.7" y="70" width="0.8" height="1" fill="#000" opacity="0.75"/><rect x="46.8" y="70" width="3.0" height="1" fill="#000" opacity="0.75"/><rect x="50.3" y="70" width="1.5" height="1" fill="#000" opacity="0.75"/><rect x="52.2" y="70" width="3.8" height="1" fill="#000" opacity="0.75"/><rect x="56.5" y="70" width="5.3" height="1" fill="#000" opacity="0.75"/><rect x="78.6" y="70" width="3.8" height="1" fill="#000" opacity="0.75"/><rect x="82.8" y="70" width="1.5" height="1" fill="#000" opacity="0.75"/><rect x="84.8" y="70" width="0.8" height="1" fill="#000" opacity="0.75"/><rect x="86.0" y="70" width="0.8" height="1" fill="#000" opacity="0.75"/><rect x="87.1" y="70" width="3.0" height="1" fill="#000" opacity="0.75"/><rect x="109.1" y="70" width="1.5" height="1" fill="#000" opacity="0.75"/><rect x="119.3" y="70" width="4.6" height="1" fill="#000" opacity="0.75"/><rect x="127.8" y="70" width="5.3" height="1" fill="#000" opacity="0.75"/><rect x="5.7" y="72" width="2.3" height="1" fill="#000" opacity="0.75"/><rect x="8.7" y="72" width="2.3" height="1" fill="#000" opacity="0.75"/><rect x="11.4" y="72" width="3.0" height="1" fill="#000" opacity="0.75"/><rect x="14.9" y="72" width="5.3" height="1" fill="#000" opacity="0.75"/><rect x="39.9" y="72" width="4.6" height="1" fill="#000" opacity="0.75"/><rect x="44.9" y="72" width="4.6" height="1" fill="#000" opacity="0.75"/><rect x="49.9" y="72" width="0.8" height="1" fill="#000" opacity="0.75"/><rect x="51.1" y="72" width="4.6" height="1" fill="#000" opacity="0.75"/><rect x="56.0" y="72" width="5.3" height="1" fill="#000" opacity="0.75"/><rect x="61.8" y="72" width="4.6" height="1" fill="#000" opacity="0.75"/><rect x="78.6" y="72" width="2.3" height="1" fill="#000" opacity="0.75"/><rect x="81.3" y="72" width="1.5" height="1" fill="#000" opacity="0.75"/><rect x="83.3" y="72" width="1.5" height="1" fill="#000" opacity="0.75"/><rect x="85.2" y="72" width="0.8" height="1" fill="#000" opacity="0.75"/><rect x="86.4" y="72" width="3.0" height="1" fill="#000" opacity="0.75"/><rect x="89.8" y="72" width="5.3" height="1" fill="#000" opacity="0.75"/><rect x="109.1" y="72" width="1.5" height="1" fill="#000" opacity="0.75"/><rect x="119.3" y="72" width="4.6" height="1" fill="#000" opacity="0.75"/><rect x="127.8" y="72" width="5.3" height="1" fill="#000" opacity="0.75"/><rect x="5.7" y="75" width="2.3" height="1" fill="#000" opacity="0.75"/><rect x="8.7" y="75" width="3.0" height="1" fill="#000" opacity="0.75"/><rect x="12.2" y="75" width="5.3" height="1" fill="#000" opacity="0.75"/><rect x="17.9" y="75" width="2.3" height="1" fill="#000" opacity="0.75"/><rect x="39.9" y="75" width="1.5" height="1" fill="#000" opacity="0.75"/><rect x="41.9" y="75" width="3.0" height="1" fill="#000" opacity="0.75"/><rect x="45.3" y="75" width="1.5" height="1" fill="#000" opacity="0.75"/><rect x="47.3" y="75" width="0.8" height="1" fill="#000" opacity="0.75"/><rect x="48.4" y="75" width="4.6" height="1" fill="#000" opacity="0.75"/><rect x="53.4" y="75" width="5.3" height="1" fill="#000" opacity="0.75"/><rect x="59.1" y="75" width="5.3" height="1" fill="#000" opacity="0.75"/><rect x="78.6" y="75" width="0.8" height="1" fill="#000" opacity="0.75"/><rect x="79.8" y="75" width="4.6" height="1" fill="#000" opacity="0.75"/><rect x="84.8" y="75" width="3.0" height="1" fill="#000" opacity="0.75"/><rect x="109.1" y="75" width="1.5" height="1" fill="#000" opacity="0.75"/><rect x="119.3" y="75" width="4.6" height="1" fill="#000" opacity="0.75"/><rect x="127.8" y="75" width="5.3" height="1" fill="#000" opacity="0.75"/><rect x="5.7" y="77" width="2.3" height="1" fill="#000" opacity="0.75"/><rect x="8.7" y="77" width="1.5" height="1" fill="#000" opacity="0.75"/><rect x="10.6" y="77" width="5.3" height="1" fill="#000" opacity="0.75"/><rect x="16.4" y="77" width="4.6" height="1" fill="#000" opacity="0.75"/><rect x="39.9" y="77" width="2.3" height="1" fill="#000" opacity="0.75"/><rect x="42.6" y="77" width="3.0" height="1" fill="#000" opacity="0.75"/><rect x="46.1" y="77" width="1.5" height="1" fill="#000" opacity="0.75"/><rect x="48.0" y="77" width="3.8" height="1" fill="#000" opacity="0.75"/><rect x="52.2" y="77" width="2.3" height="1" fill="#000" opacity="0.75"/><rect x="54.9" y="77" width="5.3" height="1" fill="#000" opacity="0.75"/><rect x="60.7" y="77" width="0.8" height="1" fill="#000" opacity="0.75"/><rect x="61.8" y="77" width="3.0" height="1" fill="#000" opacity="0.75"/><rect x="65.3" y="77" width="0.8" height="1" fill="#000" opacity="0.75"/><rect x="78.6" y="77" width="5.3" height="1" fill="#000" opacity="0.75"/><rect x="109.1" y="77" width="1.5" height="1" fill="#000" opacity="0.75"/><rect x="119.3" y="77" width="4.6" height="1" fill="#000" opacity="0.75"/><rect x="127.8" y="77" width="5.3" height="1" fill="#000" opacity="0.75"/><rect x="5.7" y="80" width="2.3" height="1" fill="#000" opacity="0.75"/><rect x="8.7" y="80" width="5.3" height="1" fill="#000" opacity="0.75"/><rect x="14.4" y="80" width="1.5" height="1" fill="#000" opacity="0.75"/><rect x="16.4" y="80" width="1.5" height="1" fill="#000" opacity="0.75"/><rect x="18.3" y="80" width="4.6" height="1" fill="#000" opacity="0.75"/><rect x="39.9" y="80" width="3.0" height="1" fill="#000" opacity="0.75"/><rect x="43.4" y="80" width="1.5" height="1" fill="#000" opacity="0.75"/><rect x="45.3" y="80" width="2.3" height="1" fill="#000" opacity="0.75"/><rect x="48.0" y="80" width="2.3" height="1" fill="#000" opacity="0.75"/><rect x="50.7" y="80" width="2.3" height="1" fill="#000" opacity="0.75"/><rect x="53.4" y="80" width="3.0" height="1" fill="#000" opacity="0.75"/><rect x="56.9" y="80" width="5.3" height="1" fill="#000" opacity="0.75"/><rect x="78.6" y="80" width="5.3" height="1" fill="#000" opacity="0.75"/><rect x="84.4" y="80" width="2.3" height="1" fill="#000" opacity="0.75"/><rect x="109.1" y="80" width="1.5" height="1" fill="#000" opacity="0.75"/><rect x="119.3" y="80" width="4.6" height="1" fill="#000" opacity="0.75"/><rect x="127.8" y="80" width="5.3" height="1" fill="#000" opacity="0.75"/><rect x="5.7" y="82" width="2.3" height="1" fill="#000" opacity="0.75"/><rect x="8.7" y="82" width="3.0" height="1" fill="#000" opacity="0.75"/><rect x="12.2" y="82" width="2.3" height="1" fill="#000" opacity="0.75"/><rect x="14.9" y="82" width="0.8" height="1" fill="#000" opacity="0.75"/><rect x="16.0" y="82" width="1.5" height="1" fill="#000" opacity="0.75"/><rect x="18.0" y="82" width="4.6" height="1" fill="#000" opacity="0.75"/><rect x="39.9" y="82" width="2.3" height="1" fill="#000" opacity="0.75"/><rect x="42.6" y="82" width="5.3" height="1" fill="#000" opacity="0.75"/><rect x="48.4" y="82" width="1.5" height="1" fill="#000" opacity="0.75"/><rect x="50.3" y="82" width="0.8" height="1" fill="#000" opacity="0.75"/><rect x="51.5" y="82" width="5.3" height="1" fill="#000" opacity="0.75"/><rect x="78.6" y="82" width="4.6" height="1" fill="#000" opacity="0.75"/><rect x="109.1" y="82" width="1.5" height="1" fill="#000" opacity="0.75"/><rect x="119.3" y="82" width="4.6" height="1" fill="#000" opacity="0.75"/><rect x="127.8" y="82" width="5.3" height="1" fill="#000" opacity="0.75"/><rect x="5.7" y="85" width="2.3" height="1" fill="#000" opacity="0.75"/><rect x="8.7" y="85" width="4.6" height="1" fill="#000" opacity="0.75"/><rect x="13.7" y="85" width="5.3" height="1" fill="#000" opacity="0.75"/><rect x="39.9" y="85" width="3.0" height="1" fill="#000" opacity="0.75"/><rect x="43.4" y="85" width="1.5" height="1" fill="#000" opacity="0.75"/><rect x="45.3" y="85" width="0.8" height="1" fill="#000" opacity="0.75"/><rect x="46.5" y="85" width="3.8" height="1" fill="#000" opacity="0.75"/><rect x="50.7" y="85" width="0.8" height="1" fill="#000" opacity="0.75"/><rect x="51.9" y="85" width="2.3" height="1" fill="#000" opacity="0.75"/><rect x="54.6" y="85" width="5.3" height="1" fill="#000" opacity="0.75"/><rect x="60.3" y="85" width="3.8" height="1" fill="#000" opacity="0.75"/><rect x="78.6" y="85" width="3.0" height="1" fill="#000" opacity="0.75"/><rect x="82.1" y="85" width="2.3" height="1" fill="#000" opacity="0.75"/><rect x="84.8" y="85" width="1.5" height="1" fill="#000" opacity="0.75"/><rect x="86.7" y="85" width="4.6" height="1" fill="#000" opacity="0.75"/><rect x="109.1" y="85" width="1.5" height="1" fill="#000" opacity="0.75"/><rect x="119.3" y="85" width="4.6" height="1" fill="#000" opacity="0.75"/><rect x="127.8" y="85" width="5.3" height="1" fill="#000" opacity="0.75"/><rect x="5.7" y="87" width="2.3" height="1" fill="#000" opacity="0.75"/><rect x="8.7" y="87" width="0.8" height="1" fill="#000" opacity="0.75"/><rect x="9.9" y="87" width="2.3" height="1" fill="#000" opacity="0.75"/><rect x="12.6" y="87" width="3.8" height="1" fill="#000" opacity="0.75"/><rect x="39.9" y="87" width="2.3" height="1" fill="#000" opacity="0.75"/><rect x="42.6" y="87" width="5.3" height="1" fill="#000" opacity="0.75"/><rect x="48.4" y="87" width="5.3" height="1" fill="#000" opacity="0.75"/><rect x="54.1" y="87" width="2.3" height="1" fill="#000" opacity="0.75"/><rect x="56.8" y="87" width="3.8" height="1" fill="#000" opacity="0.75"/><rect x="78.6" y="87" width="5.3" height="1" fill="#000" opacity="0.75"/><rect x="109.1" y="87" width="1.5" height="1" fill="#000" opacity="0.75"/><rect x="119.3" y="87" width="4.6" height="1" fill="#000" opacity="0.75"/><rect x="127.8" y="87" width="5.3" height="1" fill="#000" opacity="0.75"/><rect x="5.7" y="89" width="2.3" height="1" fill="#000" opacity="0.75"/><rect x="8.7" y="89" width="4.6" height="1" fill="#000" opacity="0.75"/><rect x="13.7" y="89" width="5.3" height="1" fill="#000" opacity="0.75"/><rect x="19.4" y="89" width="3.8" height="1" fill="#000" opacity="0.75"/><rect x="39.9" y="89" width="3.8" height="1" fill="#000" opacity="0.75"/><rect x="44.1" y="89" width="3.8" height="1" fill="#000" opacity="0.75"/><rect x="48.4" y="89" width="3.8" height="1" fill="#000" opacity="0.75"/><rect x="52.6" y="89" width="3.8" height="1" fill="#000" opacity="0.75"/><rect x="78.6" y="89" width="2.3" height="1" fill="#000" opacity="0.75"/><rect x="81.3" y="89" width="1.5" height="1" fill="#000" opacity="0.75"/><rect x="109.1" y="89" width="1.5" height="1" fill="#000" opacity="0.75"/><rect x="119.3" y="89" width="4.6" height="1" fill="#000" opacity="0.75"/><rect x="127.8" y="89" width="5.3" height="1" fill="#000" opacity="0.75"/><rect x="5.7" y="92" width="2.3" height="1" fill="#000" opacity="0.75"/><rect x="8.7" y="92" width="3.0" height="1" fill="#000" opacity="0.75"/><rect x="12.2" y="92" width="3.8" height="1" fill="#000" opacity="0.75"/><rect x="16.4" y="92" width="3.0" height="1" fill="#000" opacity="0.75"/><rect x="19.8" y="92" width="3.8" height="1" fill="#000" opacity="0.75"/><rect x="39.9" y="92" width="5.3" height="1" fill="#000" opacity="0.75"/><rect x="45.7" y="92" width="3.8" height="1" fill="#000" opacity="0.75"/><rect x="49.9" y="92" width="4.6" height="1" fill="#000" opacity="0.75"/><rect x="54.9" y="92" width="2.3" height="1" fill="#000" opacity="0.75"/><rect x="78.6" y="92" width="4.6" height="1" fill="#000" opacity="0.75"/><rect x="109.1" y="92" width="1.5" height="1" fill="#000" opacity="0.75"/><rect x="119.3" y="92" width="4.6" height="1" fill="#000" opacity="0.75"/><rect x="127.8" y="92" width="5.3" height="1" fill="#000" opacity="0.75"/><rect x="84" y="8.5" width="24" height="1" fill="#2255dd"/><rect x="84" y="21.0" width="24" height="1" fill="#2255dd"/><rect x="84" y="23.3" width="24" height="1" fill="#2255dd"/><rect x="84" y="26.0" width="24" height="1" fill="#2255dd"/><rect x="84" y="28.3" width="24" height="1" fill="#2255dd"/><rect x="130.0" y="95.0" width="1" height="1" fill="#000"/></svg></div><div class="tb" style="left:135px;top:793px;font-size:12px;color:#222">4</div><div class="a" style="left:70px;top:830px;width:136px;height:105px;background:#fff;overflow:hidden;box-shadow:0 1px 0 #858585,1px 1px 0 #a0a0a0,1px 2px 2px rgba(0,0,0,0.25)"><svg width="137" height="105" style="position:absolute;left:0;top:0"><rect x="0" y="0" width="137" height="105" fill="#fff"/><rect x="3.6" y="4.4" width="6" height="1" fill="#000"/><rect x="3.0" y="9.20" width="130.5" height="2.48" fill="#C9DCF1"/><rect x="5.7" y="10" width="2.3" height="1" fill="#000" opacity="0.75"/><rect x="8.7" y="10" width="3.8" height="1" fill="#000" opacity="0.75"/><rect x="12.9" y="10" width="5.3" height="1" fill="#000" opacity="0.75"/><rect x="18.7" y="10" width="1.5" height="1" fill="#000" opacity="0.75"/><rect x="20.6" y="10" width="1.5" height="1" fill="#000" opacity="0.75"/><rect x="22.5" y="10" width="3.0" height="1" fill="#000" opacity="0.75"/><rect x="109.8" y="10" width="0.8" height="1" fill="#000" opacity="0.75"/><rect x="5.7" y="13" width="2.3" height="1" fill="#000" opacity="0.75"/><rect x="8.7" y="13" width="0.8" height="1" fill="#000" opacity="0.75"/><rect x="9.9" y="13" width="3.8" height="1" fill="#000" opacity="0.75"/><rect x="14.1" y="13" width="4.6" height="1" fill="#000" opacity="0.75"/><rect x="39.9" y="13" width="3.8" height="1" fill="#000" opacity="0.75"/><rect x="44.1" y="13" width="2.3" height="1" fill="#000" opacity="0.75"/><rect x="46.8" y="13" width="2.3" height="1" fill="#000" opacity="0.75"/><rect x="49.5" y="13" width="2.3" height="1" fill="#000" opacity="0.75"/><rect x="78.6" y="13" width="2.3" height="1" fill="#000" opacity="0.75"/><rect x="81.3" y="13" width="3.8" height="1" fill="#000" opacity="0.75"/><rect x="85.5" y="13" width="4.6" height="1" fill="#000" opacity="0.75"/><rect x="90.5" y="13" width="2.3" height="1" fill="#000" opacity="0.75"/><rect x="93.2" y="13" width="3.0" height="1" fill="#000" opacity="0.75"/><rect x="109.1" y="13" width="1.5" height="1" fill="#000" opacity="0.75"/><rect x="119.3" y="13" width="4.6" height="1" fill="#000" opacity="0.75"/><rect x="127.8" y="13" width="5.3" height="1" fill="#000" opacity="0.75"/><rect x="5.7" y="15" width="2.3" height="1" fill="#000" opacity="0.75"/><rect x="8.7" y="15" width="3.8" height="1" fill="#000" opacity="0.75"/><rect x="12.9" y="15" width="3.0" height="1" fill="#000" opacity="0.75"/><rect x="16.4" y="15" width="1.5" height="1" fill="#000" opacity="0.75"/><rect x="18.3" y="15" width="3.8" height="1" fill="#000" opacity="0.75"/><rect x="39.9" y="15" width="3.8" height="1" fill="#000" opacity="0.75"/><rect x="44.1" y="15" width="3.0" height="1" fill="#000" opacity="0.75"/><rect x="78.6" y="15" width="3.0" height="1" fill="#000" opacity="0.75"/><rect x="109.1" y="15" width="1.5" height="1" fill="#000" opacity="0.75"/><rect x="119.3" y="15" width="4.6" height="1" fill="#000" opacity="0.75"/><rect x="127.8" y="15" width="5.3" height="1" fill="#000" opacity="0.75"/><rect x="5.7" y="18" width="2.3" height="1" fill="#000" opacity="0.75"/><rect x="8.7" y="18" width="3.0" height="1" fill="#000" opacity="0.75"/><rect x="12.2" y="18" width="2.3" height="1" fill="#000" opacity="0.75"/><rect x="39.9" y="18" width="4.6" height="1" fill="#000" opacity="0.75"/><rect x="44.9" y="18" width="5.3" height="1" fill="#000" opacity="0.75"/><rect x="50.6" y="18" width="3.8" height="1" fill="#000" opacity="0.75"/><rect x="54.9" y="18" width="3.8" height="1" fill="#000" opacity="0.75"/><rect x="59.1" y="18" width="0.8" height="1" fill="#000" opacity="0.75"/><rect x="60.3" y="18" width="1.5" height="1" fill="#000" opacity="0.75"/><rect x="62.2" y="18" width="3.0" height="1" fill="#000" opacity="0.75"/><rect x="65.6" y="18" width="0.8" height="1" fill="#000" opacity="0.75"/><rect x="78.6" y="18" width="0.8" height="1" fill="#000" opacity="0.75"/><rect x="79.8" y="18" width="4.6" height="1" fill="#000" opacity="0.75"/><rect x="109.1" y="18" width="1.5" height="1" fill="#000" opacity="0.75"/><rect x="119.3" y="18" width="4.6" height="1" fill="#000" opacity="0.75"/><rect x="127.8" y="18" width="5.3" height="1" fill="#000" opacity="0.75"/><rect x="3.0" y="19.10" width="130.5" height="2.48" fill="#C9DCF1"/><rect x="5.7" y="20" width="2.3" height="1" fill="#000" opacity="0.75"/><rect x="8.7" y="20" width="1.5" height="1" fill="#000" opacity="0.75"/><rect x="10.6" y="20" width="1.5" height="1" fill="#000" opacity="0.75"/><rect x="12.6" y="20" width="3.8" height="1" fill="#000" opacity="0.75"/><rect x="16.8" y="20" width="3.0" height="1" fill="#000" opacity="0.75"/><rect x="20.3" y="20" width="5.3" height="1" fill="#000" opacity="0.75"/><rect x="109.8" y="20" width="0.8" height="1" fill="#000" opacity="0.75"/><rect x="3.0" y="21.58" width="130.5" height="2.48" fill="#C9DCF1"/><rect x="5.7" y="23" width="2.3" height="1" fill="#000" opacity="0.75"/><rect x="8.7" y="23" width="3.8" height="1" fill="#000" opacity="0.75"/><rect x="12.9" y="23" width="3.8" height="1" fill="#000" opacity="0.75"/><rect x="17.1" y="23" width="3.0" height="1" fill="#000" opacity="0.75"/><rect x="20.6" y="23" width="5.3" height="1" fill="#000" opacity="0.75"/><rect x="26.3" y="23" width="3.0" height="1" fill="#000" opacity="0.75"/><rect x="109.8" y="23" width="0.8" height="1" fill="#000" opacity="0.75"/><rect x="3.0" y="24.06" width="130.5" height="2.48" fill="#C9DCF1"/><rect x="5.7" y="25" width="2.3" height="1" fill="#000" opacity="0.75"/><rect x="8.7" y="25" width="5.3" height="1" fill="#000" opacity="0.75"/><rect x="14.4" y="25" width="5.3" height="1" fill="#000" opacity="0.75"/><rect x="20.2" y="25" width="2.3" height="1" fill="#000" opacity="0.75"/><rect x="22.9" y="25" width="5.3" height="1" fill="#000" opacity="0.75"/><rect x="109.8" y="25" width="0.8" height="1" fill="#000" opacity="0.75"/><rect x="130.0" y="95.0" width="1" height="1" fill="#000"/></svg></div><div class="tb" style="left:135px;top:943px;font-size:12px;color:#222">5</div><div class="a" style="left:201px;top:331px;width:7px;height:6px;background:#333"></div><div class="a" style="left:245px;top:138px;width:1543px;height:826px;background:#535353;overflow:hidden"><div class="a" style="left:0;top:0;width:1543px;height:826px"></div></div><div id="page" style="position:absolute;left:490px;top:142px;width:1059px;height:818px;background:#fff;overflow:hidden;font-size:12.1px;color:#000"><div style="position:absolute;left:28px;top:28.5px;font-size:13.6px;color:#000;white-space:nowrap">Peacock</div><div style="position:absolute;left:23.3px;top:71.3px;width:1012.0px;height:19.2px;background:#CADCF0"></div><div style="position:absolute;left:23.3px;top:167.3px;width:1012.0px;height:19.2px;background:#CADCF0"></div><div style="position:absolute;left:23.3px;top:378.5px;width:1012.0px;height:19.2px;background:#CADCF0"></div><div style="position:absolute;left:23.3px;top:493.7px;width:1012.0px;height:19.2px;background:#CADCF0"></div><div style="position:absolute;left:23.3px;top:589.7px;width:1012.0px;height:19.2px;background:#CADCF0"></div><div style="position:absolute;left:23.3px;top:70.8px;width:1012.0px;height:1px;background:#A6B7CA"></div><div style="position:absolute;left:23.3px;top:90.0px;width:1012.0px;height:1px;background:#A6B7CA"></div><div style="position:absolute;left:23.3px;top:109.2px;width:1012.0px;height:1px;background:#D9D9D9"></div><div style="position:absolute;left:23.3px;top:128.4px;width:1012.0px;height:1px;background:#D9D9D9"></div><div style="position:absolute;left:23.3px;top:147.6px;width:1012.0px;height:1px;background:#D9D9D9"></div><div style="position:absolute;left:23.3px;top:166.8px;width:1012.0px;height:1px;background:#A6B7CA"></div><div style="position:absolute;left:23.3px;top:186.0px;width:1012.0px;height:1px;background:#A6B7CA"></div><div style="position:absolute;left:23.3px;top:205.2px;width:1012.0px;height:1px;background:#D9D9D9"></div><div style="position:absolute;left:23.3px;top:224.4px;width:1012.0px;height:1px;background:#D9D9D9"></div><div style="position:absolute;left:23.3px;top:243.6px;width:1012.0px;height:1px;background:#D9D9D9"></div><div style="position:absolute;left:23.3px;top:262.8px;width:1012.0px;height:1px;background:#D9D9D9"></div><div style="position:absolute;left:23.3px;top:282.0px;width:1012.0px;height:1px;background:#D9D9D9"></div><div style="position:absolute;left:23.3px;top:301.2px;width:1012.0px;height:1px;background:#D9D9D9"></div><div style="position:absolute;left:23.3px;top:320.4px;width:1012.0px;height:1px;background:#D9D9D9"></div><div style="position:absolute;left:23.3px;top:339.6px;width:1012.0px;height:1px;background:#D9D9D9"></div><div style="position:absolute;left:23.3px;top:358.8px;width:1012.0px;height:1px;background:#D9D9D9"></div><div style="position:absolute;left:23.3px;top:378.0px;width:1012.0px;height:1px;background:#A6B7CA"></div><div style="position:absolute;left:23.3px;top:397.2px;width:1012.0px;height:1px;background:#A6B7CA"></div><div style="position:absolute;left:23.3px;top:416.4px;width:1012.0px;height:1px;background:#D9D9D9"></div><div style="position:absolute;left:23.3px;top:435.6px;width:1012.0px;height:1px;background:#D9D9D9"></div><div style="position:absolute;left:23.3px;top:454.8px;width:1012.0px;height:1px;background:#D9D9D9"></div><div style="position:absolute;left:23.3px;top:474.0px;width:1012.0px;height:1px;background:#D9D9D9"></div><div style="position:absolute;left:23.3px;top:493.2px;width:1012.0px;height:1px;background:#A6B7CA"></div><div style="position:absolute;left:23.3px;top:512.4px;width:1012.0px;height:1px;background:#A6B7CA"></div><div style="position:absolute;left:23.3px;top:531.6px;width:1012.0px;height:1px;background:#D9D9D9"></div><div style="position:absolute;left:23.3px;top:550.8px;width:1012.0px;height:1px;background:#D9D9D9"></div><div style="position:absolute;left:23.3px;top:570.0px;width:1012.0px;height:1px;background:#D9D9D9"></div><div style="position:absolute;left:23.3px;top:589.2px;width:1012.0px;height:1px;background:#A6B7CA"></div><div style="position:absolute;left:23.3px;top:608.4px;width:1012.0px;height:1px;background:#A6B7CA"></div><div style="position:absolute;left:23.3px;top:627.6px;width:1012.0px;height:1px;background:#D9D9D9"></div><div style="position:absolute;left:23.3px;top:646.8px;width:1012.0px;height:1px;background:#D9D9D9"></div><div style="position:absolute;left:23.3px;top:666.0px;width:1012.0px;height:1px;background:#D9D9D9"></div><div style="position:absolute;left:23.3px;top:685.2px;width:1012.0px;height:1px;background:#D9D9D9"></div><div style="position:absolute;left:23.3px;top:704.4px;width:1012.0px;height:1px;background:#D9D9D9"></div><div style="position:absolute;left:23.3px;top:723.6px;width:1012.0px;height:1px;background:#D9D9D9"></div><div style="position:absolute;left:22.8px;top:71.3px;width:1px;height:652.8px;background:rgba(40,40,40,0.15)"></div><div style="position:absolute;left:64.0px;top:71.3px;width:1px;height:652.8px;background:rgba(40,40,40,0.15)"></div><div style="position:absolute;left:306.0px;top:71.3px;width:1px;height:652.8px;background:rgba(40,40,40,0.15)"></div><div style="position:absolute;left:606.0px;top:71.3px;width:1px;height:652.8px;background:rgba(40,40,40,0.15)"></div><div style="position:absolute;left:801.8px;top:71.3px;width:1px;height:652.8px;background:rgba(40,40,40,0.15)"></div><div style="position:absolute;left:859.8px;top:71.3px;width:1px;height:652.8px;background:rgba(40,40,40,0.15)"></div><div style="position:absolute;left:963.0px;top:71.3px;width:1px;height:652.8px;background:rgba(40,40,40,0.15)"></div><div style="position:absolute;left:1034.8px;top:71.3px;width:1px;height:652.8px;background:rgba(40,40,40,0.15)"></div><div style="position:absolute;left:26.3px;top:74.4px;width:36.2px;height:17.2px;line-height:17.2px;overflow:hidden;white-space:pre;text-align:right;">1</div><div style="position:absolute;left:67.5px;top:74.4px;width:238.5px;height:17.2px;line-height:17.2px;overflow:hidden;white-space:pre;font-weight:bold;">Item</div><div style="position:absolute;left:309.5px;top:74.4px;width:296.5px;height:17.2px;line-height:17.2px;overflow:hidden;white-space:pre;font-weight:bold;">Description</div><div style="position:absolute;left:805.3px;top:74.4px;width:54.5px;height:17.2px;line-height:17.2px;overflow:hidden;white-space:pre;font-weight:bold;">Amount</div><div style="position:absolute;left:863.3px;top:74.4px;width:99.7px;height:17.2px;line-height:17.2px;overflow:hidden;white-space:pre;font-weight:bold;">Price</div><div style="position:absolute;left:966.5px;top:74.4px;width:68.3px;height:17.2px;line-height:17.2px;overflow:hidden;white-space:pre;font-weight:bold;">Cost</div><div style="position:absolute;left:26.3px;top:93.6px;width:36.2px;height:17.2px;line-height:17.2px;overflow:hidden;white-space:pre;text-align:right;">101</div><div style="position:absolute;left:67.5px;top:93.6px;width:238.5px;height:17.2px;line-height:17.2px;overflow:hidden;white-space:pre;">Concrete</div><div style="position:absolute;left:309.5px;top:93.6px;width:296.5px;height:17.2px;line-height:17.2px;overflow:hidden;white-space:pre;">38 Pier Footing  holes</div><div style="position:absolute;left:609.5px;top:93.6px;width:192.3px;height:17.2px;line-height:17.2px;overflow:hidden;white-space:pre;">yards</div><div style="position:absolute;left:805.3px;top:93.6px;width:53.0px;height:17.2px;line-height:17.2px;overflow:hidden;white-space:pre;text-align:right;">19</div><div style="position:absolute;left:863.3px;top:93.6px;width:98.2px;height:17.2px;line-height:17.2px;overflow:hidden;white-space:pre;text-align:right;">$135.00</div><div style="position:absolute;left:966.5px;top:93.6px;width:66.8px;height:17.2px;line-height:17.2px;overflow:hidden;white-space:pre;text-align:right;">$2,565.00</div><div style="position:absolute;left:26.3px;top:112.8px;width:36.2px;height:17.2px;line-height:17.2px;overflow:hidden;white-space:pre;text-align:right;">102</div><div style="position:absolute;left:67.5px;top:112.8px;width:238.5px;height:17.2px;line-height:17.2px;overflow:hidden;white-space:pre;">Concrete Slab</div><div style="position:absolute;left:309.5px;top:112.8px;width:296.5px;height:17.2px;line-height:17.2px;overflow:hidden;white-space:pre;">60 x 70 =4200 sf  - add 20%</div><div style="position:absolute;left:609.5px;top:112.8px;width:192.3px;height:17.2px;line-height:17.2px;overflow:hidden;white-space:pre;">yards</div><div style="position:absolute;left:805.3px;top:112.8px;width:53.0px;height:17.2px;line-height:17.2px;overflow:hidden;white-space:pre;text-align:right;">62</div><div style="position:absolute;left:863.3px;top:112.8px;width:98.2px;height:17.2px;line-height:17.2px;overflow:hidden;white-space:pre;text-align:right;">$135.00</div><div style="position:absolute;left:966.5px;top:112.8px;width:66.8px;height:17.2px;line-height:17.2px;overflow:hidden;white-space:pre;text-align:right;">$8,370.00</div><div style="position:absolute;left:26.3px;top:132.0px;width:36.2px;height:17.2px;line-height:17.2px;overflow:hidden;white-space:pre;text-align:right;">104</div><div style="position:absolute;left:67.5px;top:132.0px;width:238.5px;height:17.2px;line-height:17.2px;overflow:hidden;white-space:pre;">6 mil plastic</div><div style="position:absolute;left:805.3px;top:132.0px;width:53.0px;height:17.2px;line-height:17.2px;overflow:hidden;white-space:pre;text-align:right;">2.5</div><div style="position:absolute;left:863.3px;top:132.0px;width:98.2px;height:17.2px;line-height:17.2px;overflow:hidden;white-space:pre;text-align:right;">$98.00</div><div style="position:absolute;left:966.5px;top:132.0px;width:66.8px;height:17.2px;line-height:17.2px;overflow:hidden;white-space:pre;text-align:right;">$245.00</div><div style="position:absolute;left:26.3px;top:151.2px;width:36.2px;height:17.2px;line-height:17.2px;overflow:hidden;white-space:pre;text-align:right;">105</div><div style="position:absolute;left:67.5px;top:151.2px;width:238.5px;height:17.2px;line-height:17.2px;overflow:hidden;white-space:pre;">#57 stone</div><div style="position:absolute;left:309.5px;top:151.2px;width:296.5px;height:17.2px;line-height:17.2px;overflow:hidden;white-space:pre;">at 4" x 60 x 70 = 4200 sf or  62 tons</div><div style="position:absolute;left:805.3px;top:151.2px;width:53.0px;height:17.2px;line-height:17.2px;overflow:hidden;white-space:pre;text-align:right;">62</div><div style="position:absolute;left:863.3px;top:151.2px;width:98.2px;height:17.2px;line-height:17.2px;overflow:hidden;white-space:pre;text-align:right;">$25.00</div><div style="position:absolute;left:966.5px;top:151.2px;width:66.8px;height:17.2px;line-height:17.2px;overflow:hidden;white-space:pre;text-align:right;">$1,550.00</div><div style="position:absolute;left:26.3px;top:170.4px;width:36.2px;height:17.2px;line-height:17.2px;overflow:hidden;white-space:pre;text-align:right;">151</div><div style="position:absolute;left:67.5px;top:170.4px;width:238.5px;height:17.2px;line-height:17.2px;overflow:hidden;white-space:pre;font-weight:bold;">POST</div><div style="position:absolute;left:805.3px;top:170.4px;width:53.0px;height:17.2px;line-height:17.2px;overflow:hidden;white-space:pre;text-align:right;">0</div><div style="position:absolute;left:26.3px;top:189.6px;width:36.2px;height:17.2px;line-height:17.2px;overflow:hidden;white-space:pre;text-align:right;">153</div><div style="position:absolute;left:67.5px;top:189.6px;width:238.5px;height:17.2px;line-height:17.2px;overflow:hidden;white-space:pre;">10" x 10" x 10'</div><div style="position:absolute;left:309.5px;top:189.6px;width:296.5px;height:17.2px;line-height:17.2px;overflow:hidden;white-space:pre;">Center Post to support loft floor beam</div><div style="position:absolute;left:609.5px;top:189.6px;width:192.3px;height:17.2px;line-height:17.2px;overflow:hidden;white-space:pre;">#1</div><div style="position:absolute;left:805.3px;top:189.6px;width:53.0px;height:17.2px;line-height:17.2px;overflow:hidden;white-space:pre;text-align:right;">1</div><div style="position:absolute;left:863.3px;top:189.6px;width:98.2px;height:17.2px;line-height:17.2px;overflow:hidden;white-space:pre;text-align:right;">$62.30</div><div style="position:absolute;left:966.5px;top:189.6px;width:66.8px;height:17.2px;line-height:17.2px;overflow:hidden;white-space:pre;text-align:right;">$62.30</div><div style="position:absolute;left:26.3px;top:208.8px;width:36.2px;height:17.2px;line-height:17.2px;overflow:hidden;white-space:pre;text-align:right;">153</div><div style="position:absolute;left:67.5px;top:208.8px;width:238.5px;height:17.2px;line-height:17.2px;overflow:hidden;white-space:pre;">10" x 10" x 26'</div><div style="position:absolute;left:309.5px;top:208.8px;width:296.5px;height:17.2px;line-height:17.2px;overflow:hidden;white-space:pre;">Center Post</div><div style="position:absolute;left:609.5px;top:208.8px;width:192.3px;height:17.2px;line-height:17.2px;overflow:hidden;white-space:pre;">#2 or better butt cut</div><div style="position:absolute;left:805.3px;top:208.8px;width:53.0px;height:17.2px;line-height:17.2px;overflow:hidden;white-space:pre;text-align:right;">1</div><div style="position:absolute;left:863.3px;top:208.8px;width:98.2px;height:17.2px;line-height:17.2px;overflow:hidden;white-space:pre;text-align:right;">$162.00</div><div style="position:absolute;left:966.5px;top:208.8px;width:66.8px;height:17.2px;line-height:17.2px;overflow:hidden;white-space:pre;text-align:right;">$162.00</div><div style="position:absolute;left:26.3px;top:228.0px;width:36.2px;height:17.2px;line-height:17.2px;overflow:hidden;white-space:pre;text-align:right;">153</div><div style="position:absolute;left:67.5px;top:228.0px;width:238.5px;height:17.2px;line-height:17.2px;overflow:hidden;white-space:pre;">8" x 8" x 24'</div><div style="position:absolute;left:309.5px;top:228.0px;width:296.5px;height:17.2px;line-height:17.2px;overflow:hidden;white-space:pre;">Side wall post</div><div style="position:absolute;left:609.5px;top:228.0px;width:192.3px;height:17.2px;line-height:17.2px;overflow:hidden;white-space:pre;">#1 yellow pine</div><div style="position:absolute;left:805.3px;top:228.0px;width:53.0px;height:17.2px;line-height:17.2px;overflow:hidden;white-space:pre;text-align:right;">16</div><div style="position:absolute;left:863.3px;top:228.0px;width:98.2px;height:17.2px;line-height:17.2px;overflow:hidden;white-space:pre;text-align:right;">$139.00</div><div style="position:absolute;left:966.5px;top:228.0px;width:66.8px;height:17.2px;line-height:17.2px;overflow:hidden;white-space:pre;text-align:right;">$2,224.00</div><div style="position:absolute;left:26.3px;top:247.2px;width:36.2px;height:17.2px;line-height:17.2px;overflow:hidden;white-space:pre;text-align:right;">154</div><div style="position:absolute;left:67.5px;top:247.2px;width:238.5px;height:17.2px;line-height:17.2px;overflow:hidden;white-space:pre;">8" x 8" x 18'</div><div style="position:absolute;left:309.5px;top:247.2px;width:296.5px;height:17.2px;line-height:17.2px;overflow:hidden;white-space:pre;">Post to Support Front And Rear upper Header</div><div style="position:absolute;left:609.5px;top:247.2px;width:192.3px;height:17.2px;line-height:17.2px;overflow:hidden;white-space:pre;">#1 yellow pine</div><div style="position:absolute;left:805.3px;top:247.2px;width:53.0px;height:17.2px;line-height:17.2px;overflow:hidden;white-space:pre;text-align:right;">4</div><div style="position:absolute;left:863.3px;top:247.2px;width:98.2px;height:17.2px;line-height:17.2px;overflow:hidden;white-space:pre;text-align:right;">$72.00</div><div style="position:absolute;left:966.5px;top:247.2px;width:66.8px;height:17.2px;line-height:17.2px;overflow:hidden;white-space:pre;text-align:right;">$288.00</div><div style="position:absolute;left:26.3px;top:266.4px;width:36.2px;height:17.2px;line-height:17.2px;overflow:hidden;white-space:pre;text-align:right;">155</div><div style="position:absolute;left:67.5px;top:266.4px;width:238.5px;height:17.2px;line-height:17.2px;overflow:hidden;white-space:pre;">4" x 8" x 10'</div><div style="position:absolute;left:309.5px;top:266.4px;width:296.5px;height:17.2px;line-height:17.2px;overflow:hidden;white-space:pre;">Post to Support front lower Header for loft beam</div><div style="position:absolute;left:609.5px;top:266.4px;width:192.3px;height:17.2px;line-height:17.2px;overflow:hidden;white-space:pre;">#1 P.T. cut to 8'-6"</div><div style="position:absolute;left:805.3px;top:266.4px;width:53.0px;height:17.2px;line-height:17.2px;overflow:hidden;white-space:pre;text-align:right;">2</div><div style="position:absolute;left:863.3px;top:266.4px;width:98.2px;height:17.2px;line-height:17.2px;overflow:hidden;white-space:pre;text-align:right;">$20.00</div><div style="position:absolute;left:966.5px;top:266.4px;width:66.8px;height:17.2px;line-height:17.2px;overflow:hidden;white-space:pre;text-align:right;">$40.00</div><div style="position:absolute;left:26.3px;top:285.6px;width:36.2px;height:17.2px;line-height:17.2px;overflow:hidden;white-space:pre;text-align:right;">156</div><div style="position:absolute;left:67.5px;top:285.6px;width:238.5px;height:17.2px;line-height:17.2px;overflow:hidden;white-space:pre;">8" x 8" x 14'</div><div style="position:absolute;left:309.5px;top:285.6px;width:296.5px;height:17.2px;line-height:17.2px;overflow:hidden;white-space:pre;">Side wall post  inground pressure treated</div><div style="position:absolute;left:609.5px;top:285.6px;width:192.3px;height:17.2px;line-height:17.2px;overflow:hidden;white-space:pre;">#1 P.T.</div><div style="position:absolute;left:805.3px;top:285.6px;width:53.0px;height:17.2px;line-height:17.2px;overflow:hidden;white-space:pre;text-align:right;">16</div><div style="position:absolute;left:863.3px;top:285.6px;width:98.2px;height:17.2px;line-height:17.2px;overflow:hidden;white-space:pre;text-align:right;">$75.00</div><div style="position:absolute;left:966.5px;top:285.6px;width:66.8px;height:17.2px;line-height:17.2px;overflow:hidden;white-space:pre;text-align:right;">$1,200.00</div><div style="position:absolute;left:26.3px;top:304.8px;width:36.2px;height:17.2px;line-height:17.2px;overflow:hidden;white-space:pre;text-align:right;">159</div><div style="position:absolute;left:67.5px;top:304.8px;width:238.5px;height:17.2px;line-height:17.2px;overflow:hidden;white-space:pre;">1/2" x 20'</div><div style="position:absolute;left:309.5px;top:304.8px;width:296.5px;height:17.2px;line-height:17.2px;overflow:hidden;white-space:pre;">Rebar (Cut To 20") 2 per inground post</div><div style="position:absolute;left:609.5px;top:304.8px;width:192.3px;height:17.2px;line-height:17.2px;overflow:hidden;white-space:pre;">#4</div><div style="position:absolute;left:805.3px;top:304.8px;width:53.0px;height:17.2px;line-height:17.2px;overflow:hidden;white-space:pre;text-align:right;">3</div><div style="position:absolute;left:863.3px;top:304.8px;width:98.2px;height:17.2px;line-height:17.2px;overflow:hidden;white-space:pre;text-align:right;">$12.00</div><div style="position:absolute;left:966.5px;top:304.8px;width:66.8px;height:17.2px;line-height:17.2px;overflow:hidden;white-space:pre;text-align:right;">$36.00</div><div style="position:absolute;left:26.3px;top:324.0px;width:36.2px;height:17.2px;line-height:17.2px;overflow:hidden;white-space:pre;text-align:right;">160</div><div style="position:absolute;left:67.5px;top:324.0px;width:238.5px;height:17.2px;line-height:17.2px;overflow:hidden;white-space:pre;">2" x 4" x 16'</div><div style="position:absolute;left:309.5px;top:324.0px;width:296.5px;height:17.2px;line-height:17.2px;overflow:hidden;white-space:pre;">For temporary bracing, stakes and scaffolding</div><div style="position:absolute;left:609.5px;top:324.0px;width:192.3px;height:17.2px;line-height:17.2px;overflow:hidden;white-space:pre;">use later as interior wall studs</div><div style="position:absolute;left:805.3px;top:324.0px;width:53.0px;height:17.2px;line-height:17.2px;overflow:hidden;white-space:pre;text-align:right;">150</div><div style="position:absolute;left:863.3px;top:324.0px;width:98.2px;height:17.2px;line-height:17.2px;overflow:hidden;white-space:pre;text-align:right;">$6.00</div><div style="position:absolute;left:966.5px;top:324.0px;width:66.8px;height:17.2px;line-height:17.2px;overflow:hidden;white-space:pre;text-align:right;">$900.00</div><div style="position:absolute;left:26.3px;top:343.2px;width:36.2px;height:17.2px;line-height:17.2px;overflow:hidden;white-space:pre;text-align:right;">163</div><div style="position:absolute;left:67.5px;top:343.2px;width:238.5px;height:17.2px;line-height:17.2px;overflow:hidden;white-space:pre;">4" x10" x 10'</div><div style="position:absolute;left:309.5px;top:343.2px;width:296.5px;height:17.2px;line-height:17.2px;overflow:hidden;white-space:pre;">Attach to 10" x 10" post to support loft floor beam</div><div style="position:absolute;left:609.5px;top:343.2px;width:192.3px;height:17.2px;line-height:17.2px;overflow:hidden;white-space:pre;">#1 yellow pine</div><div style="position:absolute;left:805.3px;top:343.2px;width:53.0px;height:17.2px;line-height:17.2px;overflow:hidden;white-space:pre;text-align:right;">1</div><div style="position:absolute;left:863.3px;top:343.2px;width:98.2px;height:17.2px;line-height:17.2px;overflow:hidden;white-space:pre;text-align:right;">$25.00</div><div style="position:absolute;left:966.5px;top:343.2px;width:66.8px;height:17.2px;line-height:17.2px;overflow:hidden;white-space:pre;text-align:right;">$25.00</div><div style="position:absolute;left:26.3px;top:362.4px;width:36.2px;height:17.2px;line-height:17.2px;overflow:hidden;white-space:pre;text-align:right;">165</div><div style="position:absolute;left:67.5px;top:362.4px;width:238.5px;height:17.2px;line-height:17.2px;overflow:hidden;white-space:pre;">10" x 10" floor bracket</div><div style="position:absolute;left:309.5px;top:362.4px;width:296.5px;height:17.2px;line-height:17.2px;overflow:hidden;white-space:pre;color:#333;">For all 10" x 10" post</div><div style="position:absolute;left:609.5px;top:362.4px;width:192.3px;height:17.2px;line-height:17.2px;overflow:hidden;white-space:pre;font-size:11px;color:#333;">Simpson CB 10x10 Column Base</div><div style="position:absolute;left:805.3px;top:362.4px;width:53.0px;height:17.2px;line-height:17.2px;overflow:hidden;white-space:pre;text-align:right;">2</div><div style="position:absolute;left:863.3px;top:362.4px;width:98.2px;height:17.2px;line-height:17.2px;overflow:hidden;white-space:pre;text-align:right;">$123.00</div><div style="position:absolute;left:966.5px;top:362.4px;width:66.8px;height:17.2px;line-height:17.2px;overflow:hidden;white-space:pre;text-align:right;">$246.00</div><div style="position:absolute;left:26.3px;top:381.6px;width:36.2px;height:17.2px;line-height:17.2px;overflow:hidden;white-space:pre;text-align:right;">175</div><div style="position:absolute;left:67.5px;top:381.6px;width:238.5px;height:17.2px;line-height:17.2px;overflow:hidden;white-space:pre;font-weight:bold;">Loft Floor</div><div style="position:absolute;left:805.3px;top:381.6px;width:53.0px;height:17.2px;line-height:17.2px;overflow:hidden;white-space:pre;text-align:right;">0</div><div style="position:absolute;left:26.3px;top:400.8px;width:36.2px;height:17.2px;line-height:17.2px;overflow:hidden;white-space:pre;text-align:right;">176</div><div style="position:absolute;left:67.5px;top:400.8px;width:238.5px;height:17.2px;line-height:17.2px;overflow:hidden;white-space:pre;">8" x 12" x 30'</div><div style="position:absolute;left:309.5px;top:400.8px;width:296.5px;height:17.2px;line-height:17.2px;overflow:hidden;white-space:pre;">Beam that supports loft floor joist</div><div style="position:absolute;left:805.3px;top:400.8px;width:53.0px;height:17.2px;line-height:17.2px;overflow:hidden;white-space:pre;text-align:right;">1</div><div style="position:absolute;left:863.3px;top:400.8px;width:98.2px;height:17.2px;line-height:17.2px;overflow:hidden;white-space:pre;text-align:right;">$180.00</div><div style="position:absolute;left:966.5px;top:400.8px;width:66.8px;height:17.2px;line-height:17.2px;overflow:hidden;white-space:pre;text-align:right;">$180.00</div><div style="position:absolute;left:26.3px;top:420.0px;width:36.2px;height:17.2px;line-height:17.2px;overflow:hidden;white-space:pre;text-align:right;">177</div><div style="position:absolute;left:67.5px;top:420.0px;width:238.5px;height:17.2px;line-height:17.2px;overflow:hidden;white-space:pre;">2" x 12" x 32'</div><div style="position:absolute;left:309.5px;top:420.0px;width:296.5px;height:17.2px;line-height:17.2px;overflow:hidden;white-space:pre;">Loft floor Ties - same as joist but fastened to the post</div><div style="position:absolute;left:609.5px;top:420.0px;width:192.3px;height:17.2px;line-height:17.2px;overflow:hidden;white-space:pre;">#2 or better</div><div style="position:absolute;left:805.3px;top:420.0px;width:53.0px;height:17.2px;line-height:17.2px;overflow:hidden;white-space:pre;text-align:right;">8</div><div style="position:absolute;left:863.3px;top:420.0px;width:98.2px;height:17.2px;line-height:17.2px;overflow:hidden;white-space:pre;text-align:right;">$48.00</div><div style="position:absolute;left:966.5px;top:420.0px;width:66.8px;height:17.2px;line-height:17.2px;overflow:hidden;white-space:pre;text-align:right;">$384.00</div><div style="position:absolute;left:26.3px;top:439.2px;width:36.2px;height:17.2px;line-height:17.2px;overflow:hidden;white-space:pre;text-align:right;">178</div><div style="position:absolute;left:67.5px;top:439.2px;width:238.5px;height:17.2px;line-height:17.2px;overflow:hidden;white-space:pre;">4" x 12" x 16 rough cut</div><div style="position:absolute;left:309.5px;top:439.2px;width:296.5px;height:17.2px;line-height:17.2px;overflow:hidden;white-space:pre;">Loft floor joist 32" o.c.</div><div style="position:absolute;left:609.5px;top:439.2px;width:192.3px;height:17.2px;line-height:17.2px;overflow:hidden;white-space:pre;">#2 or better</div><div style="position:absolute;left:805.3px;top:439.2px;width:53.0px;height:17.2px;line-height:17.2px;overflow:hidden;white-space:pre;text-align:right;">17</div><div style="position:absolute;left:863.3px;top:439.2px;width:98.2px;height:17.2px;line-height:17.2px;overflow:hidden;white-space:pre;text-align:right;">$48.00</div><div style="position:absolute;left:966.5px;top:439.2px;width:66.8px;height:17.2px;line-height:17.2px;overflow:hidden;white-space:pre;text-align:right;">$816.00</div><div style="position:absolute;left:26.3px;top:458.4px;width:36.2px;height:17.2px;line-height:17.2px;overflow:hidden;white-space:pre;text-align:right;">179</div><div style="position:absolute;left:67.5px;top:458.4px;width:238.5px;height:17.2px;line-height:17.2px;overflow:hidden;white-space:pre;">2" x 12" x 16'</div><div style="position:absolute;left:309.5px;top:458.4px;width:296.5px;height:17.2px;line-height:17.2px;overflow:hidden;white-space:pre;">Optional loft floor joist 16" o.c.</div><div style="position:absolute;left:609.5px;top:458.4px;width:192.3px;height:17.2px;line-height:17.2px;overflow:hidden;white-space:pre;">#2 or better</div><div style="position:absolute;left:805.3px;top:458.4px;width:53.0px;height:17.2px;line-height:17.2px;overflow:hidden;white-space:pre;text-align:right;">34</div><div style="position:absolute;left:863.3px;top:458.4px;width:98.2px;height:17.2px;line-height:17.2px;overflow:hidden;white-space:pre;text-align:right;">$31.00</div><div style="position:absolute;left:26.3px;top:477.6px;width:36.2px;height:17.2px;line-height:17.2px;overflow:hidden;white-space:pre;text-align:right;">180</div><div style="position:absolute;left:67.5px;top:477.6px;width:238.5px;height:17.2px;line-height:17.2px;overflow:hidden;white-space:pre;">2" x 8" x 12' t&amp;g</div><div style="position:absolute;left:309.5px;top:477.6px;width:296.5px;height:17.2px;line-height:17.2px;overflow:hidden;white-space:pre;">Floor decking - v joint turned down</div><div style="position:absolute;left:609.5px;top:477.6px;width:192.3px;height:17.2px;line-height:17.2px;overflow:hidden;white-space:pre;">#2 or better</div><div style="position:absolute;left:805.3px;top:477.6px;width:53.0px;height:17.2px;line-height:17.2px;overflow:hidden;white-space:pre;text-align:right;">180</div><div style="position:absolute;left:863.3px;top:477.6px;width:98.2px;height:17.2px;line-height:17.2px;overflow:hidden;white-space:pre;text-align:right;">$8.50</div><div style="position:absolute;left:966.5px;top:477.6px;width:66.8px;height:17.2px;line-height:17.2px;overflow:hidden;white-space:pre;text-align:right;">$1,530.00</div><div style="position:absolute;left:26.3px;top:496.8px;width:36.2px;height:17.2px;line-height:17.2px;overflow:hidden;white-space:pre;text-align:right;">190</div><div style="position:absolute;left:67.5px;top:496.8px;width:238.5px;height:17.2px;line-height:17.2px;overflow:hidden;white-space:pre;font-weight:bold;">Loft Stairs</div><div style="position:absolute;left:805.3px;top:496.8px;width:53.0px;height:17.2px;line-height:17.2px;overflow:hidden;white-space:pre;text-align:right;">0</div><div style="position:absolute;left:26.3px;top:516.0px;width:36.2px;height:17.2px;line-height:17.2px;overflow:hidden;white-space:pre;text-align:right;">191</div><div style="position:absolute;left:67.5px;top:516.0px;width:238.5px;height:17.2px;line-height:17.2px;overflow:hidden;white-space:pre;">2" x 12" x 10'</div><div style="position:absolute;left:309.5px;top:516.0px;width:296.5px;height:17.2px;line-height:17.2px;overflow:hidden;white-space:pre;">Stringers</div><div style="position:absolute;left:805.3px;top:516.0px;width:53.0px;height:17.2px;line-height:17.2px;overflow:hidden;white-space:pre;text-align:right;">6</div><div style="position:absolute;left:863.3px;top:516.0px;width:98.2px;height:17.2px;line-height:17.2px;overflow:hidden;white-space:pre;text-align:right;">$10.00</div><div style="position:absolute;left:966.5px;top:516.0px;width:66.8px;height:17.2px;line-height:17.2px;overflow:hidden;white-space:pre;text-align:right;">$60.00</div><div style="position:absolute;left:26.3px;top:535.2px;width:36.2px;height:17.2px;line-height:17.2px;overflow:hidden;white-space:pre;text-align:right;">192</div><div style="position:absolute;left:67.5px;top:535.2px;width:238.5px;height:17.2px;line-height:17.2px;overflow:hidden;white-space:pre;">2" x 12" x 12'</div><div style="position:absolute;left:309.5px;top:535.2px;width:296.5px;height:17.2px;line-height:17.2px;overflow:hidden;white-space:pre;">Treads and landings</div><div style="position:absolute;left:609.5px;top:535.2px;width:192.3px;height:17.2px;line-height:17.2px;overflow:hidden;white-space:pre;">Cut treads to 11" x 3'</div><div style="position:absolute;left:805.3px;top:535.2px;width:53.0px;height:17.2px;line-height:17.2px;overflow:hidden;white-space:pre;text-align:right;">8</div><div style="position:absolute;left:863.3px;top:535.2px;width:98.2px;height:17.2px;line-height:17.2px;overflow:hidden;white-space:pre;text-align:right;">$12.00</div><div style="position:absolute;left:966.5px;top:535.2px;width:66.8px;height:17.2px;line-height:17.2px;overflow:hidden;white-space:pre;text-align:right;">$96.00</div><div style="position:absolute;left:26.3px;top:554.4px;width:36.2px;height:17.2px;line-height:17.2px;overflow:hidden;white-space:pre;text-align:right;">193</div><div style="position:absolute;left:67.5px;top:554.4px;width:238.5px;height:17.2px;line-height:17.2px;overflow:hidden;white-space:pre;">6" x 6" x 12'</div><div style="position:absolute;left:309.5px;top:554.4px;width:296.5px;height:17.2px;line-height:17.2px;overflow:hidden;white-space:pre;">post</div><div style="position:absolute;left:805.3px;top:554.4px;width:53.0px;height:17.2px;line-height:17.2px;overflow:hidden;white-space:pre;text-align:right;">4</div><div style="position:absolute;left:863.3px;top:554.4px;width:98.2px;height:17.2px;line-height:17.2px;overflow:hidden;white-space:pre;text-align:right;">$36.00</div><div style="position:absolute;left:966.5px;top:554.4px;width:66.8px;height:17.2px;line-height:17.2px;overflow:hidden;white-space:pre;text-align:right;">$144.00</div><div style="position:absolute;left:26.3px;top:573.6px;width:36.2px;height:17.2px;line-height:17.2px;overflow:hidden;white-space:pre;text-align:right;">194</div><div style="position:absolute;left:67.5px;top:573.6px;width:238.5px;height:17.2px;line-height:17.2px;overflow:hidden;white-space:pre;">6" x 6" post floor bracket</div><div style="position:absolute;left:805.3px;top:573.6px;width:53.0px;height:17.2px;line-height:17.2px;overflow:hidden;white-space:pre;text-align:right;">4</div><div style="position:absolute;left:863.3px;top:573.6px;width:98.2px;height:17.2px;line-height:17.2px;overflow:hidden;white-space:pre;text-align:right;">$15.00</div><div style="position:absolute;left:966.5px;top:573.6px;width:66.8px;height:17.2px;line-height:17.2px;overflow:hidden;white-space:pre;text-align:right;">$60.00</div><div style="position:absolute;left:26.3px;top:592.8px;width:36.2px;height:17.2px;line-height:17.2px;overflow:hidden;white-space:pre;text-align:right;">201</div><div style="position:absolute;left:67.5px;top:592.8px;width:238.5px;height:17.2px;line-height:17.2px;overflow:hidden;white-space:pre;font-weight:bold;">BANDS - Wall Ties</div><div style="position:absolute;left:805.3px;top:592.8px;width:53.0px;height:17.2px;line-height:17.2px;overflow:hidden;white-space:pre;text-align:right;">0</div><div style="position:absolute;left:26.3px;top:612.0px;width:36.2px;height:17.2px;line-height:17.2px;overflow:hidden;white-space:pre;text-align:right;">207</div><div style="position:absolute;left:67.5px;top:612.0px;width:238.5px;height:17.2px;line-height:17.2px;overflow:hidden;white-space:pre;">2" x 12" x32'</div><div style="position:absolute;left:309.5px;top:612.0px;width:296.5px;height:17.2px;line-height:17.2px;overflow:hidden;white-space:pre;">For rear at 11'</div><div style="position:absolute;left:609.5px;top:612.0px;width:192.3px;height:17.2px;line-height:17.2px;overflow:hidden;white-space:pre;">#2 or better</div><div style="position:absolute;left:805.3px;top:612.0px;width:53.0px;height:17.2px;line-height:17.2px;overflow:hidden;white-space:pre;text-align:right;">2</div><div style="position:absolute;left:863.3px;top:612.0px;width:98.2px;height:17.2px;line-height:17.2px;overflow:hidden;white-space:pre;text-align:right;">$48.00</div><div style="position:absolute;left:966.5px;top:612.0px;width:66.8px;height:17.2px;line-height:17.2px;overflow:hidden;white-space:pre;text-align:right;">$96.00</div><div style="position:absolute;left:26.3px;top:631.2px;width:36.2px;height:17.2px;line-height:17.2px;overflow:hidden;white-space:pre;text-align:right;">207</div><div style="position:absolute;left:67.5px;top:631.2px;width:238.5px;height:17.2px;line-height:17.2px;overflow:hidden;white-space:pre;">2" x 12" x32'</div><div style="position:absolute;left:309.5px;top:631.2px;width:296.5px;height:17.2px;line-height:17.2px;overflow:hidden;white-space:pre;">Upper Wall Ties</div><div style="position:absolute;left:609.5px;top:631.2px;width:192.3px;height:17.2px;line-height:17.2px;overflow:hidden;white-space:pre;">#2 or better</div><div style="position:absolute;left:805.3px;top:631.2px;width:53.0px;height:17.2px;line-height:17.2px;overflow:hidden;white-space:pre;text-align:right;">12</div><div style="position:absolute;left:863.3px;top:631.2px;width:98.2px;height:17.2px;line-height:17.2px;overflow:hidden;white-space:pre;text-align:right;">$48.00</div><div style="position:absolute;left:966.5px;top:631.2px;width:66.8px;height:17.2px;line-height:17.2px;overflow:hidden;white-space:pre;text-align:right;">$576.00</div><div style="position:absolute;left:26.3px;top:650.4px;width:36.2px;height:17.2px;line-height:17.2px;overflow:hidden;white-space:pre;text-align:right;">208</div><div style="position:absolute;left:67.5px;top:650.4px;width:238.5px;height:17.2px;line-height:17.2px;overflow:hidden;white-space:pre;">2" x 12" x16' (cut to 15' 4")</div><div style="position:absolute;left:309.5px;top:650.4px;width:296.5px;height:17.2px;line-height:17.2px;overflow:hidden;white-space:pre;">Wall Ties lower</div><div style="position:absolute;left:609.5px;top:650.4px;width:192.3px;height:17.2px;line-height:17.2px;overflow:hidden;white-space:pre;">#2 or better</div><div style="position:absolute;left:805.3px;top:650.4px;width:53.0px;height:17.2px;line-height:17.2px;overflow:hidden;white-space:pre;text-align:right;">16</div><div style="position:absolute;left:863.3px;top:650.4px;width:98.2px;height:17.2px;line-height:17.2px;overflow:hidden;white-space:pre;text-align:right;">$18.00</div><div style="position:absolute;left:966.5px;top:650.4px;width:66.8px;height:17.2px;line-height:17.2px;overflow:hidden;white-space:pre;text-align:right;">$288.00</div><div style="position:absolute;left:26.3px;top:669.6px;width:36.2px;height:17.2px;line-height:17.2px;overflow:hidden;white-space:pre;text-align:right;">208</div><div style="position:absolute;left:67.5px;top:669.6px;width:238.5px;height:17.2px;line-height:17.2px;overflow:hidden;white-space:pre;">2" x 12" x16' (cut to 15' 4")</div><div style="position:absolute;left:309.5px;top:669.6px;width:296.5px;height:17.2px;line-height:17.2px;overflow:hidden;white-space:pre;">Wall Ties lower - add 16 to tie all outside post to center post</div><div style="position:absolute;left:609.5px;top:669.6px;width:192.3px;height:17.2px;line-height:17.2px;overflow:hidden;white-space:pre;">#2 or better (optional)</div><div style="position:absolute;left:805.3px;top:669.6px;width:53.0px;height:17.2px;line-height:17.2px;overflow:hidden;white-space:pre;text-align:right;">16</div><div style="position:absolute;left:863.3px;top:669.6px;width:98.2px;height:17.2px;line-height:17.2px;overflow:hidden;white-space:pre;text-align:right;">$18.00</div><div style="position:absolute;left:966.5px;top:669.6px;width:66.8px;height:17.2px;line-height:17.2px;overflow:hidden;white-space:pre;text-align:right;">$288.00</div><div style="position:absolute;left:26.3px;top:688.8px;width:36.2px;height:17.2px;line-height:17.2px;overflow:hidden;white-space:pre;text-align:right;">209</div><div style="position:absolute;left:67.5px;top:688.8px;width:238.5px;height:17.2px;line-height:17.2px;overflow:hidden;white-space:pre;">2" x 12" x 10'</div><div style="position:absolute;left:309.5px;top:688.8px;width:296.5px;height:17.2px;line-height:17.2px;overflow:hidden;white-space:pre;">Lower bands</div><div style="position:absolute;left:609.5px;top:688.8px;width:192.3px;height:17.2px;line-height:17.2px;overflow:hidden;white-space:pre;">#2 or better</div><div style="position:absolute;left:805.3px;top:688.8px;width:53.0px;height:17.2px;line-height:17.2px;overflow:hidden;white-space:pre;text-align:right;">56</div><div style="position:absolute;left:863.3px;top:688.8px;width:98.2px;height:17.2px;line-height:17.2px;overflow:hidden;white-space:pre;text-align:right;">$15.00</div><div style="position:absolute;left:966.5px;top:688.8px;width:66.8px;height:17.2px;line-height:17.2px;overflow:hidden;white-space:pre;text-align:right;">$840.00</div><div style="position:absolute;left:26.3px;top:708.0px;width:36.2px;height:17.2px;line-height:17.2px;overflow:hidden;white-space:pre;text-align:right;">210</div><div style="position:absolute;left:67.5px;top:708.0px;width:238.5px;height:17.2px;line-height:17.2px;overflow:hidden;white-space:pre;">2" x 12" x 10'</div><div style="position:absolute;left:309.5px;top:708.0px;width:296.5px;height:17.2px;line-height:17.2px;overflow:hidden;white-space:pre;">Upper Bands</div><div style="position:absolute;left:609.5px;top:708.0px;width:192.3px;height:17.2px;line-height:17.2px;overflow:hidden;white-space:pre;">#2 or better</div><div style="position:absolute;left:805.3px;top:708.0px;width:53.0px;height:17.2px;line-height:17.2px;overflow:hidden;white-space:pre;text-align:right;">56</div><div style="position:absolute;left:863.3px;top:708.0px;width:98.2px;height:17.2px;line-height:17.2px;overflow:hidden;white-space:pre;text-align:right;">$15.00</div><div style="position:absolute;left:966.5px;top:708.0px;width:66.8px;height:17.2px;line-height:17.2px;overflow:hidden;white-space:pre;text-align:right;">$840.00</div></div><div class="a" style="left:247px;top:527px;width:1px;height:47px;background:repeating-linear-gradient(#C8C8C8 0 1px,transparent 1px 2px)"></div><div class="a" style="left:249px;top:527px;width:1px;height:47px;background:repeating-linear-gradient(#C8C8C8 0 1px,transparent 1px 2px)"></div><div class="a" style="left:1788px;top:138px;width:21px;height:826px;background:#F0F0F0"></div><div class="a" style="left:1789px;top:167px;width:19px;height:156px;background:#CDCDCD"></div><svg style="position:absolute;left:1791px;top:152px;" width="14" height="9" viewBox="0 0 14 9"><path d="M1.5 7.5 L7 2 L12.5 7.5" stroke="#555" stroke-width="2" fill="none"/></svg><svg style="position:absolute;left:1791px;top:949px;" width="14" height="9" viewBox="0 0 14 9"><path d="M1.5 1.5 L7 7 L12.5 1.5" stroke="#555" stroke-width="2" fill="none"/></svg><svg width="0" height="0" style="position:absolute"><defs>
<linearGradient id="gFold" x1="0" y1="0" x2="0" y2="1"><stop offset="0" stop-color="#F6E9B8"/><stop offset="1" stop-color="#DCC27C"/></linearGradient>
<linearGradient id="gFold2" x1="0" y1="0" x2="0" y2="1"><stop offset="0" stop-color="#FBF0C6"/><stop offset="1" stop-color="#E3CB86"/></linearGradient>
<linearGradient id="gDoc" x1="0" y1="0" x2="1" y2="1"><stop offset="0" stop-color="#FFFFFF"/><stop offset="1" stop-color="#E4E4E4"/></linearGradient>
<linearGradient id="gGray" x1="0" y1="0" x2="0" y2="1"><stop offset="0" stop-color="#FAFAFA"/><stop offset="1" stop-color="#D8D8D8"/></linearGradient>
<linearGradient id="gCircle" x1="0" y1="0" x2="0" y2="1"><stop offset="0" stop-color="#FDFDFD"/><stop offset="1" stop-color="#DDDDDD"/></linearGradient>
<linearGradient id="gBlue" x1="0" y1="0" x2="0" y2="1"><stop offset="0" stop-color="#B9D4F0"/><stop offset="1" stop-color="#6E9ACB"/></linearGradient>
<linearGradient id="gGreen" x1="0" y1="0" x2="0" y2="1"><stop offset="0" stop-color="#9BE07A"/><stop offset="1" stop-color="#3FA92A"/></linearGradient>
<linearGradient id="gRed" x1="0" y1="0" x2="0" y2="1"><stop offset="0" stop-color="#F5666A"/><stop offset="1" stop-color="#C8181E"/></linearGradient>
<radialGradient id="gRedC" cx="0.4" cy="0.35" r="0.7"><stop offset="0" stop-color="#F04848"/><stop offset="1" stop-color="#B3141A"/></radialGradient>
<linearGradient id="gStar" x1="0" y1="0" x2="0" y2="1"><stop offset="0" stop-color="#FFE27A"/><stop offset="1" stop-color="#D9A52C"/></linearGradient>
<linearGradient id="gPress" x1="0" y1="0" x2="0" y2="1"><stop offset="0" stop-color="#B4B4B4"/><stop offset="1" stop-color="#A2A2A2"/></linearGradient>
<linearGradient id="gPink" x1="0" y1="0" x2="0" y2="1"><stop offset="0" stop-color="#F7C6C6"/><stop offset="1" stop-color="#E49C9C"/></linearGradient>
</defs></svg><svg style="position:absolute;left:17px;top:70px;" width="28" height="24" viewBox="17 70 28 24"><path d="M19.5 90.5 V73.5 Q19.5 72.5 20.5 72.5 H26 L27.5 74.5 H38.5 Q39.5 74.5 39.5 75.5 V90.5 Z" fill="url(#gFold)" stroke="#5E5034" stroke-width="1.1" stroke-linejoin="round"/><path d="M19.5 90.5 L22.3 78.3 Q22.5 77.5 23.5 77.5 H41.8 Q42.8 77.5 42.5 78.5 L39.5 90.5 Z" fill="url(#gFold2)" stroke="#5E5034" stroke-width="1.1" stroke-linejoin="round"/></svg><svg style="position:absolute;left:120px;top:70px;" width="28" height="28" viewBox="120 70 28 28"><path d="M125.5 72.5 H137.0 L141.5 77.0 V91.5 H125.5 Z" fill="url(#gDoc)" stroke="#333" stroke-width="1.1" stroke-linejoin="round"/><path d="M137.0 73.0 V77.0 H141.0" fill="none" stroke="#333" stroke-width="0.8"/><rect x="122" y="75" width="10.5" height="5.5" fill="url(#gRed)" stroke="#A01418" stroke-width="0.7"/><path d="M138.8 81.8 L140.2 84.4 L143.1 83.7 L142.4 86.6 L145 88 L142.4 89.4 L143.1 92.3 L140.2 91.6 L138.8 94.2 L137.4 91.6 L134.5 92.3 L135.2 89.4 L132.6 88 L135.2 86.6 L134.5 83.7 L137.4 84.4 Z" fill="url(#gStar)" stroke="#B98620" stroke-width="0.6"/></svg><svg style="position:absolute;left:242px;top:70px;" width="24" height="24" viewBox="242 70 24 24"><path d="M244.5 73 Q244.5 72 245.5 72 H260 L263.5 75.5 V90.5 Q263.5 91.5 262.5 91.5 H245.5 Q244.5 91.5 244.5 90.5 Z" fill="#D2D2D2" stroke="#A8A8A8" stroke-width="1"/><rect x="248.5" y="72" width="10.5" height="6.3" fill="#E8E8E8" stroke="#A8A8A8" stroke-width="0.9"/><rect x="255.5" y="73" width="1.8" height="3.5" fill="#A8A8A8"/><rect x="248.3" y="83.5" width="11.5" height="7.6" fill="#F2F2F2" stroke="#B0B0B0" stroke-width="0.6"/><path d="M250 86 H258 M250 88.5 H258" stroke="#C8C8C8" stroke-width="0.8"/></svg><svg style="position:absolute;left:278px;top:70px;" width="28" height="24" viewBox="278 70 28 24"><path d="M283.5 88.5 Q279.8 88.5 280 85 Q280.3 81.8 283.8 81.5 Q284.3 76 289 76 Q290.8 73 294 73.3 Q298.5 73.8 299 78.8 Q303.8 79.5 303.7 84.2 Q303.5 88.5 299 88.5 Z" fill="url(#gCircle)" stroke="#4A4A4A" stroke-width="1.1"/><path d="M292 79 L297.8 85.2 H294.6 V91.5 H289.4 V85.2 H286.2 Z" fill="url(#gGreen)" stroke="#3C8A22" stroke-width="0.8" stroke-linejoin="round"/></svg><svg style="position:absolute;left:316px;top:68px;" width="28" height="28" viewBox="316 68 28 28"><rect x="323.3" y="70.3" width="13.4" height="9" rx="0.8" fill="url(#gGray)" stroke="#333" stroke-width="1"/><path d="M320.5 77.5 H339.5 Q341 77.5 341 79 V86.5 Q341 88 339.5 88 H320.5 Q319 88 319 86.5 V79 Q319 77.5 320.5 77.5 Z" fill="url(#gBlue)" stroke="#2F3F52" stroke-width="1"/><rect x="319.3" y="85.8" width="21.4" height="2.6" fill="#39424C"/><rect x="323.3" y="85.5" width="13.4" height="7" rx="0.6" fill="#FAFAFA" stroke="#333" stroke-width="1"/><path d="M325.5 88 H334.5 M325.5 90 H331" stroke="#9A9A9A" stroke-width="0.8"/></svg><svg style="position:absolute;left:356px;top:70px;" width="28" height="24" viewBox="356 70 28 24"><path d="M359.5 72.5 H370.5 L375.5 77.5 V91.5 H359.5 Z" fill="url(#gDoc)" stroke="#333" stroke-width="1.1" stroke-linejoin="round"/><path d="M370.5 73.0 V77.5 H375.0" fill="none" stroke="#333" stroke-width="0.8"/><path d="M362 77.5 H367 M362 80.5 H366 M362 83.5 H365" stroke="#BBB" stroke-width="0.9"/><path d="M364 85.5 L362.3 89 L365.5 87.6" fill="none" stroke="#222" stroke-width="0.9"/><path d="M365 88 L377.5 75.5 Q379 74.5 379.8 75.8 Q380.3 77 379 78 L366.8 90 Z" fill="url(#gBlue)" stroke="#334" stroke-width="0.9" stroke-linejoin="round"/></svg><svg style="position:absolute;left:392px;top:72px;" width="28" height="20" viewBox="392 72 28 20"><rect x="394.5" y="74.5" width="23" height="15" rx="1.2" fill="url(#gGray)" stroke="#3A3A3A" stroke-width="1.1"/><path d="M396 76 L406 85.5 L416 76 M396 88 L402.5 82 M416 88 L409.5 82" fill="none" stroke="#8E8E8E" stroke-width="0.8"/></svg><svg style="position:absolute;left:446px;top:71px;" width="22" height="22" viewBox="446 71 22 22"><path d="M454.97 75.74 L455.24 73.51 L458.56 73.51 L458.83 75.74 L460.00 76.22 L461.76 74.84 L464.11 77.19 L462.73 78.95 L463.21 80.12 L465.44 80.39 L465.44 83.71 L463.21 83.98 L462.73 85.15 L464.11 86.91 L461.76 89.26 L460.00 87.88 L458.83 88.36 L458.56 90.59 L455.24 90.59 L454.97 88.36 L453.80 87.88 L452.04 89.26 L449.69 86.91 L451.07 85.15 L450.59 83.98 L448.36 83.71 L448.36 80.39 L450.59 80.12 L451.07 78.95 L449.69 77.19 L452.04 74.84 L453.80 76.22 Z" fill="#C9C9C9" stroke="#3E3E3E" stroke-width="1.05" stroke-linejoin="round"/><circle cx="456.9" cy="82.05" r="2.6" fill="#F4F4F4" stroke="#3E3E3E" stroke-width="1.1"/></svg><svg style="position:absolute;left:478px;top:72px;" width="24" height="22" viewBox="478 72 24 22"><path d="M486 87.2 Q480.2 85.5 480.2 80.7 Q480.2 74.3 489.9 74.3 Q499.6 74.3 499.6 80.7 Q499.6 87 490 87.2 Q487.5 90 483.6 90.3 Q486 88.7 486 87.2 Z" fill="#F8F5A8" stroke="#555" stroke-width="1.1" stroke-linejoin="round"/><path d="M485 79.5 H494.8 M485 81.6 H494.8 M485 83.7 H490.5" stroke="#8A8350" stroke-width="0.9"/></svg><svg style="position:absolute;left:511px;top:72px;" width="24" height="22" viewBox="511 72 24 22"><rect x="513.5" y="74.5" width="17" height="11" rx="0.7" fill="#FDFDFD" stroke="#333" stroke-width="1.1"/><rect x="515" y="76.3" width="7" height="7.8" fill="#F2F21C"/><path d="M516.2 77.4 H520.8 M518.5 77.4 V83.2 M517.2 83.2 H519.8" stroke="#3A3018" stroke-width="1.1"/><path d="M519.6 88.2 L530.3 77.5 Q531.6 76.6 532.5 77.6 Q533.2 78.5 532.2 79.6 L521.5 90.2 Z" fill="#BDBDBD" stroke="#444" stroke-width="0.9" stroke-linejoin="round"/><circle cx="519.6" cy="89.6" r="1.8" fill="#D9E07A" stroke="#7C8A18" stroke-width="0.8"/></svg><svg style="position:absolute;left:545px;top:70px;" width="26" height="24" viewBox="545 70 26 24"><path d="M547.5 72.5 H556.5 L560.5 76.5 V88.5 H547.5 Z" fill="url(#gDoc)" stroke="#333" stroke-width="1.1" stroke-linejoin="round"/><path d="M556.5 73.0 V76.5 H560.0" fill="none" stroke="#333" stroke-width="0.8"/><circle cx="560" cy="84.9" r="6.1" fill="url(#gRedC)" stroke="#8E1014" stroke-width="0.6"/><path d="M557 81.9 L563 87.9 M563 81.9 L557 87.9" stroke="#fff" stroke-width="1.4"/></svg><svg style="position:absolute;left:578px;top:70px;" width="24" height="24" viewBox="578 70 24 24"><path d="M580.5 72.5 H589.5 L593.5 76.5 V88.5 H580.5 Z" fill="url(#gDoc)" stroke="#333" stroke-width="1.1" stroke-linejoin="round"/><path d="M589.5 73.0 V76.5 H593.0" fill="none" stroke="#333" stroke-width="0.8"/><path d="M587.5 89 Q585.9 86.8 586.2 84 Q586.8 79.6 591 79.4 Q595.3 79.4 595.8 84 Q596 87.4 593 89" fill="none" stroke="#4D6B8A" stroke-width="3.2"/><path d="M587.5 89 Q585.9 86.8 586.2 84 Q586.8 79.6 591 79.4 Q595.3 79.4 595.8 84 Q596 87.4 593 89" fill="none" stroke="#BCD6EE" stroke-width="1.8"/><path d="M591.2 86.3 L594.6 89.8 L591 91.3 Z" fill="#BCD6EE" stroke="#4D6B8A" stroke-width="0.6"/></svg><svg style="position:absolute;left:611px;top:70px;" width="24" height="24" viewBox="611 70 24 24"><path d="M613.5 72.5 H622.5 L626.5 76.5 V88.5 H613.5 Z" fill="url(#gDoc)" stroke="#333" stroke-width="1.1" stroke-linejoin="round"/><path d="M622.5 73.0 V76.5 H626.0" fill="none" stroke="#333" stroke-width="0.8"/><path d="M619.2 79 Q616 82.5 618.2 86 Q620.5 88.7 626.5 87.5 V90.5 L631.8 85.6 L626.5 81 V84.2 Q622.5 85 621 83 Q620.3 81.3 621.5 79.5 Z" fill="url(#gGreen)" stroke="#2F7A1E" stroke-width="0.9" stroke-linejoin="round"/></svg><svg style="position:absolute;left:643px;top:70px;" width="24" height="24" viewBox="643 70 24 24"><path d="M647.5 73.5 H657.5 L661.5 77.5 V90.5 H647.5 Z" fill="url(#gDoc)" stroke="#333" stroke-width="1.1" stroke-linejoin="round"/><path d="M657.5 74.0 V77.5 H661.0" fill="none" stroke="#333" stroke-width="0.8"/><rect x="645.2" y="75.3" width="9.4" height="4.6" fill="url(#gRed)" stroke="#A01418" stroke-width="0.7"/><path d="M653.2 88.6 L662 79 Q663.3 77.8 664.3 78.8 Q665.2 79.8 664 81 L655 90 Z" fill="#F2C94A" stroke="#8A5A18" stroke-width="0.8" stroke-linejoin="round"/><path d="M653.2 88.6 L652.8 90.6 L655 90 Z" fill="#111"/></svg><svg style="position:absolute;left:676px;top:72px;" width="24" height="20" viewBox="676 72 24 20"><path d="M678.8 79.5 H689 V75.3 L697.8 82.3 L689 89.3 V85.1 H678.8 Z" fill="#FAFAFA" stroke="#333" stroke-width="1.1" stroke-linejoin="round"/></svg><svg style="position:absolute;left:709px;top:78px;" width="24" height="8" viewBox="709 78 24 8"><rect x="711.6" y="81.3" width="18.8" height="2.4" rx="1.2" fill="#FAFAFA" stroke="#333" stroke-width="0.9"/></svg><svg style="position:absolute;left:742px;top:70px;" width="24" height="24" viewBox="742 70 24 24"><path d="M745.3 90.3 L747 86 L759.8 73.2 Q761.5 71.8 763 73.2 Q764.3 74.8 762.8 76.3 L750 89 Z" fill="url(#gRed)" stroke="#5A1A1A" stroke-width="0.9" stroke-linejoin="round"/><path d="M757.3 75.6 L760.6 78.9" stroke="#8A8A8A" stroke-width="2.2"/><path d="M745.3 90.3 L746.2 88 L747.7 89.5 Z" fill="#333"/></svg><svg style="position:absolute;left:775px;top:72px;" width="24" height="22" viewBox="775 72 24 22"><path d="M777.7 85 L787.5 74.5 H795.3 Q797 74.7 796.6 76.3 L796.2 78.3 L786.3 90.3 H778.5 Q777.5 90.2 777.6 89 Z" fill="url(#gPink)" stroke="#5E3A3A" stroke-width="1" stroke-linejoin="round"/><path d="M777.7 85 H786.5 L796.4 77.5 M786.5 85 V90.2" fill="none" stroke="#5E3A3A" stroke-width="0.8"/><rect x="778.2" y="85.4" width="8" height="4.5" fill="#F8D6D6"/></svg><svg style="position:absolute;left:18px;top:106px;" width="26" height="26" viewBox="18 106 26 26"><circle cx="30.5" cy="118.4" r="11" fill="url(#gCircle)" stroke="#C4C4C4" stroke-width="0.9"/><path d="M30.5 111 L37 117.8 H33.8 V123.7 H27.2 V117.8 H24 Z" fill="#B6B6B6"/></svg><svg style="position:absolute;left:51px;top:106px;" width="26" height="26" viewBox="51 106 26 26"><circle cx="63.5" cy="118.4" r="11" fill="url(#gCircle)" stroke="#8E8E8E" stroke-width="0.9"/><path d="M63.5 126 L57 119.1 H60.2 V113 H66.8 V119.1 H70 Z" fill="#555"/></svg><svg style="position:absolute;left:153px;top:105px;" width="28" height="28" viewBox="153 105 28 28"><path d="M159 111.3 H163.8 M161.4 111.3 V126.3 M159 126.3 H163.8" stroke="#F4F4F4" stroke-width="2.4"/><path d="M159 111.3 H163.8 M161.4 111.3 V126.3 M159 126.3 H163.8" stroke="#5A5A5A" stroke-width="1"/><path d="M166.3 110.2 V125.5 L169.6 122.3 L172.5 128.2 L175 127 L172.3 121.2 L177 120.8 Z" fill="#666" stroke="#E8E8E8" stroke-width="0.7" stroke-linejoin="round"/></svg><svg style="position:absolute;left:188px;top:107px;" width="24" height="24" viewBox="188 107 24 24"><path d="M195.5 127.5 L191.3 121.4 Q190 119.6 191.6 118.9 Q192.8 118.5 194 120 L195.2 121.5 V112.6 Q195.2 111.2 196.5 111.2 Q197.8 111.2 197.8 112.6 V118 V110.6 Q197.8 109.2 199.2 109.2 Q200.6 109.2 200.6 110.6 V118 V111.4 Q200.6 110 202 110 Q203.3 110 203.3 111.4 V118.3 V113.3 Q203.3 112 204.6 112 Q206 112 206 113.4 V121.5 Q206 125 203.8 127.5 Z" fill="#FAFAFA" stroke="#333" stroke-width="1.1" stroke-linejoin="round"/></svg><svg style="position:absolute;left:233px;top:106px;" width="28" height="26" viewBox="233 106 28 26"><circle cx="246.5" cy="118.5" r="11" fill="url(#gCircle)" stroke="#8E8E8E" stroke-width="0.9"/><rect x="240" y="116.3" width="12.9" height="4.4" fill="#626262"/></svg><svg style="position:absolute;left:266px;top:106px;" width="28" height="26" viewBox="266 106 28 26"><circle cx="279.3" cy="118.5" r="11" fill="url(#gCircle)" stroke="#8E8E8E" stroke-width="0.9"/><path d="M272.2 116.3 H277 V111 H281.9 V116.3 H287.1 V120.7 H281.9 V126 H277 V120.7 H272.2 Z" fill="#626262"/></svg><svg style="position:absolute;left:395px;top:107px;" width="20" height="24" viewBox="395 107 20 24"><path d="M397.9 108.6 V114.3 Q397.9 115.4 399 115.4 H411.2 Q412.3 115.4 412.3 114.3 V108.6" fill="#F0F0F0" stroke="#222" stroke-width="1.2"/><path d="M397.9 128.4 V118.9 Q397.9 117.8 399 117.8 H408.6 L412.3 121.5 V128.4" fill="#F4F4F4" stroke="#222" stroke-width="1.2"/><path d="M408.3 118.1 V121.6 H412" fill="none" stroke="#555" stroke-width="0.7"/><path d="M399 125.3 H411.2 M401.2 123.2 L399 125.3 L401.2 127.4 M409 123.2 L411.2 125.3 L409 127.4" fill="none" stroke="#5A74C0" stroke-width="1.3"/></svg><svg style="position:absolute;left:426px;top:107px;" width="24" height="24" viewBox="426 107 24 24"><path d="M430.6 110 Q430.6 109.3 431.3 109.3 H443 L446.6 112.9 V127 Q446.6 127.7 445.9 127.7 H431.3 Q430.6 127.7 430.6 127 Z" fill="#F6F6F8" stroke="#222" stroke-width="1.3" stroke-linejoin="round"/><path d="M442.8 109.6 V113.1 H446.3" fill="none" stroke="#555" stroke-width="0.7"/><path d="M436.4 110.5 V126.5 M431.5 119.3 H446 M434.3 112.6 L436.4 110.5 L438.5 112.6 M434.3 124.4 L436.4 126.5 L438.5 124.4 M433.6 117.2 L431.5 119.3 L433.6 121.4 M443.9 117.2 L446 119.3 L443.9 121.4" fill="none" stroke="#5A74C0" stroke-width="1.3"/></svg><svg style="position:absolute;left:16px;top:144px;" width="26" height="28" viewBox="16 144 26 28"><path d="M18.8 152.2 Q18.8 151.4 19.6 151.4 H33.2 V168.8 Q33.2 169.5 32.5 169.5 H19.6 Q18.8 169.5 18.8 168.7 Z" fill="#F6F6F6" stroke="#222" stroke-width="1.1" stroke-linejoin="round"/><path d="M23.6 148.1 Q23.6 147.3 24.4 147.3 H35.2 L38.6 150.7 V164.6 Q38.6 165.4 37.8 165.4 H24.4 Q23.6 165.4 23.6 164.6 Z" fill="#EEEEEE" stroke="#222" stroke-width="1.1" stroke-linejoin="round"/><path d="M35 147.6 V150.9 H38.3" fill="#FAFAFA" stroke="#555" stroke-width="0.7"/></svg><svg style="position:absolute;left:17px;top:188px;" width="24" height="28" viewBox="17 188 24 28"><path d="M19.5 191 Q19.5 190 21 190 H34.5 Q36.5 190 36.5 192 V202 H31.5 V213 L25.8 207 L19.5 212.5 Z" fill="#BCD3E6" stroke="#8FA6BA" stroke-width="0.9" stroke-linejoin="round"/><path d="M30.5 191 H34.5 Q36.5 191 36.5 193 V201 H31.5 Z" fill="#9FB8CC"/></svg><svg style="position:absolute;left:15px;top:231px;" width="26" height="28" viewBox="15 231 26 28"><path d="M25 247 L33.5 238.5 Q35.5 236.5 37 238 Q38.5 239.5 36.5 241.5 L24 254 Q21 257 18.5 254.5 Q16 252 19 249 L31 237 Q34 234 36.5 234.5" fill="none" stroke="#7A7A7A" stroke-width="2.6" stroke-linecap="round"/><path d="M25 247 L33.5 238.5 Q35.5 236.5 37 238 Q38.5 239.5 36.5 241.5 L24 254 Q21 257 18.5 254.5 Q16 252 19 249 L31 237 Q34 234 36.5 234.5" fill="none" stroke="#DADADA" stroke-width="1.1" stroke-linecap="round"/></svg><svg style="position:absolute;left:14px;top:278px;" width="28" height="24" viewBox="14 278 28 24"><rect x="16.5" y="281.5" width="19" height="12" fill="#F2F2F2" stroke="#777" stroke-width="0.9"/><path d="M19 290.5 Q21 285 22 287 Q22.5 290 24.5 288 Q25.5 287.5 26 290" fill="none" stroke="#333" stroke-width="0.9"/><path d="M22.5 297 L34.5 284.5 Q36 283 37.5 284.5 Q38.8 286 37.4 287.5 L25.5 299.5 Q23 300.5 22.5 297 Z" fill="#C3D7EA" stroke="#7890A8" stroke-width="0.9" stroke-linejoin="round"/></svg><svg style="position:absolute;left:54px;top:184px;" width="30" height="20" viewBox="54 184 30 20"><rect x="56.5" y="186.7" width="15" height="13.6" fill="#F2F2F2" stroke="#333" stroke-width="1.1"/><rect x="56.5" y="186.7" width="15" height="2.2" fill="#555"/><circle cx="59.8" cy="192" r="1.6" fill="none" stroke="#333" stroke-width="0.9"/><circle cx="59.8" cy="196.8" r="1.6" fill="none" stroke="#333" stroke-width="0.9"/><path d="M62.8 192 H70 M62.8 196.8 H70" stroke="#333" stroke-width="1"/><path d="M73 192 H80 L76.5 196 Z" fill="#444"/></svg><div style="position:absolute;left:86px;top:188px;width:1px;height:15px;background:#888"></div><svg style="position:absolute;left:94px;top:184px;" width="24" height="24" viewBox="94 184 24 24"><path d="M96.5 186.5 H104.0 L107.5 190.0 V201.5 H96.5 Z" fill="#EFEFEF" stroke="#BDBDBD" stroke-width="0.9" stroke-linejoin="round"/><path d="M104.0 187.0 V190.0 H107.0" fill="none" stroke="#BDBDBD" stroke-width="0.8"/><circle cx="109" cy="198" r="5" fill="#D8D8D8" stroke="#BDBDBD" stroke-width="0.8"/><path d="M106.5 195.5 L111.5 200.5 M111.5 195.5 L106.5 200.5" stroke="#F4F4F4" stroke-width="1.2"/></svg><svg style="position:absolute;left:126px;top:184px;" width="24" height="24" viewBox="126 184 24 24"><path d="M128.5 186.5 H137.0 L140.5 190.0 V201.5 H128.5 Z" fill="url(#gDoc)" stroke="#333" stroke-width="1.1" stroke-linejoin="round"/><path d="M137.0 187.0 V190.0 H140.0" fill="none" stroke="#333" stroke-width="0.8"/><path d="M134 193.5 Q131.5 196.5 133.5 199.5 Q135.5 201.5 141 200.8 V203.5 L146.5 199 L141 194.8 V197.5 Q137 198 136 196.5 Q135.4 195 136.3 193.5 Z" fill="url(#gGreen)" stroke="#2F7A1E" stroke-width="0.9" stroke-linejoin="round"/></svg><svg style="position:absolute;left:158px;top:184px;" width="24" height="24" viewBox="158 184 24 24"><path d="M160.5 186.5 H173.0 L176.5 190.0 V201.5 H160.5 Z" fill="#EFEFEF" stroke="#BDBDBD" stroke-width="0.9" stroke-linejoin="round"/><path d="M173.0 187.0 V190.0 H176.0" fill="none" stroke="#BDBDBD" stroke-width="0.8"/><path d="M162.5 203 Q161.5 199 162.5 196.5 Q164 193 167 193.3 Q170.5 193.5 171.5 197.5 Q171.5 200.5 169 203"  fill="none" stroke="#C4C4C4" stroke-width="2.2"/></svg><svg style="position:absolute;left:190px;top:184px;" width="24" height="24" viewBox="190 184 24 24"><path d="M192.5 186.5 H205.0 L208.5 190.0 V201.5 H192.5 Z" fill="#EFEFEF" stroke="#BDBDBD" stroke-width="0.9" stroke-linejoin="round"/><path d="M205.0 187.0 V190.0 H208.0" fill="none" stroke="#BDBDBD" stroke-width="0.8"/><path d="M194.5 203 Q193.5 199 194.5 196.5 Q196 193 199 193.3 Q202.5 193.5 203.5 197.5 Q203.5 200.5 201 203"  fill="none" stroke="#C4C4C4" stroke-width="2.2"/></svg><div class="tb" style="left:1317px;top:900px;font-size:32px;font-weight:normal;color:#C8C8C8;letter-spacing:0.8px;-webkit-text-stroke:2.9px #C8C8C8">&copy; Conrad Arnold - Barn Guru.com</div><div class="tb" style="left:1317px;top:900px;font-size:32px;font-weight:normal;color:#000;letter-spacing:0.8px;-webkit-text-stroke:0.8px #000">&copy; Conrad Arnold - Barn Guru.com</div></body></html>
